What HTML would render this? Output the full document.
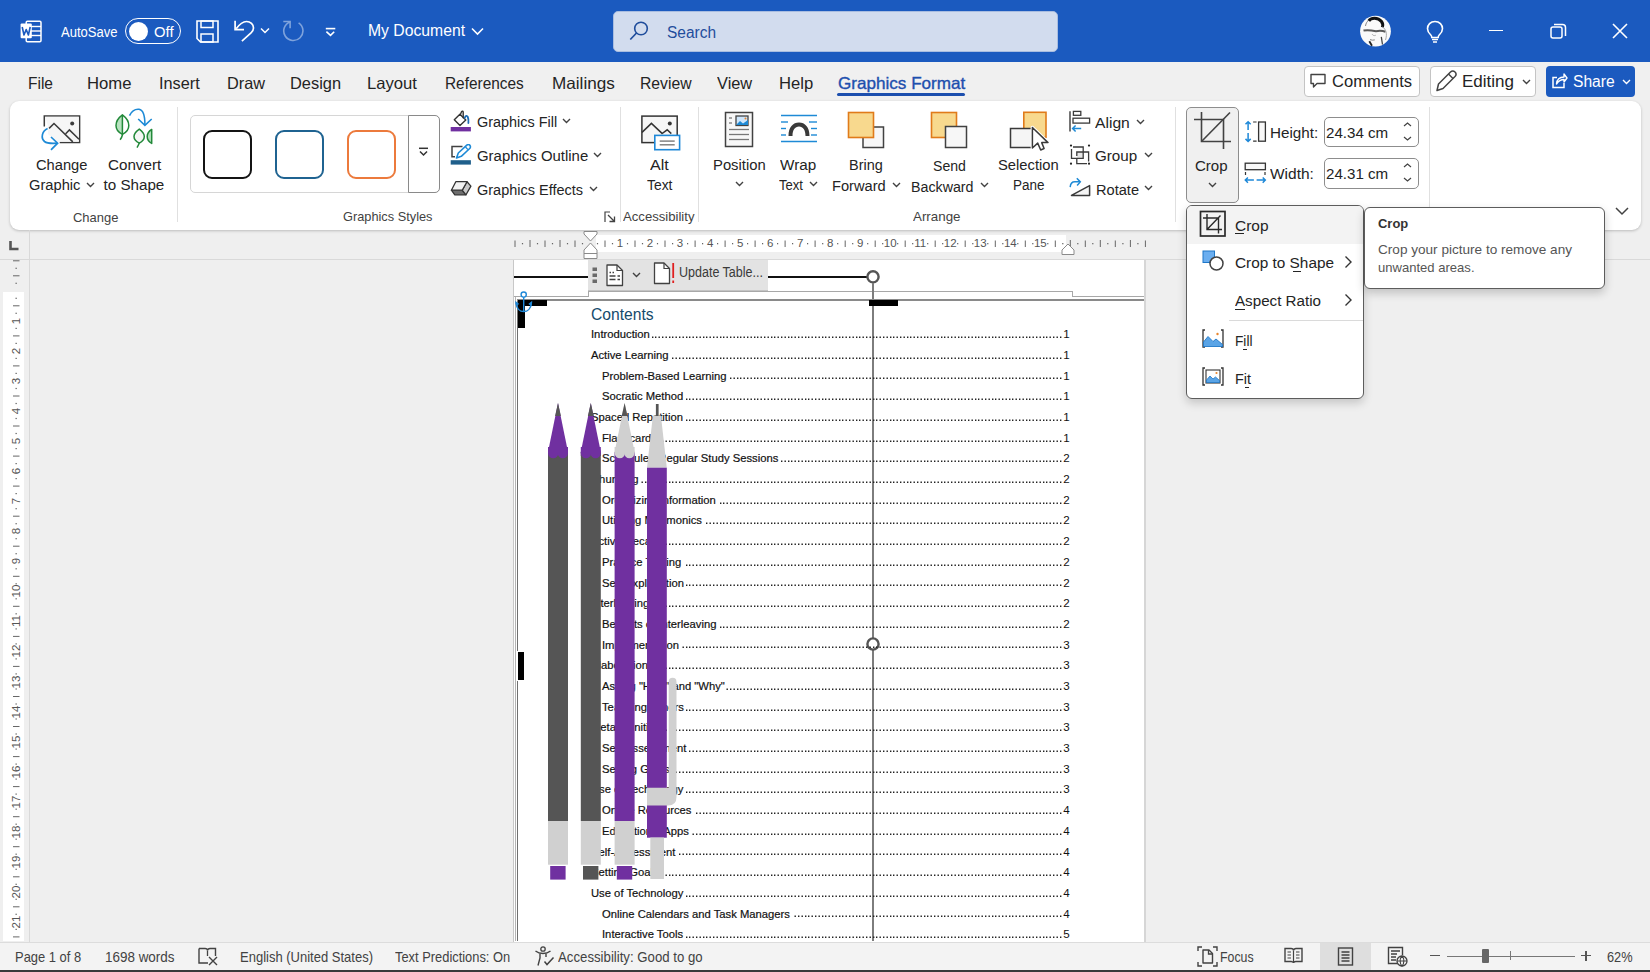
<!DOCTYPE html>
<html><head><meta charset="utf-8"><style>
html,body{margin:0;padding:0;width:1650px;height:972px;overflow:hidden;background:#efefef;font-family:"Liberation Sans", sans-serif;position:relative}
</style></head><body>
<div style="position:absolute;left:0px;top:0px;width:1650px;height:62px;background:#1b5abf"></div>
<svg style="position:absolute;left:20px;top:20px;" width="23" height="23" viewBox="0 0 23 23" fill="none">
<rect x="6.2" y="1.3" width="14.8" height="20.5" rx="1.2" stroke="#fff" stroke-width="1.5"/>
<line x1="11" y1="6.5" x2="21" y2="6.5" stroke="#fff" stroke-width="1.4"/>
<line x1="11" y1="11" x2="21" y2="11" stroke="#fff" stroke-width="1.4"/>
<line x1="11" y1="15.5" x2="21" y2="15.5" stroke="#fff" stroke-width="1.4"/>
<rect x="0.6" y="3.6" width="11.2" height="14.6" rx="1" fill="#fff"/>
<path d="M2.2 7 L4 15 L6.2 9.5 L8.4 15 L10.2 7" stroke="#1b5abf" stroke-width="1.6" fill="none" stroke-linejoin="round"/>
</svg>
<div style="position:absolute;left:61.00px;top:25.15px;font-size:14px;line-height:14px;color:#fff;font-weight:normal;white-space:nowrap;transform:scaleX(0.9307);transform-origin:0 0;">AutoSave</div>
<div style="position:absolute;left:125px;top:18px;width:56px;height:26px;border:1.5px solid #fff;border-radius:14px;box-sizing:border-box"></div>
<div style="position:absolute;left:129px;top:22px;width:19px;height:19px;border-radius:50%;background:#fff"></div>
<div style="position:absolute;left:154.00px;top:25.15px;font-size:14px;line-height:14px;color:#fff;font-weight:normal;white-space:nowrap;transform:scaleX(1.0589);transform-origin:0 0;">Off</div>
<svg style="position:absolute;left:196px;top:20px;" width="23" height="23" viewBox="0 0 23 23" fill="none">
<path d="M1 1 H22 V22 H4.5 L1 18.5 Z" stroke="#fff" stroke-width="1.6" fill="none"/>
<rect x="5" y="1" width="12" height="6.5" stroke="#fff" stroke-width="1.5"/>
<rect x="5" y="14" width="12" height="8" stroke="#fff" stroke-width="1.5"/>
</svg>
<svg style="position:absolute;left:233px;top:20px;" width="23" height="23" viewBox="0 0 23 23" fill="none">
<path d="M2.1 0.8 V9.6 H11" stroke="#fff" stroke-width="1.7" fill="none"/>
<path d="M3.2 8.8 C6.5 4.2 9.8 1.5 13.5 1.5 C17.5 1.5 20.5 4.5 20.5 8 C20.5 10 19.5 11.5 18 13 L8.9 21.2" stroke="#fff" stroke-width="1.7" fill="none"/>
</svg>
<svg style="position:absolute;left:260px;top:27px;" width="10" height="7" viewBox="0 0 10 7" fill="none"><path d="M1 1.5 L5 5.5 L9 1.5" stroke="#fff" stroke-width="1.5"/></svg>
<svg style="position:absolute;left:282px;top:20px;" width="23" height="23" viewBox="0 0 23 23" fill="none">
<path d="M16.6 2.9 A9.6 9.6 0 1 1 8.1 1.9" stroke="#7fa3dc" stroke-width="1.6" fill="none"/>
<path d="M1.3 1.5 H8.1 V8.3" stroke="#7fa3dc" stroke-width="1.6" fill="none"/>
</svg>
<svg style="position:absolute;left:324px;top:26px;" width="13" height="11" viewBox="0 0 13 11" fill="none"><line x1="1.8" y1="2.6" x2="11.3" y2="2.6" stroke="#fff" stroke-width="1.6"/><path d="M2.4 5.7 L6.5 9.4 L10.2 5.7" stroke="#fff" stroke-width="1.6"/></svg>
<div style="position:absolute;left:368.00px;top:23.46px;font-size:16px;line-height:16px;color:#fff;font-weight:normal;white-space:nowrap;transform:scaleX(0.9828);transform-origin:0 0;">My Document</div>
<svg style="position:absolute;left:471px;top:27px;" width="13" height="9" viewBox="0 0 13 9" fill="none"><path d="M1 1.5 L6.5 7 L12 1.5" stroke="#fff" stroke-width="1.6"/></svg>
<div style="position:absolute;left:613px;top:10.5px;width:445px;height:41px;background:#d2dcee;border:1px solid #a9bde0;border-radius:5px;box-sizing:border-box"></div>
<svg style="position:absolute;left:629px;top:21px;" width="20" height="20" viewBox="0 0 20 20" fill="none"><circle cx="12" cy="7.5" r="6.3" stroke="#1f4d9c" stroke-width="1.6"/><line x1="7.5" y1="12" x2="1.3" y2="18.5" stroke="#1f4d9c" stroke-width="1.7"/></svg>
<div style="position:absolute;left:666.50px;top:25.46px;font-size:16px;line-height:16px;color:#1f4d9c;font-weight:normal;white-space:nowrap;transform:scaleX(0.9666);transform-origin:0 0;">Search</div>
<svg style="position:absolute;left:1359px;top:15px" width="33" height="33" viewBox="0 0 33 33">
<circle cx="16.5" cy="16.2" r="15.4" fill="#fafafa"/>
<path d="M9.8 6 C11.5 2.5 19 2 22.5 6.5 C23.8 8.3 24 10.5 23.3 12.2" stroke="#111" stroke-width="3" fill="none"/>
<path d="M6.5 11 C7 8 8 6.5 9.5 5.5" stroke="#777" stroke-width="0.9" fill="none"/>
<path d="M4.5 15.6 C9 14.6 14 15.6 17 16.2 C20 15.6 23 15.4 26.5 16.8" stroke="#5a5a5a" stroke-width="2" fill="none"/>
<path d="M23.5 12 C27 14 28.5 19 26.5 25" stroke="#aaa" stroke-width="1" fill="none"/>
<path d="M11 24.6 Q13.3 25.6 15.8 24.9" stroke="#888" stroke-width="1" fill="none"/>
<path d="M10.3 26.3 L13 30.8" stroke="#222" stroke-width="1.8"/>
<path d="M22.3 21.8 L23.5 29.5" stroke="#444" stroke-width="1.3"/>
<path d="M13 19 C14 21 16 21 17 20" stroke="#aaa" stroke-width="0.8" fill="none"/>
</svg>
<svg style="position:absolute;left:1426px;top:20px;" width="18" height="23" viewBox="0 0 18 23" fill="none">
<path d="M9 1.5 C4.5 1.5 1.5 4.8 1.5 8.8 C1.5 11.5 3 13.3 4.8 15 C5.6 15.8 5.8 16.5 5.8 17.5 H12.2 C12.2 16.5 12.4 15.8 13.2 15 C15 13.3 16.5 11.5 16.5 8.8 C16.5 4.8 13.5 1.5 9 1.5 Z" stroke="#fff" stroke-width="1.6" fill="none"/>
<line x1="6" y1="19.5" x2="12" y2="19.5" stroke="#fff" stroke-width="1.5"/>
<line x1="7" y1="22" x2="11" y2="22" stroke="#fff" stroke-width="1.5"/>
</svg>
<div style="position:absolute;left:1489px;top:29.5px;width:14px;height:1.6px;background:#fff"></div>
<svg style="position:absolute;left:1550px;top:23px;" width="17" height="17" viewBox="0 0 17 17" fill="none">
<rect x="1" y="4" width="11" height="11" rx="2" stroke="#fff" stroke-width="1.5"/>
<path d="M4 1.5 H12.5 C14.2 1.5 15.5 2.8 15.5 4.5 V13" stroke="#fff" stroke-width="1.5" fill="none"/>
</svg>
<svg style="position:absolute;left:1612px;top:23px;" width="16" height="16" viewBox="0 0 16 16" fill="none"><path d="M1 1 L15 15 M15 1 L1 15" stroke="#fff" stroke-width="1.6"/></svg>
<div style="position:absolute;left:0px;top:62px;width:1650px;height:38px;background:#f0f0f0"></div>
<div style="position:absolute;left:28.00px;top:75.33px;font-size:16.5px;line-height:16.5px;color:#242424;font-weight:normal;white-space:nowrap;transform:scaleX(0.9403);transform-origin:0 0;">File</div>
<div style="position:absolute;left:87.30px;top:75.33px;font-size:16.5px;line-height:16.5px;color:#242424;font-weight:normal;white-space:nowrap;transform:scaleX(1.0111);transform-origin:0 0;">Home</div>
<div style="position:absolute;left:159.00px;top:75.33px;font-size:16.5px;line-height:16.5px;color:#242424;font-weight:normal;white-space:nowrap;transform:scaleX(0.9863);transform-origin:0 0;">Insert</div>
<div style="position:absolute;left:226.50px;top:75.33px;font-size:16.5px;line-height:16.5px;color:#242424;font-weight:normal;white-space:nowrap;transform:scaleX(0.9869);transform-origin:0 0;">Draw</div>
<div style="position:absolute;left:290.00px;top:75.33px;font-size:16.5px;line-height:16.5px;color:#242424;font-weight:normal;white-space:nowrap;transform:scaleX(0.9930);transform-origin:0 0;">Design</div>
<div style="position:absolute;left:367.00px;top:75.33px;font-size:16.5px;line-height:16.5px;color:#242424;font-weight:normal;white-space:nowrap;transform:scaleX(1.0093);transform-origin:0 0;">Layout</div>
<div style="position:absolute;left:444.80px;top:75.33px;font-size:16.5px;line-height:16.5px;color:#242424;font-weight:normal;white-space:nowrap;transform:scaleX(0.9327);transform-origin:0 0;">References</div>
<div style="position:absolute;left:551.70px;top:75.33px;font-size:16.5px;line-height:16.5px;color:#242424;font-weight:normal;white-space:nowrap;transform:scaleX(1.0376);transform-origin:0 0;">Mailings</div>
<div style="position:absolute;left:640.00px;top:75.33px;font-size:16.5px;line-height:16.5px;color:#242424;font-weight:normal;white-space:nowrap;transform:scaleX(0.9538);transform-origin:0 0;">Review</div>
<div style="position:absolute;left:717.40px;top:75.33px;font-size:16.5px;line-height:16.5px;color:#242424;font-weight:normal;white-space:nowrap;transform:scaleX(0.9925);transform-origin:0 0;">View</div>
<div style="position:absolute;left:778.50px;top:75.33px;font-size:16.5px;line-height:16.5px;color:#242424;font-weight:normal;white-space:nowrap;transform:scaleX(1.0078);transform-origin:0 0;">Help</div>
<div style="position:absolute;left:837.50px;top:75.33px;font-size:16.5px;line-height:16.5px;color:#1d4fae;font-weight:normal;white-space:nowrap;transform:scaleX(1.0361);transform-origin:0 0;-webkit-text-stroke:0.35px #1d4fae;">Graphics Format</div>
<div style="position:absolute;left:837px;top:93px;width:128px;height:3px;background:#1d4fae;border-radius:1.5px"></div>
<div style="position:absolute;left:1304px;top:65.5px;width:116px;height:31px;background:#fff;border:1px solid #c4c4c4;border-radius:4px;box-sizing:border-box"></div>
<svg style="position:absolute;left:1310px;top:73px;" width="16" height="15" viewBox="0 0 16 15" fill="none"><path d="M1 1.5 H15 V10.5 H7 L3.5 14 V10.5 H1 Z" stroke="#424242" stroke-width="1.4" fill="none" stroke-linejoin="round"/></svg>
<div style="position:absolute;left:1331.50px;top:74.16px;font-size:16px;line-height:16px;color:#242424;font-weight:normal;white-space:nowrap;transform:scaleX(1.0342);transform-origin:0 0;">Comments</div>
<div style="position:absolute;left:1430px;top:65.5px;width:106px;height:31px;background:#fff;border:1px solid #c4c4c4;border-radius:4px;box-sizing:border-box"></div>
<svg style="position:absolute;left:1435px;top:70px;" width="23" height="22" viewBox="0 0 23 22" fill="none"><path d="M2 20.5 L3.5 14 L15.5 2 C16.8 0.8 18.8 0.8 20 2 C21.2 3.2 21.2 5.2 20 6.5 L8 18.5 Z" stroke="#424242" stroke-width="1.5" fill="none" stroke-linejoin="round"/><line x1="13.5" y1="4" x2="18" y2="8.5" stroke="#424242" stroke-width="1.4"/></svg>
<div style="position:absolute;left:1462.40px;top:74.16px;font-size:16px;line-height:16px;color:#242424;font-weight:normal;white-space:nowrap;transform:scaleX(1.0629);transform-origin:0 0;">Editing</div>
<svg style="position:absolute;left:1522px;top:79px;" width="9" height="6" viewBox="0 0 9 6" fill="none"><path d="M1 1 L4.5 4.5 L8 1" stroke="#424242" stroke-width="1.4"/></svg>
<div style="position:absolute;left:1546px;top:66px;width:89px;height:30.5px;background:#1b5abf;border-radius:4px"></div>
<svg style="position:absolute;left:1551px;top:72px;" width="17" height="17" viewBox="0 0 17 17" fill="none"><path d="M6 5.5 H2 V15.5 H13 V11" stroke="#fff" stroke-width="1.5" fill="none"/><path d="M5.5 12 C6 7 9 5 13 5 V2 L16 6 L13 10 V7.5 C10 7.5 7.5 9 5.5 12 Z" stroke="#fff" stroke-width="1.4" fill="none" stroke-linejoin="round"/></svg>
<div style="position:absolute;left:1573.00px;top:74.16px;font-size:16px;line-height:16px;color:#fff;font-weight:normal;white-space:nowrap;transform:scaleX(0.9767);transform-origin:0 0;">Share</div>
<svg style="position:absolute;left:1622px;top:79px;" width="9" height="6" viewBox="0 0 9 6" fill="none"><path d="M1 1 L4.5 4.5 L8 1" stroke="#fff" stroke-width="1.4"/></svg>
<div style="position:absolute;left:10px;top:100.5px;width:1631px;height:129.5px;background:#fff;border-radius:9px;box-shadow:0 1px 3px rgba(0,0,0,0.22)"></div>
<div style="position:absolute;left:177px;top:107px;width:1px;height:115px;background:#e0e0e0"></div>
<div style="position:absolute;left:619.5px;top:107px;width:1px;height:115px;background:#e0e0e0"></div>
<div style="position:absolute;left:698px;top:107px;width:1px;height:115px;background:#e0e0e0"></div>
<div style="position:absolute;left:1174.5px;top:107px;width:1px;height:115px;background:#e0e0e0"></div>
<div style="position:absolute;left:1429px;top:107px;width:1px;height:115px;background:#e0e0e0"></div>
<div style="position:absolute;left:73.30px;top:210.83px;font-size:13.2px;line-height:13.2px;color:#424242;font-weight:normal;white-space:nowrap;transform:scaleX(0.9828);transform-origin:0 0;">Change</div>
<div style="position:absolute;left:343.30px;top:209.83px;font-size:13.2px;line-height:13.2px;color:#424242;font-weight:normal;white-space:nowrap;transform:scaleX(0.9692);transform-origin:0 0;">Graphics Styles</div>
<div style="position:absolute;left:623.00px;top:210.23px;font-size:13.2px;line-height:13.2px;color:#424242;font-weight:normal;white-space:nowrap;transform:scaleX(0.9956);transform-origin:0 0;">Accessibility</div>
<div style="position:absolute;left:912.70px;top:210.23px;font-size:13.2px;line-height:13.2px;color:#424242;font-weight:normal;white-space:nowrap;transform:scaleX(1.0124);transform-origin:0 0;">Arrange</div>
<div style="position:absolute;left:36.40px;top:156.53px;font-size:15.2px;line-height:15.2px;color:#242424;font-weight:normal;white-space:nowrap;transform:scaleX(0.9662);transform-origin:0 0;">Change</div>
<div style="position:absolute;left:28.50px;top:176.73px;font-size:15.2px;line-height:15.2px;color:#242424;font-weight:normal;white-space:nowrap;transform:scaleX(0.9666);transform-origin:0 0;">Graphic</div>
<div style="position:absolute;left:107.60px;top:156.53px;font-size:15.2px;line-height:15.2px;color:#242424;font-weight:normal;white-space:nowrap;transform:scaleX(1.0004);transform-origin:0 0;">Convert</div>
<div style="position:absolute;left:103.50px;top:176.73px;font-size:15.2px;line-height:15.2px;color:#242424;font-weight:normal;white-space:nowrap;transform:scaleX(1.0000);transform-origin:0 0;">to Shape</div>
<div style="position:absolute;left:189.5px;top:115px;width:250px;height:77.5px;border:1px solid #d6d6d6;border-radius:5px;box-sizing:border-box;background:#fff"></div>
<div style="position:absolute;left:408px;top:115px;width:31.5px;height:77.5px;border:1px solid #8a8a8a;border-radius:0 5px 5px 0;box-sizing:border-box;background:#fff"></div>
<div style="position:absolute;left:202.5px;top:129.5px;width:49px;height:49px;border:2px solid #141414;border-radius:9px;box-sizing:border-box"></div>
<div style="position:absolute;left:274.5px;top:129.5px;width:49px;height:49px;border:2px solid #1f6391;border-radius:9px;box-sizing:border-box"></div>
<div style="position:absolute;left:346.5px;top:129.5px;width:49px;height:49px;border:2px solid #ec7a3c;border-radius:9px;box-sizing:border-box"></div>
<svg style="position:absolute;left:418px;top:147px;" width="11" height="10" viewBox="0 0 11 10" fill="none"><line x1="1" y1="1.3" x2="10" y2="1.3" stroke="#333" stroke-width="1.5"/><path d="M2 4.5 L5.5 8 L9 4.5" stroke="#333" stroke-width="1.5"/></svg>
<div style="position:absolute;left:476.80px;top:114.13px;font-size:15.2px;line-height:15.2px;color:#242424;font-weight:normal;white-space:nowrap;transform:scaleX(0.9503);transform-origin:0 0;">Graphics Fill</div>
<div style="position:absolute;left:476.80px;top:148.13px;font-size:15.2px;line-height:15.2px;color:#242424;font-weight:normal;white-space:nowrap;transform:scaleX(0.9831);transform-origin:0 0;">Graphics Outline</div>
<div style="position:absolute;left:476.80px;top:181.63px;font-size:15.2px;line-height:15.2px;color:#242424;font-weight:normal;white-space:nowrap;transform:scaleX(0.9538);transform-origin:0 0;">Graphics Effects</div>
<svg style="position:absolute;left:562px;top:118px;" width="9" height="6" viewBox="0 0 9 6" fill="none"><path d="M1 1 L4.5 4.5 L8 1" stroke="#424242" stroke-width="1.4"/></svg>
<svg style="position:absolute;left:592.5px;top:152px;" width="9" height="6" viewBox="0 0 9 6" fill="none"><path d="M1 1 L4.5 4.5 L8 1" stroke="#424242" stroke-width="1.4"/></svg>
<svg style="position:absolute;left:588.5px;top:185.5px;" width="9" height="6" viewBox="0 0 9 6" fill="none"><path d="M1 1 L4.5 4.5 L8 1" stroke="#424242" stroke-width="1.4"/></svg>
<div style="position:absolute;left:650.00px;top:156.63px;font-size:15.2px;line-height:15.2px;color:#242424;font-weight:normal;white-space:nowrap;transform:scaleX(1.0607);transform-origin:0 0;">Alt</div>
<div style="position:absolute;left:647.00px;top:177.13px;font-size:15.2px;line-height:15.2px;color:#242424;font-weight:normal;white-space:nowrap;transform:scaleX(0.9120);transform-origin:0 0;">Text</div>
<div style="position:absolute;left:712.80px;top:156.63px;font-size:15.2px;line-height:15.2px;color:#242424;font-weight:normal;white-space:nowrap;transform:scaleX(0.9754);transform-origin:0 0;">Position</div>
<svg style="position:absolute;left:734.5px;top:180.5px;" width="9" height="6" viewBox="0 0 9 6" fill="none"><path d="M1 1 L4.5 4.5 L8 1" stroke="#424242" stroke-width="1.4"/></svg>
<div style="position:absolute;left:780.00px;top:156.63px;font-size:15.2px;line-height:15.2px;color:#242424;font-weight:normal;white-space:nowrap;transform:scaleX(1.0053);transform-origin:0 0;">Wrap</div>
<div style="position:absolute;left:779.40px;top:177.13px;font-size:15.2px;line-height:15.2px;color:#242424;font-weight:normal;white-space:nowrap;transform:scaleX(0.8617);transform-origin:0 0;">Text</div>
<svg style="position:absolute;left:808.5px;top:180.5px;" width="9" height="6" viewBox="0 0 9 6" fill="none"><path d="M1 1 L4.5 4.5 L8 1" stroke="#424242" stroke-width="1.4"/></svg>
<div style="position:absolute;left:849.20px;top:157.13px;font-size:15.2px;line-height:15.2px;color:#242424;font-weight:normal;white-space:nowrap;transform:scaleX(0.9533);transform-origin:0 0;">Bring</div>
<div style="position:absolute;left:831.70px;top:178.13px;font-size:15.2px;line-height:15.2px;color:#242424;font-weight:normal;white-space:nowrap;transform:scaleX(0.9641);transform-origin:0 0;">Forward</div>
<svg style="position:absolute;left:891.5px;top:182px;" width="9" height="6" viewBox="0 0 9 6" fill="none"><path d="M1 1 L4.5 4.5 L8 1" stroke="#424242" stroke-width="1.4"/></svg>
<div style="position:absolute;left:932.50px;top:157.63px;font-size:15.2px;line-height:15.2px;color:#242424;font-weight:normal;white-space:nowrap;transform:scaleX(0.9276);transform-origin:0 0;">Send</div>
<div style="position:absolute;left:910.50px;top:178.53px;font-size:15.2px;line-height:15.2px;color:#242424;font-weight:normal;white-space:nowrap;transform:scaleX(0.9373);transform-origin:0 0;">Backward</div>
<svg style="position:absolute;left:979.5px;top:182px;" width="9" height="6" viewBox="0 0 9 6" fill="none"><path d="M1 1 L4.5 4.5 L8 1" stroke="#424242" stroke-width="1.4"/></svg>
<div style="position:absolute;left:997.50px;top:156.53px;font-size:15.2px;line-height:15.2px;color:#242424;font-weight:normal;white-space:nowrap;transform:scaleX(0.9715);transform-origin:0 0;">Selection</div>
<div style="position:absolute;left:1012.50px;top:177.13px;font-size:15.2px;line-height:15.2px;color:#242424;font-weight:normal;white-space:nowrap;transform:scaleX(0.8881);transform-origin:0 0;">Pane</div>
<div style="position:absolute;left:1095.40px;top:114.93px;font-size:15.2px;line-height:15.2px;color:#242424;font-weight:normal;white-space:nowrap;transform:scaleX(1.0305);transform-origin:0 0;">Align</div>
<svg style="position:absolute;left:1135.5px;top:118.5px;" width="9" height="6" viewBox="0 0 9 6" fill="none"><path d="M1 1 L4.5 4.5 L8 1" stroke="#424242" stroke-width="1.4"/></svg>
<div style="position:absolute;left:1095.40px;top:147.73px;font-size:15.2px;line-height:15.2px;color:#242424;font-weight:normal;white-space:nowrap;transform:scaleX(0.9997);transform-origin:0 0;">Group</div>
<svg style="position:absolute;left:1143.5px;top:151.5px;" width="9" height="6" viewBox="0 0 9 6" fill="none"><path d="M1 1 L4.5 4.5 L8 1" stroke="#424242" stroke-width="1.4"/></svg>
<div style="position:absolute;left:1096.00px;top:181.63px;font-size:15.2px;line-height:15.2px;color:#242424;font-weight:normal;white-space:nowrap;transform:scaleX(0.9610);transform-origin:0 0;">Rotate</div>
<svg style="position:absolute;left:1144px;top:185px;" width="9" height="6" viewBox="0 0 9 6" fill="none"><path d="M1 1 L4.5 4.5 L8 1" stroke="#424242" stroke-width="1.4"/></svg>
<div style="position:absolute;left:1186px;top:106.5px;width:52.5px;height:96.5px;background:#f0f0f0;border:1px solid #8d8d8d;border-radius:5px;box-sizing:border-box"></div>
<div style="position:absolute;left:1195.40px;top:158.33px;font-size:15.2px;line-height:15.2px;color:#242424;font-weight:normal;white-space:nowrap;transform:scaleX(0.9903);transform-origin:0 0;">Crop</div>
<svg style="position:absolute;left:1207.5px;top:182px;" width="9" height="6" viewBox="0 0 9 6" fill="none"><path d="M1 1 L4.5 4.5 L8 1" stroke="#424242" stroke-width="1.4"/></svg>
<div style="position:absolute;left:1269.80px;top:124.73px;font-size:15.2px;line-height:15.2px;color:#242424;font-weight:normal;white-space:nowrap;transform:scaleX(1.0016);transform-origin:0 0;">Height:</div>
<div style="position:absolute;left:1269.80px;top:165.63px;font-size:15.2px;line-height:15.2px;color:#242424;font-weight:normal;white-space:nowrap;transform:scaleX(1.0200);transform-origin:0 0;">Width:</div>
<div style="position:absolute;left:1323.5px;top:116.5px;width:95.5px;height:30px;background:#fff;border:1px solid #8d8d8d;border-radius:5px;box-sizing:border-box"></div>
<div style="position:absolute;left:1323.5px;top:157.5px;width:95.5px;height:31px;background:#fff;border:1px solid #8d8d8d;border-radius:5px;box-sizing:border-box"></div>
<div style="position:absolute;left:1326.30px;top:125.13px;font-size:15.2px;line-height:15.2px;color:#242424;font-weight:normal;white-space:nowrap;transform:scaleX(0.9957);transform-origin:0 0;">24.34 cm</div>
<div style="position:absolute;left:1326.30px;top:166.13px;font-size:15.2px;line-height:15.2px;color:#242424;font-weight:normal;white-space:nowrap;transform:scaleX(0.9957);transform-origin:0 0;">24.31 cm</div>
<svg style="position:absolute;left:1403px;top:122px;" width="9" height="5" viewBox="0 0 9 5" fill="none"><path d="M1 4 L4.5 1 L8 4" stroke="#424242" stroke-width="1.2"/></svg>
<svg style="position:absolute;left:1403px;top:136px;" width="9" height="5" viewBox="0 0 9 5" fill="none"><path d="M1 1 L4.5 4 L8 1" stroke="#424242" stroke-width="1.2"/></svg>
<svg style="position:absolute;left:1403px;top:163px;" width="9" height="5" viewBox="0 0 9 5" fill="none"><path d="M1 4 L4.5 1 L8 4" stroke="#424242" stroke-width="1.2"/></svg>
<svg style="position:absolute;left:1403px;top:177px;" width="9" height="5" viewBox="0 0 9 5" fill="none"><path d="M1 1 L4.5 4 L8 1" stroke="#424242" stroke-width="1.2"/></svg>
<svg style="position:absolute;left:1615px;top:207px;" width="14" height="9" viewBox="0 0 14 9" fill="none"><path d="M1 1 L7 7 L13 1" stroke="#424242" stroke-width="1.5"/></svg>
<svg style="position:absolute;left:85.5px;top:181.5px;" width="9" height="6" viewBox="0 0 9 6" fill="none"><path d="M1 1 L4.5 4.5 L8 1" stroke="#424242" stroke-width="1.4"/></svg>
<svg style="position:absolute;left:36px;top:104px;" width="124" height="50" viewBox="0 0 124 50" fill="none">
<path d="M8.3 22.5 V12 H43.6 V38.5 H23.7" stroke="#3a3a3a" stroke-width="1.5" fill="none"/>
<path d="M9 12.8 H42.8 V37.8 H20 L12 30 V22 Z" fill="#f6f6f6"/>
<path d="M13.1 24.4 L18 19.5 L36.8 37.9 M29.7 29.7 L33.4 25.9 L43 35.3" stroke="#3a3a3a" stroke-width="1.5" fill="none"/>
<circle cx="36.2" cy="19.5" r="2" fill="#3a3a3a"/>
<path d="M11.6 24.4 C6 27 4.5 34 8.5 37.5 C11 39.5 15 39.6 21 39.2" stroke="#1e8ad6" stroke-width="1.7" fill="none"/>
<path d="M15 33 L21.6 39.2 L15 45.8" stroke="#1e8ad6" stroke-width="1.7" fill="none"/>
<path d="M86.4 10.9 C81.5 14.5 80 18 80 21.5 C80 25.5 82.5 28.5 86.4 30.4 Z" fill="#b7e2bf"/>
<path d="M86.4 10.9 C81.5 14.5 80 18 80 21.5 C80 25.5 82.5 28.5 86.4 30.4 C90.3 28.5 92.8 25.5 92.8 21.5 C92.8 18 91.3 14.5 86.4 10.9 Z" stroke="#23893a" stroke-width="1.5" fill="none"/>
<path d="M86.4 11 V31 C86 33 85 34.5 84.1 35.7" stroke="#23893a" stroke-width="1.5" fill="none"/>
<path d="M93.5 11.6 C96 6.5 100 5 103 5.3 C107 6 109 10 108.9 21" stroke="#1e8ad6" stroke-width="1.6" fill="none"/>
<path d="M102.2 15 L108.9 21.4 L115.7 15" stroke="#1e8ad6" stroke-width="1.6" fill="none"/>
<path d="M103.3 25.2 C99.5 28 98 30 98 32.5 C98 35.3 100 37.5 103.3 39.1 C106.5 37.5 108.3 35.3 108.3 32.5 C108.3 30 107 28 103.3 25.2 Z" stroke="#23893a" stroke-width="1.5" fill="#f6f6f6"/>
<path d="M103.3 39.1 C102.6 41 101.8 42.3 101 43.6" stroke="#23893a" stroke-width="1.5" fill="none"/>
<path d="M115.7 25.5 V39.4 C112.5 37.5 111.2 35 111.2 32.4 C111.2 29.8 112.5 27.5 115.7 25.5 Z" stroke="#23893a" stroke-width="1.5" fill="#b7e2bf" stroke-linejoin="round"/>
</svg>
<svg style="position:absolute;left:450px;top:110px;" width="22" height="22" viewBox="0 0 22 22" fill="none">
<path d="M4.3 9.7 L9.9 4.2 L15.8 9.9 L10 15.5 Z" stroke="#333" stroke-width="1.4" fill="#fff" stroke-linejoin="round"/>
<path d="M10.3 4.8 L11.6 1.6 C12.2 0.8 13.2 1.2 13.2 2.2 V7.8" stroke="#333" stroke-width="1.4" fill="none" stroke-linecap="round"/>
<path d="M14.8 7.8 C15.5 5.5 17 5.3 17.8 7 C18.6 8.8 18.6 11 18.4 13" stroke="#1a6bb5" stroke-width="1.8" fill="none" stroke-linecap="round"/>
<rect x="0.7" y="17" width="20.2" height="4.4" fill="#7030a0"/>
</svg>
<svg style="position:absolute;left:450px;top:144px;" width="22" height="22" viewBox="0 0 22 22" fill="none">
<path d="M12.5 2.5 H2 V12.8 H5" stroke="#424242" stroke-width="1.5" fill="none"/>
<path d="M6.5 14 L8.3 9 L16.8 1.2 C17.7 0.4 19.1 0.5 19.9 1.4 C20.7 2.3 20.6 3.7 19.7 4.5 L11.3 12.3 Z" fill="#fff" stroke="#1e8ad6" stroke-width="1.6" stroke-linejoin="round"/>
<line x1="15.5" y1="3" x2="18" y2="5.6" stroke="#1e8ad6" stroke-width="1.3"/>
<rect x="0.7" y="16.2" width="20.2" height="4.4" fill="#1f5f8b"/>
</svg>
<svg style="position:absolute;left:450px;top:179px;" width="22" height="18" viewBox="0 0 22 18" fill="none">
<path d="M1.4 11.2 H12.2 L16 15.8 H4.8 Z" fill="#6e6e6e" stroke="#333" stroke-width="1.3" stroke-linejoin="round"/>
<path d="M17 2.7 L20.9 7.1 L16 15.8 L12.2 11.2 Z" fill="#c9c9c9" stroke="#333" stroke-width="1.3" stroke-linejoin="round"/>
<path d="M5.8 2.7 H17 L12.2 11.2 H1.4 Z" fill="#f2f2f2" stroke="#333" stroke-width="1.3" stroke-linejoin="round"/>
</svg>
<svg style="position:absolute;left:604px;top:211px;" width="12" height="12" viewBox="0 0 12 12" fill="none"><path d="M1 11 V1 H6" stroke="#424242" stroke-width="1.2" fill="none"/><path d="M4 4 L10.5 10.5 M5.5 10.5 H10.5 V5.5" stroke="#424242" stroke-width="1.3" fill="none"/></svg>
<svg style="position:absolute;left:640px;top:114px;" width="42" height="38" viewBox="0 0 42 38" fill="none">
<rect x="1.9" y="2.1" width="35.3" height="26.5" fill="#f6f6f6" stroke="#333" stroke-width="1.5"/>
<path d="M2 18.4 L11.4 9.4 L22.3 19.6 M21.5 20 L27.2 15.8 L31.3 19.6" stroke="#333" stroke-width="1.5" fill="none"/>
<circle cx="29.8" cy="9.4" r="2" fill="#333"/>
<rect x="14.8" y="21.4" width="24.8" height="14.3" fill="#fff" stroke="#1e88d8" stroke-width="1.6"/>
<line x1="19.7" y1="27.1" x2="34.7" y2="27.1" stroke="#7a7a7a" stroke-width="1.4"/>
<line x1="19.7" y1="30.8" x2="34.7" y2="30.8" stroke="#7a7a7a" stroke-width="1.4"/>
</svg>
<svg style="position:absolute;left:724px;top:111px;" width="31" height="38" viewBox="0 0 31 38" fill="none">
<rect x="1.5" y="1.5" width="27" height="34" fill="#f7f7f7" stroke="#424242" stroke-width="1.5"/>
<rect x="12" y="5" width="12" height="9.5" fill="#cfe6fb" stroke="#424242" stroke-width="1.3"/>
<path d="M12.5 13.5 L16 10 L19 12.5 L24 9 V14 H12.5 Z" fill="#1e8ad6"/>
<circle cx="21.5" cy="7.5" r="1" fill="#e8862d"/>
<line x1="5" y1="7" x2="8" y2="7" stroke="#777" stroke-width="1.3"/>
<line x1="5" y1="12" x2="8" y2="12" stroke="#777" stroke-width="1.3"/>
<line x1="5" y1="18.5" x2="25" y2="18.5" stroke="#777" stroke-width="1.3"/>
<line x1="5" y1="23.5" x2="25" y2="23.5" stroke="#777" stroke-width="1.3"/>
<line x1="5" y1="28.5" x2="25" y2="28.5" stroke="#777" stroke-width="1.3"/>
</svg>
<svg style="position:absolute;left:780px;top:114px;" width="38" height="31" viewBox="0 0 38 31" fill="none">
<line x1="1" y1="1.5" x2="37" y2="1.5" stroke="#1e8ad6" stroke-width="1.4"/>
<line x1="1" y1="8" x2="8" y2="8" stroke="#1e8ad6" stroke-width="1.4"/>
<line x1="29" y1="8" x2="37" y2="8" stroke="#1e8ad6" stroke-width="1.4"/>
<line x1="1" y1="14.5" x2="6" y2="14.5" stroke="#1e8ad6" stroke-width="1.4"/>
<line x1="31" y1="14.5" x2="37" y2="14.5" stroke="#1e8ad6" stroke-width="1.4"/>
<line x1="1" y1="21" x2="6" y2="21" stroke="#1e8ad6" stroke-width="1.4"/>
<line x1="31" y1="21" x2="37" y2="21" stroke="#1e8ad6" stroke-width="1.4"/>
<line x1="1" y1="27.5" x2="37" y2="27.5" stroke="#1e8ad6" stroke-width="1.4"/>
<path d="M8.5 22 C8.5 13 13 8.5 19 8.5 C25 8.5 29.5 13 29.5 22 H25.5 C25.5 16 23 12.5 19 12.5 C15 12.5 12.5 16 12.5 22 Z" fill="#3a3a3a"/>
</svg>
<svg style="position:absolute;left:847px;top:111px;" width="38" height="38" viewBox="0 0 38 38" fill="none">
<path d="M16 16 V36.5 H36.5 V16 Z" fill="#f7f7f7" stroke="#424242" stroke-width="1.5"/>
<rect x="1.5" y="1.5" width="25" height="25" fill="#f8d98e" stroke="#e07b1a" stroke-width="1.6"/>
</svg>
<svg style="position:absolute;left:930px;top:111px;" width="38" height="38" viewBox="0 0 38 38" fill="none">
<rect x="1.5" y="1.5" width="25" height="25" fill="#f8d98e" stroke="#e07b1a" stroke-width="1.6"/>
<rect x="15.5" y="15.5" width="21" height="21" fill="#f7f7f7" stroke="#424242" stroke-width="1.5"/>
</svg>
<svg style="position:absolute;left:1009px;top:111px;" width="42" height="42" viewBox="0 0 42 42" fill="none">
<rect x="14.8" y="1.3" width="22.2" height="25" fill="#f8d98e" stroke="#e07b1a" stroke-width="1.6"/>
<rect x="1.5" y="17.5" width="21.5" height="19" fill="#f5f5f5" stroke="#3a3a3a" stroke-width="1.5"/>
<path d="M23.4 16.5 V37 L28.7 32.1 L31.7 39 L35.1 37.5 L32.7 31.6 H39 Z" fill="#fff" stroke="#fff" stroke-width="3.5" stroke-linejoin="round"/>
<path d="M23.4 16.5 V37 L28.7 32.1 L31.7 39 L35.1 37.5 L32.7 31.6 H39 Z" fill="#fff" stroke="#3a3a3a" stroke-width="1.5" stroke-linejoin="round"/>
</svg>
<svg style="position:absolute;left:1068px;top:110px;" width="23" height="23" viewBox="0 0 23 23" fill="none">
<line x1="2" y1="1.2" x2="2" y2="21.5" stroke="#3a3a3a" stroke-width="1.4"/>
<rect x="5.4" y="1.4" width="7.4" height="3.9" stroke="#3a3a3a" stroke-width="1.3"/>
<rect x="5" y="8.2" width="16.6" height="4.9" stroke="#3a3a3a" stroke-width="1.3"/>
<path d="M13.2 18.5 H4.6 M7.6 15.5 L4.6 18.5 L7.6 21.5" stroke="#1e8ad6" stroke-width="1.5" fill="none"/>
</svg>
<svg style="position:absolute;left:1069px;top:144px;" width="22" height="22" viewBox="0 0 22 22" fill="none">
<circle cx="2" cy="1.6" r="1.1" fill="#222"/><circle cx="20" cy="1.6" r="1.1" fill="#222"/>
<circle cx="2" cy="19.7" r="1.1" fill="#222"/><circle cx="20" cy="19.7" r="1.1" fill="#222"/>
<rect x="7.8" y="8" width="6.4" height="6.3" fill="#e6e6e6"/>
<path d="M4 3 H14.2 V14.3 H2.5 V5" stroke="#3a3a3a" stroke-width="1.3" fill="none"/>
<path d="M7.8 14.3 V19.7 H18 M19.6 17.5 V8 H7.8 V12" stroke="#3a3a3a" stroke-width="1.3" fill="none"/>
</svg>
<svg style="position:absolute;left:1069px;top:177px;" width="22" height="20" viewBox="0 0 22 20" fill="none">
<path d="M1.2 10.1 C1.5 6.5 3 4.8 5.8 4.8 H10.8" stroke="#1e8ad6" stroke-width="1.5" fill="none"/>
<path d="M7.8 1.3 L11.3 4.9 L8.1 8.6" stroke="#1e8ad6" stroke-width="1.5" fill="none"/>
<path d="M2.5 18.4 L20.6 8.6 V18.4 Z" stroke="#3a3a3a" stroke-width="1.5" fill="#f5f5f5" stroke-linejoin="round"/>
</svg>
<svg style="position:absolute;left:1193px;top:111px;" width="39" height="39" viewBox="0 0 39 39" fill="none">
<path d="M8.5 1 V30.5 H38" stroke="#424242" stroke-width="1.6" fill="none"/>
<path d="M1 8.5 H30.5 V38" stroke="#424242" stroke-width="1.6" fill="none"/>
<line x1="8.5" y1="30.5" x2="37" y2="1.5" stroke="#424242" stroke-width="1.6"/>
</svg>
<svg style="position:absolute;left:1244px;top:120px;" width="23" height="23" viewBox="0 0 23 23" fill="none">
<path d="M4.1 1.8 V10 M4.1 13.1 V21.4 M1.5 4.3 L4.1 1.7 L6.7 4.3 M1.5 18.9 L4.1 21.5 L6.7 18.9" stroke="#1e88d8" stroke-width="1.5" fill="none"/>
<path d="M9.1 2 H12.6 M9.1 21.2 H12.6" stroke="#333" stroke-width="1.2"/>
<rect x="14.6" y="2" width="6.8" height="19.2" stroke="#333" stroke-width="1.3" fill="#f8f8f8"/>
</svg>
<svg style="position:absolute;left:1244px;top:162px;" width="23" height="23" viewBox="0 0 23 23" fill="none">
<rect x="1.2" y="1.2" width="20.2" height="6.5" stroke="#333" stroke-width="1.3" fill="#f8f8f8"/>
<path d="M1.5 10 V13 M21 10 V13" stroke="#333" stroke-width="1.2"/>
<path d="M1.4 18.1 H9.9 M12.6 18.1 H21.2 M3.9 15.5 L1.3 18.1 L3.9 20.7 M18.7 15.5 L21.3 18.1 L18.7 20.7" stroke="#1e88d8" stroke-width="1.5" fill="none"/>
</svg>
<div style="position:absolute;left:29px;top:230px;width:1px;height:712px;background:#d9d9d9"></div>
<div style="position:absolute;left:0px;top:259px;width:1650px;height:1px;background:#d9d9d9"></div>
<svg style="position:absolute;left:9px;top:241px;" width="10" height="10" viewBox="0 0 10 10" fill="none"><path d="M1.5 0 V8 H9.5" stroke="#555" stroke-width="2.6" fill="none"/></svg>
<div style="position:absolute;left:596px;top:235px;width:470px;height:17px;background:#fff"></div>
<svg style="position:absolute;left:0;top:0" width="1650" height="972"><line x1="515.0" y1="240.5" x2="515.0" y2="247" stroke="#666" stroke-width="1"/><rect x="521.9" y="243" width="1.2" height="1.3" fill="#666"/><line x1="530.0" y1="240" x2="530.0" y2="247" stroke="#666" stroke-width="1"/><rect x="536.9" y="243" width="1.2" height="1.3" fill="#666"/><line x1="545.0" y1="240.5" x2="545.0" y2="247" stroke="#666" stroke-width="1"/><rect x="551.9" y="243" width="1.2" height="1.3" fill="#666"/><line x1="560.0" y1="240" x2="560.0" y2="247" stroke="#666" stroke-width="1"/><rect x="566.9" y="243" width="1.2" height="1.3" fill="#666"/><line x1="575.0" y1="240.5" x2="575.0" y2="247" stroke="#666" stroke-width="1"/><rect x="581.9" y="243" width="1.2" height="1.3" fill="#666"/><rect x="596.9" y="243" width="1.2" height="1.3" fill="#666"/><line x1="605.0" y1="240.5" x2="605.0" y2="247" stroke="#666" stroke-width="1"/><rect x="611.9" y="243" width="1.2" height="1.3" fill="#666"/><rect x="626.9" y="243" width="1.2" height="1.3" fill="#666"/><line x1="635.0" y1="240.5" x2="635.0" y2="247" stroke="#666" stroke-width="1"/><rect x="641.9" y="243" width="1.2" height="1.3" fill="#666"/><rect x="656.9" y="243" width="1.2" height="1.3" fill="#666"/><line x1="665.0" y1="240.5" x2="665.0" y2="247" stroke="#666" stroke-width="1"/><rect x="672.0" y="243" width="1.2" height="1.3" fill="#666"/><rect x="687.0" y="243" width="1.2" height="1.3" fill="#666"/><line x1="695.1" y1="240.5" x2="695.1" y2="247" stroke="#666" stroke-width="1"/><rect x="702.0" y="243" width="1.2" height="1.3" fill="#666"/><rect x="717.0" y="243" width="1.2" height="1.3" fill="#666"/><line x1="725.1" y1="240.5" x2="725.1" y2="247" stroke="#666" stroke-width="1"/><rect x="732.0" y="243" width="1.2" height="1.3" fill="#666"/><rect x="747.0" y="243" width="1.2" height="1.3" fill="#666"/><line x1="755.1" y1="240.5" x2="755.1" y2="247" stroke="#666" stroke-width="1"/><rect x="762.0" y="243" width="1.2" height="1.3" fill="#666"/><rect x="777.0" y="243" width="1.2" height="1.3" fill="#666"/><line x1="785.1" y1="240.5" x2="785.1" y2="247" stroke="#666" stroke-width="1"/><rect x="792.0" y="243" width="1.2" height="1.3" fill="#666"/><rect x="807.0" y="243" width="1.2" height="1.3" fill="#666"/><line x1="815.1" y1="240.5" x2="815.1" y2="247" stroke="#666" stroke-width="1"/><rect x="822.1" y="243" width="1.2" height="1.3" fill="#666"/><rect x="837.1" y="243" width="1.2" height="1.3" fill="#666"/><line x1="845.2" y1="240.5" x2="845.2" y2="247" stroke="#666" stroke-width="1"/><rect x="852.1" y="243" width="1.2" height="1.3" fill="#666"/><rect x="867.1" y="243" width="1.2" height="1.3" fill="#666"/><line x1="875.2" y1="240.5" x2="875.2" y2="247" stroke="#666" stroke-width="1"/><rect x="882.1" y="243" width="1.2" height="1.3" fill="#666"/><rect x="897.1" y="243" width="1.2" height="1.3" fill="#666"/><line x1="905.2" y1="240.5" x2="905.2" y2="247" stroke="#666" stroke-width="1"/><rect x="912.1" y="243" width="1.2" height="1.3" fill="#666"/><rect x="927.1" y="243" width="1.2" height="1.3" fill="#666"/><line x1="935.2" y1="240.5" x2="935.2" y2="247" stroke="#666" stroke-width="1"/><rect x="942.1" y="243" width="1.2" height="1.3" fill="#666"/><rect x="957.1" y="243" width="1.2" height="1.3" fill="#666"/><line x1="965.2" y1="240.5" x2="965.2" y2="247" stroke="#666" stroke-width="1"/><rect x="972.2" y="243" width="1.2" height="1.3" fill="#666"/><rect x="987.2" y="243" width="1.2" height="1.3" fill="#666"/><line x1="995.3" y1="240.5" x2="995.3" y2="247" stroke="#666" stroke-width="1"/><rect x="1002.2" y="243" width="1.2" height="1.3" fill="#666"/><rect x="1017.2" y="243" width="1.2" height="1.3" fill="#666"/><line x1="1025.3" y1="240.5" x2="1025.3" y2="247" stroke="#666" stroke-width="1"/><rect x="1032.2" y="243" width="1.2" height="1.3" fill="#666"/><rect x="1047.2" y="243" width="1.2" height="1.3" fill="#666"/><line x1="1055.3" y1="240.5" x2="1055.3" y2="247" stroke="#666" stroke-width="1"/><rect x="1062.2" y="243" width="1.2" height="1.3" fill="#666"/><line x1="1070.3" y1="240" x2="1070.3" y2="247" stroke="#666" stroke-width="1"/><rect x="1077.2" y="243" width="1.2" height="1.3" fill="#666"/><line x1="1085.3" y1="240.5" x2="1085.3" y2="247" stroke="#666" stroke-width="1"/><rect x="1092.2" y="243" width="1.2" height="1.3" fill="#666"/><line x1="1100.3" y1="240" x2="1100.3" y2="247" stroke="#666" stroke-width="1"/><rect x="1107.2" y="243" width="1.2" height="1.3" fill="#666"/><line x1="1115.3" y1="240.5" x2="1115.3" y2="247" stroke="#666" stroke-width="1"/><rect x="1122.3" y="243" width="1.2" height="1.3" fill="#666"/><line x1="1130.4" y1="240" x2="1130.4" y2="247" stroke="#666" stroke-width="1"/><rect x="1137.3" y="243" width="1.2" height="1.3" fill="#666"/><line x1="1145.4" y1="240.5" x2="1145.4" y2="247" stroke="#666" stroke-width="1"/></svg>
<div style="position:absolute;left:616.82px;top:238.27px;font-size:11.5px;line-height:11.5px;color:#555;font-weight:normal;white-space:nowrap;">1</div>
<div style="position:absolute;left:646.84px;top:238.27px;font-size:11.5px;line-height:11.5px;color:#555;font-weight:normal;white-space:nowrap;">2</div>
<div style="position:absolute;left:676.86px;top:238.27px;font-size:11.5px;line-height:11.5px;color:#555;font-weight:normal;white-space:nowrap;">3</div>
<div style="position:absolute;left:706.88px;top:238.27px;font-size:11.5px;line-height:11.5px;color:#555;font-weight:normal;white-space:nowrap;">4</div>
<div style="position:absolute;left:736.90px;top:238.27px;font-size:11.5px;line-height:11.5px;color:#555;font-weight:normal;white-space:nowrap;">5</div>
<div style="position:absolute;left:766.92px;top:238.27px;font-size:11.5px;line-height:11.5px;color:#555;font-weight:normal;white-space:nowrap;">6</div>
<div style="position:absolute;left:796.94px;top:238.27px;font-size:11.5px;line-height:11.5px;color:#555;font-weight:normal;white-space:nowrap;">7</div>
<div style="position:absolute;left:826.96px;top:238.27px;font-size:11.5px;line-height:11.5px;color:#555;font-weight:normal;white-space:nowrap;">8</div>
<div style="position:absolute;left:856.98px;top:238.27px;font-size:11.5px;line-height:11.5px;color:#555;font-weight:normal;white-space:nowrap;">9</div>
<div style="position:absolute;left:883.80px;top:238.27px;font-size:11.5px;line-height:11.5px;color:#555;font-weight:normal;white-space:nowrap;">10</div>
<div style="position:absolute;left:914.25px;top:238.27px;font-size:11.5px;line-height:11.5px;color:#555;font-weight:normal;white-space:nowrap;">11</div>
<div style="position:absolute;left:943.84px;top:238.27px;font-size:11.5px;line-height:11.5px;color:#555;font-weight:normal;white-space:nowrap;">12</div>
<div style="position:absolute;left:973.86px;top:238.27px;font-size:11.5px;line-height:11.5px;color:#555;font-weight:normal;white-space:nowrap;">13</div>
<div style="position:absolute;left:1003.88px;top:238.27px;font-size:11.5px;line-height:11.5px;color:#555;font-weight:normal;white-space:nowrap;">14</div>
<div style="position:absolute;left:1033.90px;top:238.27px;font-size:11.5px;line-height:11.5px;color:#555;font-weight:normal;white-space:nowrap;">15</div>
<svg style="position:absolute;left:583px;top:230px;" width="15" height="30" viewBox="0 0 15 30" fill="none">
<path d="M1 1.5 H14 V4 L7.5 11 L1 4 Z" fill="#fff" stroke="#8a8a8a" stroke-width="1"/>
<path d="M7.5 13 L14 20 V28.5 H1 V20 Z" fill="#fff" stroke="#8a8a8a" stroke-width="1"/>
<line x1="1" y1="23.5" x2="14" y2="23.5" stroke="#8a8a8a" stroke-width="1"/>
</svg>
<svg style="position:absolute;left:1061px;top:243px;" width="14" height="12" viewBox="0 0 14 12" fill="none"><path d="M7 1 L13 7 V11.5 H1 V7 Z" fill="#fff" stroke="#8a8a8a" stroke-width="1"/></svg>
<div style="position:absolute;left:3px;top:292px;width:21px;height:649px;background:#fff"></div>
<svg style="position:absolute;left:0;top:0" width="1650" height="972"><line x1="13" y1="260.8" x2="19.5" y2="260.8" stroke="#666" stroke-width="1"/><rect x="15.5" y="267.7" width="1.3" height="1.2" fill="#666"/><line x1="13" y1="275.8" x2="19.5" y2="275.8" stroke="#666" stroke-width="1"/><rect x="15.5" y="282.7" width="1.3" height="1.2" fill="#666"/><rect x="15.5" y="297.7" width="1.3" height="1.2" fill="#666"/><line x1="13" y1="305.8" x2="19.5" y2="305.8" stroke="#666" stroke-width="1"/><rect x="15.5" y="312.7" width="1.3" height="1.2" fill="#666"/><rect x="15.5" y="327.8" width="1.3" height="1.2" fill="#666"/><line x1="13" y1="335.9" x2="19.5" y2="335.9" stroke="#666" stroke-width="1"/><rect x="15.5" y="342.8" width="1.3" height="1.2" fill="#666"/><rect x="15.5" y="357.8" width="1.3" height="1.2" fill="#666"/><line x1="13" y1="365.9" x2="19.5" y2="365.9" stroke="#666" stroke-width="1"/><rect x="15.5" y="372.8" width="1.3" height="1.2" fill="#666"/><rect x="15.5" y="387.9" width="1.3" height="1.2" fill="#666"/><line x1="13" y1="396.0" x2="19.5" y2="396.0" stroke="#666" stroke-width="1"/><rect x="15.5" y="402.9" width="1.3" height="1.2" fill="#666"/><rect x="15.5" y="417.9" width="1.3" height="1.2" fill="#666"/><line x1="13" y1="426.0" x2="19.5" y2="426.0" stroke="#666" stroke-width="1"/><rect x="15.5" y="432.9" width="1.3" height="1.2" fill="#666"/><rect x="15.5" y="448.0" width="1.3" height="1.2" fill="#666"/><line x1="13" y1="456.1" x2="19.5" y2="456.1" stroke="#666" stroke-width="1"/><rect x="15.5" y="463.0" width="1.3" height="1.2" fill="#666"/><rect x="15.5" y="478.0" width="1.3" height="1.2" fill="#666"/><line x1="13" y1="486.1" x2="19.5" y2="486.1" stroke="#666" stroke-width="1"/><rect x="15.5" y="493.0" width="1.3" height="1.2" fill="#666"/><rect x="15.5" y="508.1" width="1.3" height="1.2" fill="#666"/><line x1="13" y1="516.2" x2="19.5" y2="516.2" stroke="#666" stroke-width="1"/><rect x="15.5" y="523.1" width="1.3" height="1.2" fill="#666"/><rect x="15.5" y="538.1" width="1.3" height="1.2" fill="#666"/><line x1="13" y1="546.2" x2="19.5" y2="546.2" stroke="#666" stroke-width="1"/><rect x="15.5" y="553.1" width="1.3" height="1.2" fill="#666"/><rect x="15.5" y="568.2" width="1.3" height="1.2" fill="#666"/><line x1="13" y1="576.3" x2="19.5" y2="576.3" stroke="#666" stroke-width="1"/><rect x="15.5" y="583.2" width="1.3" height="1.2" fill="#666"/><rect x="15.5" y="598.2" width="1.3" height="1.2" fill="#666"/><line x1="13" y1="606.3" x2="19.5" y2="606.3" stroke="#666" stroke-width="1"/><rect x="15.5" y="613.2" width="1.3" height="1.2" fill="#666"/><rect x="15.5" y="628.3" width="1.3" height="1.2" fill="#666"/><line x1="13" y1="636.4" x2="19.5" y2="636.4" stroke="#666" stroke-width="1"/><rect x="15.5" y="643.3" width="1.3" height="1.2" fill="#666"/><rect x="15.5" y="658.3" width="1.3" height="1.2" fill="#666"/><line x1="13" y1="666.4" x2="19.5" y2="666.4" stroke="#666" stroke-width="1"/><rect x="15.5" y="673.3" width="1.3" height="1.2" fill="#666"/><rect x="15.5" y="688.4" width="1.3" height="1.2" fill="#666"/><line x1="13" y1="696.5" x2="19.5" y2="696.5" stroke="#666" stroke-width="1"/><rect x="15.5" y="703.4" width="1.3" height="1.2" fill="#666"/><rect x="15.5" y="718.4" width="1.3" height="1.2" fill="#666"/><line x1="13" y1="726.5" x2="19.5" y2="726.5" stroke="#666" stroke-width="1"/><rect x="15.5" y="733.4" width="1.3" height="1.2" fill="#666"/><rect x="15.5" y="748.5" width="1.3" height="1.2" fill="#666"/><line x1="13" y1="756.6" x2="19.5" y2="756.6" stroke="#666" stroke-width="1"/><rect x="15.5" y="763.5" width="1.3" height="1.2" fill="#666"/><rect x="15.5" y="778.5" width="1.3" height="1.2" fill="#666"/><line x1="13" y1="786.6" x2="19.5" y2="786.6" stroke="#666" stroke-width="1"/><rect x="15.5" y="793.5" width="1.3" height="1.2" fill="#666"/><rect x="15.5" y="808.6" width="1.3" height="1.2" fill="#666"/><line x1="13" y1="816.7" x2="19.5" y2="816.7" stroke="#666" stroke-width="1"/><rect x="15.5" y="823.6" width="1.3" height="1.2" fill="#666"/><rect x="15.5" y="838.6" width="1.3" height="1.2" fill="#666"/><line x1="13" y1="846.7" x2="19.5" y2="846.7" stroke="#666" stroke-width="1"/><rect x="15.5" y="853.6" width="1.3" height="1.2" fill="#666"/><rect x="15.5" y="868.7" width="1.3" height="1.2" fill="#666"/><line x1="13" y1="876.8" x2="19.5" y2="876.8" stroke="#666" stroke-width="1"/><rect x="15.5" y="883.7" width="1.3" height="1.2" fill="#666"/><rect x="15.5" y="898.7" width="1.3" height="1.2" fill="#666"/><line x1="13" y1="906.8" x2="19.5" y2="906.8" stroke="#666" stroke-width="1"/><rect x="15.5" y="913.7" width="1.3" height="1.2" fill="#666"/><rect x="15.5" y="928.8" width="1.3" height="1.2" fill="#666"/><line x1="13" y1="936.9" x2="19.5" y2="936.9" stroke="#666" stroke-width="1"/></svg>
<div style="position:absolute;left:-4px;top:314.9px;width:40px;height:12px;line-height:12px;text-align:center;font-size:11.5px;color:#555;transform:rotate(-90deg)">1</div>
<div style="position:absolute;left:-4px;top:344.9px;width:40px;height:12px;line-height:12px;text-align:center;font-size:11.5px;color:#555;transform:rotate(-90deg)">2</div>
<div style="position:absolute;left:-4px;top:375.0px;width:40px;height:12px;line-height:12px;text-align:center;font-size:11.5px;color:#555;transform:rotate(-90deg)">3</div>
<div style="position:absolute;left:-4px;top:405.0px;width:40px;height:12px;line-height:12px;text-align:center;font-size:11.5px;color:#555;transform:rotate(-90deg)">4</div>
<div style="position:absolute;left:-4px;top:435.1px;width:40px;height:12px;line-height:12px;text-align:center;font-size:11.5px;color:#555;transform:rotate(-90deg)">5</div>
<div style="position:absolute;left:-4px;top:465.1px;width:40px;height:12px;line-height:12px;text-align:center;font-size:11.5px;color:#555;transform:rotate(-90deg)">6</div>
<div style="position:absolute;left:-4px;top:495.1px;width:40px;height:12px;line-height:12px;text-align:center;font-size:11.5px;color:#555;transform:rotate(-90deg)">7</div>
<div style="position:absolute;left:-4px;top:525.2px;width:40px;height:12px;line-height:12px;text-align:center;font-size:11.5px;color:#555;transform:rotate(-90deg)">8</div>
<div style="position:absolute;left:-4px;top:555.2px;width:40px;height:12px;line-height:12px;text-align:center;font-size:11.5px;color:#555;transform:rotate(-90deg)">9</div>
<div style="position:absolute;left:-4px;top:585.3px;width:40px;height:12px;line-height:12px;text-align:center;font-size:11.5px;color:#555;transform:rotate(-90deg)">10</div>
<div style="position:absolute;left:-4px;top:615.4px;width:40px;height:12px;line-height:12px;text-align:center;font-size:11.5px;color:#555;transform:rotate(-90deg)">11</div>
<div style="position:absolute;left:-4px;top:645.4px;width:40px;height:12px;line-height:12px;text-align:center;font-size:11.5px;color:#555;transform:rotate(-90deg)">12</div>
<div style="position:absolute;left:-4px;top:675.5px;width:40px;height:12px;line-height:12px;text-align:center;font-size:11.5px;color:#555;transform:rotate(-90deg)">13</div>
<div style="position:absolute;left:-4px;top:705.5px;width:40px;height:12px;line-height:12px;text-align:center;font-size:11.5px;color:#555;transform:rotate(-90deg)">14</div>
<div style="position:absolute;left:-4px;top:735.5px;width:40px;height:12px;line-height:12px;text-align:center;font-size:11.5px;color:#555;transform:rotate(-90deg)">15</div>
<div style="position:absolute;left:-4px;top:765.6px;width:40px;height:12px;line-height:12px;text-align:center;font-size:11.5px;color:#555;transform:rotate(-90deg)">16</div>
<div style="position:absolute;left:-4px;top:795.7px;width:40px;height:12px;line-height:12px;text-align:center;font-size:11.5px;color:#555;transform:rotate(-90deg)">17</div>
<div style="position:absolute;left:-4px;top:825.7px;width:40px;height:12px;line-height:12px;text-align:center;font-size:11.5px;color:#555;transform:rotate(-90deg)">18</div>
<div style="position:absolute;left:-4px;top:855.8px;width:40px;height:12px;line-height:12px;text-align:center;font-size:11.5px;color:#555;transform:rotate(-90deg)">19</div>
<div style="position:absolute;left:-4px;top:885.8px;width:40px;height:12px;line-height:12px;text-align:center;font-size:11.5px;color:#555;transform:rotate(-90deg)">20</div>
<div style="position:absolute;left:-4px;top:915.9px;width:40px;height:12px;line-height:12px;text-align:center;font-size:11.5px;color:#555;transform:rotate(-90deg)">21</div>
<div style="position:absolute;left:513px;top:259.5px;width:633px;height:682px;background:#fff;border-left:1px solid #c8c8c8;border-right:2px solid #d6d6d6;box-sizing:border-box"></div>
<div style="position:absolute;left:588px;top:291px;width:484px;height:1px;background:#a8a8a8"></div>
<div style="position:absolute;left:1072px;top:291px;width:1px;height:5.5px;background:#a8a8a8"></div>
<div style="position:absolute;left:1072px;top:296px;width:72px;height:1px;background:#a8a8a8"></div>
<div style="position:absolute;left:514px;top:276px;width:353px;height:2px;background:#111"></div>
<svg style="position:absolute;left:865px;top:269px;" width="16" height="16" viewBox="0 0 16 16" fill="none"><circle cx="8" cy="7.8" r="5.6" fill="#fff" stroke="#555" stroke-width="2.4"/></svg>
<div style="position:absolute;left:872.4px;top:283px;width:1.3px;height:658px;background:#7d7d7d"></div>
<svg style="position:absolute;left:865px;top:636px;" width="16" height="16" viewBox="0 0 16 16" fill="none"><circle cx="8" cy="8" r="5.6" fill="#fff" stroke="#555" stroke-width="2.4"/></svg>
<div style="position:absolute;left:515.2px;top:296px;width:1px;height:645px;background:#b4b4b4"></div>
<div style="position:absolute;left:517.2px;top:299px;width:1px;height:642px;background:#707070"></div>
<div style="position:absolute;left:517.2px;top:299px;width:627px;height:2px;background:#8a8a8a"></div>
<div style="position:absolute;left:518px;top:299.7px;width:28.7px;height:6.2px;background:#000"></div>
<div style="position:absolute;left:518px;top:299.7px;width:6.8px;height:28.6px;background:#000"></div>
<div style="position:absolute;left:869px;top:299.5px;width:29px;height:6.5px;background:#000"></div>
<div style="position:absolute;left:516.5px;top:651px;width:9px;height:30px;background:#fff"></div>
<div style="position:absolute;left:518px;top:652px;width:6.3px;height:27.6px;background:#000"></div>
<div style="position:absolute;left:588px;top:259.5px;width:179.5px;height:31.5px;background:#e3e3e3;border-bottom:1px solid #c4c4c4;box-sizing:border-box"></div>
<svg style="position:absolute;left:592px;top:267px;" width="6" height="17" viewBox="0 0 6 17" fill="none"><rect x="0.5" y="0.5" width="4.5" height="3.5" fill="#6a6a6a"/><rect x="0.5" y="6.5" width="4.5" height="3.5" fill="#6a6a6a"/><rect x="0.5" y="12.5" width="4.5" height="3.5" fill="#6a6a6a"/></svg>
<svg style="position:absolute;left:606px;top:264px;" width="18" height="23" viewBox="0 0 18 23" fill="none">
<path d="M1 1 H11 L16.5 6.5 V21.5 H1 Z" fill="#fff" stroke="#424242" stroke-width="1.3" stroke-linejoin="round"/>
<path d="M11 1 V6.5 H16.5" stroke="#424242" stroke-width="1.2" fill="none"/>
<path d="M3.5 8.5 H5 M6.5 8.5 H8 M3.5 12 H9.5 M11.5 12 H14 M3.5 15.5 H9.5 M11.5 15.5 H14" stroke="#424242" stroke-width="1.3"/>
</svg>
<svg style="position:absolute;left:632px;top:272px;" width="9" height="6" viewBox="0 0 9 6" fill="none"><path d="M1 1 L4.5 4.5 L8 1" stroke="#424242" stroke-width="1.4"/></svg>
<svg style="position:absolute;left:653px;top:262px;" width="23" height="23" viewBox="0 0 23 23" fill="none">
<path d="M1.5 1 H11 L16.5 6.5 V21.5 H1.5 Z" fill="#fff" stroke="#424242" stroke-width="1.3" stroke-linejoin="round"/>
<path d="M11 1 V6.5 H16.5" stroke="#424242" stroke-width="1.2" fill="none"/>
<rect x="19.3" y="1" width="1.8" height="15" fill="#e02020"/>
<rect x="19.3" y="18.5" width="1.8" height="2.5" fill="#e02020"/>
</svg>
<div style="position:absolute;left:678.90px;top:265.15px;font-size:14px;line-height:14px;color:#3a3a3a;font-weight:normal;white-space:nowrap;transform:scaleX(0.8941);transform-origin:0 0;">Update Table...</div>
<div style="position:absolute;left:514px;top:296px;width:74px;height:1px;background:#a8a8a8"></div>
<div style="position:absolute;left:587.5px;top:291px;width:1px;height:5.5px;background:#a8a8a8"></div>
<div style="position:absolute;left:590.50px;top:306.96px;font-size:16px;line-height:16px;color:#154a6c;font-weight:normal;white-space:nowrap;transform:scaleX(0.9775);transform-origin:0 0;">Contents</div>
<div style="position:absolute;left:590.5px;top:328.28px;font-size:11.6px;line-height:11.6px;color:#111;white-space:nowrap;transform:scaleX(0.97);transform-origin:0 0;-webkit-text-stroke:0.2px #111">Introduction</div>
<div style="position:absolute;left:1063.3px;top:328.28px;font-size:11.6px;line-height:11.6px;color:#111">1</div>
<svg style="position:absolute;left:0;top:0" width="1650" height="972"><path fill="#222" d="M1060 336.6h1.4v1.4h-1.4zM1056.5 336.6h1.4v1.4h-1.4zM1053 336.6h1.4v1.4h-1.4zM1049.5 336.6h1.4v1.4h-1.4zM1046 336.6h1.4v1.4h-1.4zM1043 336.6h1.4v1.4h-1.4zM1039.5 336.6h1.4v1.4h-1.4zM1036 336.6h1.4v1.4h-1.4zM1032.5 336.6h1.4v1.4h-1.4zM1029 336.6h1.4v1.4h-1.4zM1026 336.6h1.4v1.4h-1.4zM1022.5 336.6h1.4v1.4h-1.4zM1019 336.6h1.4v1.4h-1.4zM1015.5 336.6h1.4v1.4h-1.4zM1012 336.6h1.4v1.4h-1.4zM1009 336.6h1.4v1.4h-1.4zM1005.5 336.6h1.4v1.4h-1.4zM1002 336.6h1.4v1.4h-1.4zM998.5 336.6h1.4v1.4h-1.4zM995 336.6h1.4v1.4h-1.4zM992 336.6h1.4v1.4h-1.4zM988.5 336.6h1.4v1.4h-1.4zM985 336.6h1.4v1.4h-1.4zM981.5 336.6h1.4v1.4h-1.4zM978 336.6h1.4v1.4h-1.4zM975 336.6h1.4v1.4h-1.4zM971.5 336.6h1.4v1.4h-1.4zM968 336.6h1.4v1.4h-1.4zM964.5 336.6h1.4v1.4h-1.4zM961 336.6h1.4v1.4h-1.4zM958 336.6h1.4v1.4h-1.4zM954.5 336.6h1.4v1.4h-1.4zM951 336.6h1.4v1.4h-1.4zM947.5 336.6h1.4v1.4h-1.4zM944 336.6h1.4v1.4h-1.4zM941 336.6h1.4v1.4h-1.4zM937.5 336.6h1.4v1.4h-1.4zM934 336.6h1.4v1.4h-1.4zM930.5 336.6h1.4v1.4h-1.4zM927 336.6h1.4v1.4h-1.4zM924 336.6h1.4v1.4h-1.4zM920.5 336.6h1.4v1.4h-1.4zM917 336.6h1.4v1.4h-1.4zM913.5 336.6h1.4v1.4h-1.4zM910 336.6h1.4v1.4h-1.4zM907 336.6h1.4v1.4h-1.4zM903.5 336.6h1.4v1.4h-1.4zM900 336.6h1.4v1.4h-1.4zM896.5 336.6h1.4v1.4h-1.4zM893 336.6h1.4v1.4h-1.4zM890 336.6h1.4v1.4h-1.4zM886.5 336.6h1.4v1.4h-1.4zM883 336.6h1.4v1.4h-1.4zM879.5 336.6h1.4v1.4h-1.4zM876 336.6h1.4v1.4h-1.4zM873 336.6h1.4v1.4h-1.4zM869.5 336.6h1.4v1.4h-1.4zM866 336.6h1.4v1.4h-1.4zM862.5 336.6h1.4v1.4h-1.4zM859 336.6h1.4v1.4h-1.4zM856 336.6h1.4v1.4h-1.4zM852.5 336.6h1.4v1.4h-1.4zM849 336.6h1.4v1.4h-1.4zM845.5 336.6h1.4v1.4h-1.4zM842 336.6h1.4v1.4h-1.4zM839 336.6h1.4v1.4h-1.4zM835.5 336.6h1.4v1.4h-1.4zM832 336.6h1.4v1.4h-1.4zM828.5 336.6h1.4v1.4h-1.4zM825 336.6h1.4v1.4h-1.4zM822 336.6h1.4v1.4h-1.4zM818.5 336.6h1.4v1.4h-1.4zM815 336.6h1.4v1.4h-1.4zM811.5 336.6h1.4v1.4h-1.4zM808 336.6h1.4v1.4h-1.4zM805 336.6h1.4v1.4h-1.4zM801.5 336.6h1.4v1.4h-1.4zM798 336.6h1.4v1.4h-1.4zM794.5 336.6h1.4v1.4h-1.4zM791 336.6h1.4v1.4h-1.4zM788 336.6h1.4v1.4h-1.4zM784.5 336.6h1.4v1.4h-1.4zM781 336.6h1.4v1.4h-1.4zM777.5 336.6h1.4v1.4h-1.4zM774 336.6h1.4v1.4h-1.4zM771 336.6h1.4v1.4h-1.4zM767.5 336.6h1.4v1.4h-1.4zM764 336.6h1.4v1.4h-1.4zM760.5 336.6h1.4v1.4h-1.4zM757 336.6h1.4v1.4h-1.4zM754 336.6h1.4v1.4h-1.4zM750.5 336.6h1.4v1.4h-1.4zM747 336.6h1.4v1.4h-1.4zM743.5 336.6h1.4v1.4h-1.4zM740 336.6h1.4v1.4h-1.4zM737 336.6h1.4v1.4h-1.4zM733.5 336.6h1.4v1.4h-1.4zM730 336.6h1.4v1.4h-1.4zM726.5 336.6h1.4v1.4h-1.4zM723 336.6h1.4v1.4h-1.4zM720 336.6h1.4v1.4h-1.4zM716.5 336.6h1.4v1.4h-1.4zM713 336.6h1.4v1.4h-1.4zM709.5 336.6h1.4v1.4h-1.4zM706 336.6h1.4v1.4h-1.4zM703 336.6h1.4v1.4h-1.4zM699.5 336.6h1.4v1.4h-1.4zM696 336.6h1.4v1.4h-1.4zM692.5 336.6h1.4v1.4h-1.4zM689 336.6h1.4v1.4h-1.4zM686 336.6h1.4v1.4h-1.4zM682.5 336.6h1.4v1.4h-1.4zM679 336.6h1.4v1.4h-1.4zM675.5 336.6h1.4v1.4h-1.4zM672 336.6h1.4v1.4h-1.4zM669 336.6h1.4v1.4h-1.4zM665.5 336.6h1.4v1.4h-1.4zM662 336.6h1.4v1.4h-1.4zM658.5 336.6h1.4v1.4h-1.4zM655 336.6h1.4v1.4h-1.4zM652 336.6h1.4v1.4h-1.4z"/></svg>
<div style="position:absolute;left:590.5px;top:348.97px;font-size:11.6px;line-height:11.6px;color:#111;white-space:nowrap;transform:scaleX(0.97);transform-origin:0 0;-webkit-text-stroke:0.2px #111">Active Learning</div>
<div style="position:absolute;left:1063.3px;top:348.97px;font-size:11.6px;line-height:11.6px;color:#111">1</div>
<svg style="position:absolute;left:0;top:0" width="1650" height="972"><path fill="#222" d="M1060 357.6h1.4v1.4h-1.4zM1056.5 357.6h1.4v1.4h-1.4zM1053 357.6h1.4v1.4h-1.4zM1049.5 357.6h1.4v1.4h-1.4zM1046 357.6h1.4v1.4h-1.4zM1043 357.6h1.4v1.4h-1.4zM1039.5 357.6h1.4v1.4h-1.4zM1036 357.6h1.4v1.4h-1.4zM1032.5 357.6h1.4v1.4h-1.4zM1029 357.6h1.4v1.4h-1.4zM1026 357.6h1.4v1.4h-1.4zM1022.5 357.6h1.4v1.4h-1.4zM1019 357.6h1.4v1.4h-1.4zM1015.5 357.6h1.4v1.4h-1.4zM1012 357.6h1.4v1.4h-1.4zM1009 357.6h1.4v1.4h-1.4zM1005.5 357.6h1.4v1.4h-1.4zM1002 357.6h1.4v1.4h-1.4zM998.5 357.6h1.4v1.4h-1.4zM995 357.6h1.4v1.4h-1.4zM992 357.6h1.4v1.4h-1.4zM988.5 357.6h1.4v1.4h-1.4zM985 357.6h1.4v1.4h-1.4zM981.5 357.6h1.4v1.4h-1.4zM978 357.6h1.4v1.4h-1.4zM975 357.6h1.4v1.4h-1.4zM971.5 357.6h1.4v1.4h-1.4zM968 357.6h1.4v1.4h-1.4zM964.5 357.6h1.4v1.4h-1.4zM961 357.6h1.4v1.4h-1.4zM958 357.6h1.4v1.4h-1.4zM954.5 357.6h1.4v1.4h-1.4zM951 357.6h1.4v1.4h-1.4zM947.5 357.6h1.4v1.4h-1.4zM944 357.6h1.4v1.4h-1.4zM941 357.6h1.4v1.4h-1.4zM937.5 357.6h1.4v1.4h-1.4zM934 357.6h1.4v1.4h-1.4zM930.5 357.6h1.4v1.4h-1.4zM927 357.6h1.4v1.4h-1.4zM924 357.6h1.4v1.4h-1.4zM920.5 357.6h1.4v1.4h-1.4zM917 357.6h1.4v1.4h-1.4zM913.5 357.6h1.4v1.4h-1.4zM910 357.6h1.4v1.4h-1.4zM907 357.6h1.4v1.4h-1.4zM903.5 357.6h1.4v1.4h-1.4zM900 357.6h1.4v1.4h-1.4zM896.5 357.6h1.4v1.4h-1.4zM893 357.6h1.4v1.4h-1.4zM890 357.6h1.4v1.4h-1.4zM886.5 357.6h1.4v1.4h-1.4zM883 357.6h1.4v1.4h-1.4zM879.5 357.6h1.4v1.4h-1.4zM876 357.6h1.4v1.4h-1.4zM873 357.6h1.4v1.4h-1.4zM869.5 357.6h1.4v1.4h-1.4zM866 357.6h1.4v1.4h-1.4zM862.5 357.6h1.4v1.4h-1.4zM859 357.6h1.4v1.4h-1.4zM856 357.6h1.4v1.4h-1.4zM852.5 357.6h1.4v1.4h-1.4zM849 357.6h1.4v1.4h-1.4zM845.5 357.6h1.4v1.4h-1.4zM842 357.6h1.4v1.4h-1.4zM839 357.6h1.4v1.4h-1.4zM835.5 357.6h1.4v1.4h-1.4zM832 357.6h1.4v1.4h-1.4zM828.5 357.6h1.4v1.4h-1.4zM825 357.6h1.4v1.4h-1.4zM822 357.6h1.4v1.4h-1.4zM818.5 357.6h1.4v1.4h-1.4zM815 357.6h1.4v1.4h-1.4zM811.5 357.6h1.4v1.4h-1.4zM808 357.6h1.4v1.4h-1.4zM805 357.6h1.4v1.4h-1.4zM801.5 357.6h1.4v1.4h-1.4zM798 357.6h1.4v1.4h-1.4zM794.5 357.6h1.4v1.4h-1.4zM791 357.6h1.4v1.4h-1.4zM788 357.6h1.4v1.4h-1.4zM784.5 357.6h1.4v1.4h-1.4zM781 357.6h1.4v1.4h-1.4zM777.5 357.6h1.4v1.4h-1.4zM774 357.6h1.4v1.4h-1.4zM771 357.6h1.4v1.4h-1.4zM767.5 357.6h1.4v1.4h-1.4zM764 357.6h1.4v1.4h-1.4zM760.5 357.6h1.4v1.4h-1.4zM757 357.6h1.4v1.4h-1.4zM754 357.6h1.4v1.4h-1.4zM750.5 357.6h1.4v1.4h-1.4zM747 357.6h1.4v1.4h-1.4zM743.5 357.6h1.4v1.4h-1.4zM740 357.6h1.4v1.4h-1.4zM737 357.6h1.4v1.4h-1.4zM733.5 357.6h1.4v1.4h-1.4zM730 357.6h1.4v1.4h-1.4zM726.5 357.6h1.4v1.4h-1.4zM723 357.6h1.4v1.4h-1.4zM720 357.6h1.4v1.4h-1.4zM716.5 357.6h1.4v1.4h-1.4zM713 357.6h1.4v1.4h-1.4zM709.5 357.6h1.4v1.4h-1.4zM706 357.6h1.4v1.4h-1.4zM703 357.6h1.4v1.4h-1.4zM699.5 357.6h1.4v1.4h-1.4zM696 357.6h1.4v1.4h-1.4zM692.5 357.6h1.4v1.4h-1.4zM689 357.6h1.4v1.4h-1.4zM686 357.6h1.4v1.4h-1.4zM682.5 357.6h1.4v1.4h-1.4zM679 357.6h1.4v1.4h-1.4zM675.5 357.6h1.4v1.4h-1.4zM672 357.6h1.4v1.4h-1.4z"/></svg>
<div style="position:absolute;left:601.7px;top:369.66px;font-size:11.6px;line-height:11.6px;color:#111;white-space:nowrap;transform:scaleX(0.97);transform-origin:0 0;-webkit-text-stroke:0.2px #111">Problem-Based Learning</div>
<div style="position:absolute;left:1063.3px;top:369.66px;font-size:11.6px;line-height:11.6px;color:#111">1</div>
<svg style="position:absolute;left:0;top:0" width="1650" height="972"><path fill="#222" d="M1060 377.6h1.4v1.4h-1.4zM1056.5 377.6h1.4v1.4h-1.4zM1053 377.6h1.4v1.4h-1.4zM1049.5 377.6h1.4v1.4h-1.4zM1046 377.6h1.4v1.4h-1.4zM1043 377.6h1.4v1.4h-1.4zM1039.5 377.6h1.4v1.4h-1.4zM1036 377.6h1.4v1.4h-1.4zM1032.5 377.6h1.4v1.4h-1.4zM1029 377.6h1.4v1.4h-1.4zM1026 377.6h1.4v1.4h-1.4zM1022.5 377.6h1.4v1.4h-1.4zM1019 377.6h1.4v1.4h-1.4zM1015.5 377.6h1.4v1.4h-1.4zM1012 377.6h1.4v1.4h-1.4zM1009 377.6h1.4v1.4h-1.4zM1005.5 377.6h1.4v1.4h-1.4zM1002 377.6h1.4v1.4h-1.4zM998.5 377.6h1.4v1.4h-1.4zM995 377.6h1.4v1.4h-1.4zM992 377.6h1.4v1.4h-1.4zM988.5 377.6h1.4v1.4h-1.4zM985 377.6h1.4v1.4h-1.4zM981.5 377.6h1.4v1.4h-1.4zM978 377.6h1.4v1.4h-1.4zM975 377.6h1.4v1.4h-1.4zM971.5 377.6h1.4v1.4h-1.4zM968 377.6h1.4v1.4h-1.4zM964.5 377.6h1.4v1.4h-1.4zM961 377.6h1.4v1.4h-1.4zM958 377.6h1.4v1.4h-1.4zM954.5 377.6h1.4v1.4h-1.4zM951 377.6h1.4v1.4h-1.4zM947.5 377.6h1.4v1.4h-1.4zM944 377.6h1.4v1.4h-1.4zM941 377.6h1.4v1.4h-1.4zM937.5 377.6h1.4v1.4h-1.4zM934 377.6h1.4v1.4h-1.4zM930.5 377.6h1.4v1.4h-1.4zM927 377.6h1.4v1.4h-1.4zM924 377.6h1.4v1.4h-1.4zM920.5 377.6h1.4v1.4h-1.4zM917 377.6h1.4v1.4h-1.4zM913.5 377.6h1.4v1.4h-1.4zM910 377.6h1.4v1.4h-1.4zM907 377.6h1.4v1.4h-1.4zM903.5 377.6h1.4v1.4h-1.4zM900 377.6h1.4v1.4h-1.4zM896.5 377.6h1.4v1.4h-1.4zM893 377.6h1.4v1.4h-1.4zM890 377.6h1.4v1.4h-1.4zM886.5 377.6h1.4v1.4h-1.4zM883 377.6h1.4v1.4h-1.4zM879.5 377.6h1.4v1.4h-1.4zM876 377.6h1.4v1.4h-1.4zM873 377.6h1.4v1.4h-1.4zM869.5 377.6h1.4v1.4h-1.4zM866 377.6h1.4v1.4h-1.4zM862.5 377.6h1.4v1.4h-1.4zM859 377.6h1.4v1.4h-1.4zM856 377.6h1.4v1.4h-1.4zM852.5 377.6h1.4v1.4h-1.4zM849 377.6h1.4v1.4h-1.4zM845.5 377.6h1.4v1.4h-1.4zM842 377.6h1.4v1.4h-1.4zM839 377.6h1.4v1.4h-1.4zM835.5 377.6h1.4v1.4h-1.4zM832 377.6h1.4v1.4h-1.4zM828.5 377.6h1.4v1.4h-1.4zM825 377.6h1.4v1.4h-1.4zM822 377.6h1.4v1.4h-1.4zM818.5 377.6h1.4v1.4h-1.4zM815 377.6h1.4v1.4h-1.4zM811.5 377.6h1.4v1.4h-1.4zM808 377.6h1.4v1.4h-1.4zM805 377.6h1.4v1.4h-1.4zM801.5 377.6h1.4v1.4h-1.4zM798 377.6h1.4v1.4h-1.4zM794.5 377.6h1.4v1.4h-1.4zM791 377.6h1.4v1.4h-1.4zM788 377.6h1.4v1.4h-1.4zM784.5 377.6h1.4v1.4h-1.4zM781 377.6h1.4v1.4h-1.4zM777.5 377.6h1.4v1.4h-1.4zM774 377.6h1.4v1.4h-1.4zM771 377.6h1.4v1.4h-1.4zM767.5 377.6h1.4v1.4h-1.4zM764 377.6h1.4v1.4h-1.4zM760.5 377.6h1.4v1.4h-1.4zM757 377.6h1.4v1.4h-1.4zM754 377.6h1.4v1.4h-1.4zM750.5 377.6h1.4v1.4h-1.4zM747 377.6h1.4v1.4h-1.4zM743.5 377.6h1.4v1.4h-1.4zM740 377.6h1.4v1.4h-1.4zM737 377.6h1.4v1.4h-1.4zM733.5 377.6h1.4v1.4h-1.4zM730 377.6h1.4v1.4h-1.4z"/></svg>
<div style="position:absolute;left:601.7px;top:390.35px;font-size:11.6px;line-height:11.6px;color:#111;white-space:nowrap;transform:scaleX(0.97);transform-origin:0 0;-webkit-text-stroke:0.2px #111">Socratic Method</div>
<div style="position:absolute;left:1063.3px;top:390.35px;font-size:11.6px;line-height:11.6px;color:#111">1</div>
<svg style="position:absolute;left:0;top:0" width="1650" height="972"><path fill="#222" d="M1060 398.6h1.4v1.4h-1.4zM1056.5 398.6h1.4v1.4h-1.4zM1053 398.6h1.4v1.4h-1.4zM1049.5 398.6h1.4v1.4h-1.4zM1046 398.6h1.4v1.4h-1.4zM1043 398.6h1.4v1.4h-1.4zM1039.5 398.6h1.4v1.4h-1.4zM1036 398.6h1.4v1.4h-1.4zM1032.5 398.6h1.4v1.4h-1.4zM1029 398.6h1.4v1.4h-1.4zM1026 398.6h1.4v1.4h-1.4zM1022.5 398.6h1.4v1.4h-1.4zM1019 398.6h1.4v1.4h-1.4zM1015.5 398.6h1.4v1.4h-1.4zM1012 398.6h1.4v1.4h-1.4zM1009 398.6h1.4v1.4h-1.4zM1005.5 398.6h1.4v1.4h-1.4zM1002 398.6h1.4v1.4h-1.4zM998.5 398.6h1.4v1.4h-1.4zM995 398.6h1.4v1.4h-1.4zM992 398.6h1.4v1.4h-1.4zM988.5 398.6h1.4v1.4h-1.4zM985 398.6h1.4v1.4h-1.4zM981.5 398.6h1.4v1.4h-1.4zM978 398.6h1.4v1.4h-1.4zM975 398.6h1.4v1.4h-1.4zM971.5 398.6h1.4v1.4h-1.4zM968 398.6h1.4v1.4h-1.4zM964.5 398.6h1.4v1.4h-1.4zM961 398.6h1.4v1.4h-1.4zM958 398.6h1.4v1.4h-1.4zM954.5 398.6h1.4v1.4h-1.4zM951 398.6h1.4v1.4h-1.4zM947.5 398.6h1.4v1.4h-1.4zM944 398.6h1.4v1.4h-1.4zM941 398.6h1.4v1.4h-1.4zM937.5 398.6h1.4v1.4h-1.4zM934 398.6h1.4v1.4h-1.4zM930.5 398.6h1.4v1.4h-1.4zM927 398.6h1.4v1.4h-1.4zM924 398.6h1.4v1.4h-1.4zM920.5 398.6h1.4v1.4h-1.4zM917 398.6h1.4v1.4h-1.4zM913.5 398.6h1.4v1.4h-1.4zM910 398.6h1.4v1.4h-1.4zM907 398.6h1.4v1.4h-1.4zM903.5 398.6h1.4v1.4h-1.4zM900 398.6h1.4v1.4h-1.4zM896.5 398.6h1.4v1.4h-1.4zM893 398.6h1.4v1.4h-1.4zM890 398.6h1.4v1.4h-1.4zM886.5 398.6h1.4v1.4h-1.4zM883 398.6h1.4v1.4h-1.4zM879.5 398.6h1.4v1.4h-1.4zM876 398.6h1.4v1.4h-1.4zM873 398.6h1.4v1.4h-1.4zM869.5 398.6h1.4v1.4h-1.4zM866 398.6h1.4v1.4h-1.4zM862.5 398.6h1.4v1.4h-1.4zM859 398.6h1.4v1.4h-1.4zM856 398.6h1.4v1.4h-1.4zM852.5 398.6h1.4v1.4h-1.4zM849 398.6h1.4v1.4h-1.4zM845.5 398.6h1.4v1.4h-1.4zM842 398.6h1.4v1.4h-1.4zM839 398.6h1.4v1.4h-1.4zM835.5 398.6h1.4v1.4h-1.4zM832 398.6h1.4v1.4h-1.4zM828.5 398.6h1.4v1.4h-1.4zM825 398.6h1.4v1.4h-1.4zM822 398.6h1.4v1.4h-1.4zM818.5 398.6h1.4v1.4h-1.4zM815 398.6h1.4v1.4h-1.4zM811.5 398.6h1.4v1.4h-1.4zM808 398.6h1.4v1.4h-1.4zM805 398.6h1.4v1.4h-1.4zM801.5 398.6h1.4v1.4h-1.4zM798 398.6h1.4v1.4h-1.4zM794.5 398.6h1.4v1.4h-1.4zM791 398.6h1.4v1.4h-1.4zM788 398.6h1.4v1.4h-1.4zM784.5 398.6h1.4v1.4h-1.4zM781 398.6h1.4v1.4h-1.4zM777.5 398.6h1.4v1.4h-1.4zM774 398.6h1.4v1.4h-1.4zM771 398.6h1.4v1.4h-1.4zM767.5 398.6h1.4v1.4h-1.4zM764 398.6h1.4v1.4h-1.4zM760.5 398.6h1.4v1.4h-1.4zM757 398.6h1.4v1.4h-1.4zM754 398.6h1.4v1.4h-1.4zM750.5 398.6h1.4v1.4h-1.4zM747 398.6h1.4v1.4h-1.4zM743.5 398.6h1.4v1.4h-1.4zM740 398.6h1.4v1.4h-1.4zM737 398.6h1.4v1.4h-1.4zM733.5 398.6h1.4v1.4h-1.4zM730 398.6h1.4v1.4h-1.4zM726.5 398.6h1.4v1.4h-1.4zM723 398.6h1.4v1.4h-1.4zM720 398.6h1.4v1.4h-1.4zM716.5 398.6h1.4v1.4h-1.4zM713 398.6h1.4v1.4h-1.4zM709.5 398.6h1.4v1.4h-1.4zM706 398.6h1.4v1.4h-1.4zM703 398.6h1.4v1.4h-1.4zM699.5 398.6h1.4v1.4h-1.4zM696 398.6h1.4v1.4h-1.4zM692.5 398.6h1.4v1.4h-1.4zM689 398.6h1.4v1.4h-1.4zM686 398.6h1.4v1.4h-1.4z"/></svg>
<div style="position:absolute;left:590.5px;top:411.04px;font-size:11.6px;line-height:11.6px;color:#111;white-space:nowrap;transform:scaleX(0.97);transform-origin:0 0;-webkit-text-stroke:0.2px #111">Spaced Repetition</div>
<div style="position:absolute;left:1063.3px;top:411.04px;font-size:11.6px;line-height:11.6px;color:#111">1</div>
<svg style="position:absolute;left:0;top:0" width="1650" height="972"><path fill="#222" d="M1060 419.6h1.4v1.4h-1.4zM1056.5 419.6h1.4v1.4h-1.4zM1053 419.6h1.4v1.4h-1.4zM1049.5 419.6h1.4v1.4h-1.4zM1046 419.6h1.4v1.4h-1.4zM1043 419.6h1.4v1.4h-1.4zM1039.5 419.6h1.4v1.4h-1.4zM1036 419.6h1.4v1.4h-1.4zM1032.5 419.6h1.4v1.4h-1.4zM1029 419.6h1.4v1.4h-1.4zM1026 419.6h1.4v1.4h-1.4zM1022.5 419.6h1.4v1.4h-1.4zM1019 419.6h1.4v1.4h-1.4zM1015.5 419.6h1.4v1.4h-1.4zM1012 419.6h1.4v1.4h-1.4zM1009 419.6h1.4v1.4h-1.4zM1005.5 419.6h1.4v1.4h-1.4zM1002 419.6h1.4v1.4h-1.4zM998.5 419.6h1.4v1.4h-1.4zM995 419.6h1.4v1.4h-1.4zM992 419.6h1.4v1.4h-1.4zM988.5 419.6h1.4v1.4h-1.4zM985 419.6h1.4v1.4h-1.4zM981.5 419.6h1.4v1.4h-1.4zM978 419.6h1.4v1.4h-1.4zM975 419.6h1.4v1.4h-1.4zM971.5 419.6h1.4v1.4h-1.4zM968 419.6h1.4v1.4h-1.4zM964.5 419.6h1.4v1.4h-1.4zM961 419.6h1.4v1.4h-1.4zM958 419.6h1.4v1.4h-1.4zM954.5 419.6h1.4v1.4h-1.4zM951 419.6h1.4v1.4h-1.4zM947.5 419.6h1.4v1.4h-1.4zM944 419.6h1.4v1.4h-1.4zM941 419.6h1.4v1.4h-1.4zM937.5 419.6h1.4v1.4h-1.4zM934 419.6h1.4v1.4h-1.4zM930.5 419.6h1.4v1.4h-1.4zM927 419.6h1.4v1.4h-1.4zM924 419.6h1.4v1.4h-1.4zM920.5 419.6h1.4v1.4h-1.4zM917 419.6h1.4v1.4h-1.4zM913.5 419.6h1.4v1.4h-1.4zM910 419.6h1.4v1.4h-1.4zM907 419.6h1.4v1.4h-1.4zM903.5 419.6h1.4v1.4h-1.4zM900 419.6h1.4v1.4h-1.4zM896.5 419.6h1.4v1.4h-1.4zM893 419.6h1.4v1.4h-1.4zM890 419.6h1.4v1.4h-1.4zM886.5 419.6h1.4v1.4h-1.4zM883 419.6h1.4v1.4h-1.4zM879.5 419.6h1.4v1.4h-1.4zM876 419.6h1.4v1.4h-1.4zM873 419.6h1.4v1.4h-1.4zM869.5 419.6h1.4v1.4h-1.4zM866 419.6h1.4v1.4h-1.4zM862.5 419.6h1.4v1.4h-1.4zM859 419.6h1.4v1.4h-1.4zM856 419.6h1.4v1.4h-1.4zM852.5 419.6h1.4v1.4h-1.4zM849 419.6h1.4v1.4h-1.4zM845.5 419.6h1.4v1.4h-1.4zM842 419.6h1.4v1.4h-1.4zM839 419.6h1.4v1.4h-1.4zM835.5 419.6h1.4v1.4h-1.4zM832 419.6h1.4v1.4h-1.4zM828.5 419.6h1.4v1.4h-1.4zM825 419.6h1.4v1.4h-1.4zM822 419.6h1.4v1.4h-1.4zM818.5 419.6h1.4v1.4h-1.4zM815 419.6h1.4v1.4h-1.4zM811.5 419.6h1.4v1.4h-1.4zM808 419.6h1.4v1.4h-1.4zM805 419.6h1.4v1.4h-1.4zM801.5 419.6h1.4v1.4h-1.4zM798 419.6h1.4v1.4h-1.4zM794.5 419.6h1.4v1.4h-1.4zM791 419.6h1.4v1.4h-1.4zM788 419.6h1.4v1.4h-1.4zM784.5 419.6h1.4v1.4h-1.4zM781 419.6h1.4v1.4h-1.4zM777.5 419.6h1.4v1.4h-1.4zM774 419.6h1.4v1.4h-1.4zM771 419.6h1.4v1.4h-1.4zM767.5 419.6h1.4v1.4h-1.4zM764 419.6h1.4v1.4h-1.4zM760.5 419.6h1.4v1.4h-1.4zM757 419.6h1.4v1.4h-1.4zM754 419.6h1.4v1.4h-1.4zM750.5 419.6h1.4v1.4h-1.4zM747 419.6h1.4v1.4h-1.4zM743.5 419.6h1.4v1.4h-1.4zM740 419.6h1.4v1.4h-1.4zM737 419.6h1.4v1.4h-1.4zM733.5 419.6h1.4v1.4h-1.4zM730 419.6h1.4v1.4h-1.4zM726.5 419.6h1.4v1.4h-1.4zM723 419.6h1.4v1.4h-1.4zM720 419.6h1.4v1.4h-1.4zM716.5 419.6h1.4v1.4h-1.4zM713 419.6h1.4v1.4h-1.4zM709.5 419.6h1.4v1.4h-1.4zM706 419.6h1.4v1.4h-1.4zM703 419.6h1.4v1.4h-1.4zM699.5 419.6h1.4v1.4h-1.4zM696 419.6h1.4v1.4h-1.4zM692.5 419.6h1.4v1.4h-1.4zM689 419.6h1.4v1.4h-1.4zM686 419.6h1.4v1.4h-1.4z"/></svg>
<div style="position:absolute;left:601.7px;top:431.73px;font-size:11.6px;line-height:11.6px;color:#111;white-space:nowrap;transform:scaleX(0.97);transform-origin:0 0;-webkit-text-stroke:0.2px #111">Flashcards</div>
<div style="position:absolute;left:1063.3px;top:431.73px;font-size:11.6px;line-height:11.6px;color:#111">1</div>
<svg style="position:absolute;left:0;top:0" width="1650" height="972"><path fill="#222" d="M1060 440.6h1.4v1.4h-1.4zM1056.5 440.6h1.4v1.4h-1.4zM1053 440.6h1.4v1.4h-1.4zM1049.5 440.6h1.4v1.4h-1.4zM1046 440.6h1.4v1.4h-1.4zM1043 440.6h1.4v1.4h-1.4zM1039.5 440.6h1.4v1.4h-1.4zM1036 440.6h1.4v1.4h-1.4zM1032.5 440.6h1.4v1.4h-1.4zM1029 440.6h1.4v1.4h-1.4zM1026 440.6h1.4v1.4h-1.4zM1022.5 440.6h1.4v1.4h-1.4zM1019 440.6h1.4v1.4h-1.4zM1015.5 440.6h1.4v1.4h-1.4zM1012 440.6h1.4v1.4h-1.4zM1009 440.6h1.4v1.4h-1.4zM1005.5 440.6h1.4v1.4h-1.4zM1002 440.6h1.4v1.4h-1.4zM998.5 440.6h1.4v1.4h-1.4zM995 440.6h1.4v1.4h-1.4zM992 440.6h1.4v1.4h-1.4zM988.5 440.6h1.4v1.4h-1.4zM985 440.6h1.4v1.4h-1.4zM981.5 440.6h1.4v1.4h-1.4zM978 440.6h1.4v1.4h-1.4zM975 440.6h1.4v1.4h-1.4zM971.5 440.6h1.4v1.4h-1.4zM968 440.6h1.4v1.4h-1.4zM964.5 440.6h1.4v1.4h-1.4zM961 440.6h1.4v1.4h-1.4zM958 440.6h1.4v1.4h-1.4zM954.5 440.6h1.4v1.4h-1.4zM951 440.6h1.4v1.4h-1.4zM947.5 440.6h1.4v1.4h-1.4zM944 440.6h1.4v1.4h-1.4zM941 440.6h1.4v1.4h-1.4zM937.5 440.6h1.4v1.4h-1.4zM934 440.6h1.4v1.4h-1.4zM930.5 440.6h1.4v1.4h-1.4zM927 440.6h1.4v1.4h-1.4zM924 440.6h1.4v1.4h-1.4zM920.5 440.6h1.4v1.4h-1.4zM917 440.6h1.4v1.4h-1.4zM913.5 440.6h1.4v1.4h-1.4zM910 440.6h1.4v1.4h-1.4zM907 440.6h1.4v1.4h-1.4zM903.5 440.6h1.4v1.4h-1.4zM900 440.6h1.4v1.4h-1.4zM896.5 440.6h1.4v1.4h-1.4zM893 440.6h1.4v1.4h-1.4zM890 440.6h1.4v1.4h-1.4zM886.5 440.6h1.4v1.4h-1.4zM883 440.6h1.4v1.4h-1.4zM879.5 440.6h1.4v1.4h-1.4zM876 440.6h1.4v1.4h-1.4zM873 440.6h1.4v1.4h-1.4zM869.5 440.6h1.4v1.4h-1.4zM866 440.6h1.4v1.4h-1.4zM862.5 440.6h1.4v1.4h-1.4zM859 440.6h1.4v1.4h-1.4zM856 440.6h1.4v1.4h-1.4zM852.5 440.6h1.4v1.4h-1.4zM849 440.6h1.4v1.4h-1.4zM845.5 440.6h1.4v1.4h-1.4zM842 440.6h1.4v1.4h-1.4zM839 440.6h1.4v1.4h-1.4zM835.5 440.6h1.4v1.4h-1.4zM832 440.6h1.4v1.4h-1.4zM828.5 440.6h1.4v1.4h-1.4zM825 440.6h1.4v1.4h-1.4zM822 440.6h1.4v1.4h-1.4zM818.5 440.6h1.4v1.4h-1.4zM815 440.6h1.4v1.4h-1.4zM811.5 440.6h1.4v1.4h-1.4zM808 440.6h1.4v1.4h-1.4zM805 440.6h1.4v1.4h-1.4zM801.5 440.6h1.4v1.4h-1.4zM798 440.6h1.4v1.4h-1.4zM794.5 440.6h1.4v1.4h-1.4zM791 440.6h1.4v1.4h-1.4zM788 440.6h1.4v1.4h-1.4zM784.5 440.6h1.4v1.4h-1.4zM781 440.6h1.4v1.4h-1.4zM777.5 440.6h1.4v1.4h-1.4zM774 440.6h1.4v1.4h-1.4zM771 440.6h1.4v1.4h-1.4zM767.5 440.6h1.4v1.4h-1.4zM764 440.6h1.4v1.4h-1.4zM760.5 440.6h1.4v1.4h-1.4zM757 440.6h1.4v1.4h-1.4zM754 440.6h1.4v1.4h-1.4zM750.5 440.6h1.4v1.4h-1.4zM747 440.6h1.4v1.4h-1.4zM743.5 440.6h1.4v1.4h-1.4zM740 440.6h1.4v1.4h-1.4zM737 440.6h1.4v1.4h-1.4zM733.5 440.6h1.4v1.4h-1.4zM730 440.6h1.4v1.4h-1.4zM726.5 440.6h1.4v1.4h-1.4zM723 440.6h1.4v1.4h-1.4zM720 440.6h1.4v1.4h-1.4zM716.5 440.6h1.4v1.4h-1.4zM713 440.6h1.4v1.4h-1.4zM709.5 440.6h1.4v1.4h-1.4zM706 440.6h1.4v1.4h-1.4zM703 440.6h1.4v1.4h-1.4zM699.5 440.6h1.4v1.4h-1.4zM696 440.6h1.4v1.4h-1.4zM692.5 440.6h1.4v1.4h-1.4zM689 440.6h1.4v1.4h-1.4zM686 440.6h1.4v1.4h-1.4zM682.5 440.6h1.4v1.4h-1.4zM679 440.6h1.4v1.4h-1.4zM675.5 440.6h1.4v1.4h-1.4zM672 440.6h1.4v1.4h-1.4zM669 440.6h1.4v1.4h-1.4zM665.5 440.6h1.4v1.4h-1.4zM662 440.6h1.4v1.4h-1.4z"/></svg>
<div style="position:absolute;left:601.7px;top:452.42px;font-size:11.6px;line-height:11.6px;color:#111;white-space:nowrap;transform:scaleX(0.97);transform-origin:0 0;-webkit-text-stroke:0.2px #111">Scheduled Regular Study Sessions</div>
<div style="position:absolute;left:1063.3px;top:452.42px;font-size:11.6px;line-height:11.6px;color:#111">2</div>
<svg style="position:absolute;left:0;top:0" width="1650" height="972"><path fill="#222" d="M1060 460.6h1.4v1.4h-1.4zM1056.5 460.6h1.4v1.4h-1.4zM1053 460.6h1.4v1.4h-1.4zM1049.5 460.6h1.4v1.4h-1.4zM1046 460.6h1.4v1.4h-1.4zM1043 460.6h1.4v1.4h-1.4zM1039.5 460.6h1.4v1.4h-1.4zM1036 460.6h1.4v1.4h-1.4zM1032.5 460.6h1.4v1.4h-1.4zM1029 460.6h1.4v1.4h-1.4zM1026 460.6h1.4v1.4h-1.4zM1022.5 460.6h1.4v1.4h-1.4zM1019 460.6h1.4v1.4h-1.4zM1015.5 460.6h1.4v1.4h-1.4zM1012 460.6h1.4v1.4h-1.4zM1009 460.6h1.4v1.4h-1.4zM1005.5 460.6h1.4v1.4h-1.4zM1002 460.6h1.4v1.4h-1.4zM998.5 460.6h1.4v1.4h-1.4zM995 460.6h1.4v1.4h-1.4zM992 460.6h1.4v1.4h-1.4zM988.5 460.6h1.4v1.4h-1.4zM985 460.6h1.4v1.4h-1.4zM981.5 460.6h1.4v1.4h-1.4zM978 460.6h1.4v1.4h-1.4zM975 460.6h1.4v1.4h-1.4zM971.5 460.6h1.4v1.4h-1.4zM968 460.6h1.4v1.4h-1.4zM964.5 460.6h1.4v1.4h-1.4zM961 460.6h1.4v1.4h-1.4zM958 460.6h1.4v1.4h-1.4zM954.5 460.6h1.4v1.4h-1.4zM951 460.6h1.4v1.4h-1.4zM947.5 460.6h1.4v1.4h-1.4zM944 460.6h1.4v1.4h-1.4zM941 460.6h1.4v1.4h-1.4zM937.5 460.6h1.4v1.4h-1.4zM934 460.6h1.4v1.4h-1.4zM930.5 460.6h1.4v1.4h-1.4zM927 460.6h1.4v1.4h-1.4zM924 460.6h1.4v1.4h-1.4zM920.5 460.6h1.4v1.4h-1.4zM917 460.6h1.4v1.4h-1.4zM913.5 460.6h1.4v1.4h-1.4zM910 460.6h1.4v1.4h-1.4zM907 460.6h1.4v1.4h-1.4zM903.5 460.6h1.4v1.4h-1.4zM900 460.6h1.4v1.4h-1.4zM896.5 460.6h1.4v1.4h-1.4zM893 460.6h1.4v1.4h-1.4zM890 460.6h1.4v1.4h-1.4zM886.5 460.6h1.4v1.4h-1.4zM883 460.6h1.4v1.4h-1.4zM879.5 460.6h1.4v1.4h-1.4zM876 460.6h1.4v1.4h-1.4zM873 460.6h1.4v1.4h-1.4zM869.5 460.6h1.4v1.4h-1.4zM866 460.6h1.4v1.4h-1.4zM862.5 460.6h1.4v1.4h-1.4zM859 460.6h1.4v1.4h-1.4zM856 460.6h1.4v1.4h-1.4zM852.5 460.6h1.4v1.4h-1.4zM849 460.6h1.4v1.4h-1.4zM845.5 460.6h1.4v1.4h-1.4zM842 460.6h1.4v1.4h-1.4zM839 460.6h1.4v1.4h-1.4zM835.5 460.6h1.4v1.4h-1.4zM832 460.6h1.4v1.4h-1.4zM828.5 460.6h1.4v1.4h-1.4zM825 460.6h1.4v1.4h-1.4zM822 460.6h1.4v1.4h-1.4zM818.5 460.6h1.4v1.4h-1.4zM815 460.6h1.4v1.4h-1.4zM811.5 460.6h1.4v1.4h-1.4zM808 460.6h1.4v1.4h-1.4zM805 460.6h1.4v1.4h-1.4zM801.5 460.6h1.4v1.4h-1.4zM798 460.6h1.4v1.4h-1.4zM794.5 460.6h1.4v1.4h-1.4zM791 460.6h1.4v1.4h-1.4zM788 460.6h1.4v1.4h-1.4zM784.5 460.6h1.4v1.4h-1.4zM781 460.6h1.4v1.4h-1.4z"/></svg>
<div style="position:absolute;left:590.5px;top:473.11px;font-size:11.6px;line-height:11.6px;color:#111;white-space:nowrap;transform:scaleX(0.97);transform-origin:0 0;-webkit-text-stroke:0.2px #111">Chunking</div>
<div style="position:absolute;left:1063.3px;top:473.11px;font-size:11.6px;line-height:11.6px;color:#111">2</div>
<svg style="position:absolute;left:0;top:0" width="1650" height="972"><path fill="#222" d="M1060 481.6h1.4v1.4h-1.4zM1056.5 481.6h1.4v1.4h-1.4zM1053 481.6h1.4v1.4h-1.4zM1049.5 481.6h1.4v1.4h-1.4zM1046 481.6h1.4v1.4h-1.4zM1043 481.6h1.4v1.4h-1.4zM1039.5 481.6h1.4v1.4h-1.4zM1036 481.6h1.4v1.4h-1.4zM1032.5 481.6h1.4v1.4h-1.4zM1029 481.6h1.4v1.4h-1.4zM1026 481.6h1.4v1.4h-1.4zM1022.5 481.6h1.4v1.4h-1.4zM1019 481.6h1.4v1.4h-1.4zM1015.5 481.6h1.4v1.4h-1.4zM1012 481.6h1.4v1.4h-1.4zM1009 481.6h1.4v1.4h-1.4zM1005.5 481.6h1.4v1.4h-1.4zM1002 481.6h1.4v1.4h-1.4zM998.5 481.6h1.4v1.4h-1.4zM995 481.6h1.4v1.4h-1.4zM992 481.6h1.4v1.4h-1.4zM988.5 481.6h1.4v1.4h-1.4zM985 481.6h1.4v1.4h-1.4zM981.5 481.6h1.4v1.4h-1.4zM978 481.6h1.4v1.4h-1.4zM975 481.6h1.4v1.4h-1.4zM971.5 481.6h1.4v1.4h-1.4zM968 481.6h1.4v1.4h-1.4zM964.5 481.6h1.4v1.4h-1.4zM961 481.6h1.4v1.4h-1.4zM958 481.6h1.4v1.4h-1.4zM954.5 481.6h1.4v1.4h-1.4zM951 481.6h1.4v1.4h-1.4zM947.5 481.6h1.4v1.4h-1.4zM944 481.6h1.4v1.4h-1.4zM941 481.6h1.4v1.4h-1.4zM937.5 481.6h1.4v1.4h-1.4zM934 481.6h1.4v1.4h-1.4zM930.5 481.6h1.4v1.4h-1.4zM927 481.6h1.4v1.4h-1.4zM924 481.6h1.4v1.4h-1.4zM920.5 481.6h1.4v1.4h-1.4zM917 481.6h1.4v1.4h-1.4zM913.5 481.6h1.4v1.4h-1.4zM910 481.6h1.4v1.4h-1.4zM907 481.6h1.4v1.4h-1.4zM903.5 481.6h1.4v1.4h-1.4zM900 481.6h1.4v1.4h-1.4zM896.5 481.6h1.4v1.4h-1.4zM893 481.6h1.4v1.4h-1.4zM890 481.6h1.4v1.4h-1.4zM886.5 481.6h1.4v1.4h-1.4zM883 481.6h1.4v1.4h-1.4zM879.5 481.6h1.4v1.4h-1.4zM876 481.6h1.4v1.4h-1.4zM873 481.6h1.4v1.4h-1.4zM869.5 481.6h1.4v1.4h-1.4zM866 481.6h1.4v1.4h-1.4zM862.5 481.6h1.4v1.4h-1.4zM859 481.6h1.4v1.4h-1.4zM856 481.6h1.4v1.4h-1.4zM852.5 481.6h1.4v1.4h-1.4zM849 481.6h1.4v1.4h-1.4zM845.5 481.6h1.4v1.4h-1.4zM842 481.6h1.4v1.4h-1.4zM839 481.6h1.4v1.4h-1.4zM835.5 481.6h1.4v1.4h-1.4zM832 481.6h1.4v1.4h-1.4zM828.5 481.6h1.4v1.4h-1.4zM825 481.6h1.4v1.4h-1.4zM822 481.6h1.4v1.4h-1.4zM818.5 481.6h1.4v1.4h-1.4zM815 481.6h1.4v1.4h-1.4zM811.5 481.6h1.4v1.4h-1.4zM808 481.6h1.4v1.4h-1.4zM805 481.6h1.4v1.4h-1.4zM801.5 481.6h1.4v1.4h-1.4zM798 481.6h1.4v1.4h-1.4zM794.5 481.6h1.4v1.4h-1.4zM791 481.6h1.4v1.4h-1.4zM788 481.6h1.4v1.4h-1.4zM784.5 481.6h1.4v1.4h-1.4zM781 481.6h1.4v1.4h-1.4zM777.5 481.6h1.4v1.4h-1.4zM774 481.6h1.4v1.4h-1.4zM771 481.6h1.4v1.4h-1.4zM767.5 481.6h1.4v1.4h-1.4zM764 481.6h1.4v1.4h-1.4zM760.5 481.6h1.4v1.4h-1.4zM757 481.6h1.4v1.4h-1.4zM754 481.6h1.4v1.4h-1.4zM750.5 481.6h1.4v1.4h-1.4zM747 481.6h1.4v1.4h-1.4zM743.5 481.6h1.4v1.4h-1.4zM740 481.6h1.4v1.4h-1.4zM737 481.6h1.4v1.4h-1.4zM733.5 481.6h1.4v1.4h-1.4zM730 481.6h1.4v1.4h-1.4zM726.5 481.6h1.4v1.4h-1.4zM723 481.6h1.4v1.4h-1.4zM720 481.6h1.4v1.4h-1.4zM716.5 481.6h1.4v1.4h-1.4zM713 481.6h1.4v1.4h-1.4zM709.5 481.6h1.4v1.4h-1.4zM706 481.6h1.4v1.4h-1.4zM703 481.6h1.4v1.4h-1.4zM699.5 481.6h1.4v1.4h-1.4zM696 481.6h1.4v1.4h-1.4zM692.5 481.6h1.4v1.4h-1.4zM689 481.6h1.4v1.4h-1.4zM686 481.6h1.4v1.4h-1.4zM682.5 481.6h1.4v1.4h-1.4zM679 481.6h1.4v1.4h-1.4zM675.5 481.6h1.4v1.4h-1.4zM672 481.6h1.4v1.4h-1.4zM669 481.6h1.4v1.4h-1.4zM665.5 481.6h1.4v1.4h-1.4zM662 481.6h1.4v1.4h-1.4zM658.5 481.6h1.4v1.4h-1.4zM655 481.6h1.4v1.4h-1.4zM652 481.6h1.4v1.4h-1.4zM648.5 481.6h1.4v1.4h-1.4zM645 481.6h1.4v1.4h-1.4zM641.5 481.6h1.4v1.4h-1.4z"/></svg>
<div style="position:absolute;left:601.7px;top:493.80px;font-size:11.6px;line-height:11.6px;color:#111;white-space:nowrap;transform:scaleX(0.97);transform-origin:0 0;-webkit-text-stroke:0.2px #111">Organizing Information</div>
<div style="position:absolute;left:1063.3px;top:493.80px;font-size:11.6px;line-height:11.6px;color:#111">2</div>
<svg style="position:absolute;left:0;top:0" width="1650" height="972"><path fill="#222" d="M1060 502.6h1.4v1.4h-1.4zM1056.5 502.6h1.4v1.4h-1.4zM1053 502.6h1.4v1.4h-1.4zM1049.5 502.6h1.4v1.4h-1.4zM1046 502.6h1.4v1.4h-1.4zM1043 502.6h1.4v1.4h-1.4zM1039.5 502.6h1.4v1.4h-1.4zM1036 502.6h1.4v1.4h-1.4zM1032.5 502.6h1.4v1.4h-1.4zM1029 502.6h1.4v1.4h-1.4zM1026 502.6h1.4v1.4h-1.4zM1022.5 502.6h1.4v1.4h-1.4zM1019 502.6h1.4v1.4h-1.4zM1015.5 502.6h1.4v1.4h-1.4zM1012 502.6h1.4v1.4h-1.4zM1009 502.6h1.4v1.4h-1.4zM1005.5 502.6h1.4v1.4h-1.4zM1002 502.6h1.4v1.4h-1.4zM998.5 502.6h1.4v1.4h-1.4zM995 502.6h1.4v1.4h-1.4zM992 502.6h1.4v1.4h-1.4zM988.5 502.6h1.4v1.4h-1.4zM985 502.6h1.4v1.4h-1.4zM981.5 502.6h1.4v1.4h-1.4zM978 502.6h1.4v1.4h-1.4zM975 502.6h1.4v1.4h-1.4zM971.5 502.6h1.4v1.4h-1.4zM968 502.6h1.4v1.4h-1.4zM964.5 502.6h1.4v1.4h-1.4zM961 502.6h1.4v1.4h-1.4zM958 502.6h1.4v1.4h-1.4zM954.5 502.6h1.4v1.4h-1.4zM951 502.6h1.4v1.4h-1.4zM947.5 502.6h1.4v1.4h-1.4zM944 502.6h1.4v1.4h-1.4zM941 502.6h1.4v1.4h-1.4zM937.5 502.6h1.4v1.4h-1.4zM934 502.6h1.4v1.4h-1.4zM930.5 502.6h1.4v1.4h-1.4zM927 502.6h1.4v1.4h-1.4zM924 502.6h1.4v1.4h-1.4zM920.5 502.6h1.4v1.4h-1.4zM917 502.6h1.4v1.4h-1.4zM913.5 502.6h1.4v1.4h-1.4zM910 502.6h1.4v1.4h-1.4zM907 502.6h1.4v1.4h-1.4zM903.5 502.6h1.4v1.4h-1.4zM900 502.6h1.4v1.4h-1.4zM896.5 502.6h1.4v1.4h-1.4zM893 502.6h1.4v1.4h-1.4zM890 502.6h1.4v1.4h-1.4zM886.5 502.6h1.4v1.4h-1.4zM883 502.6h1.4v1.4h-1.4zM879.5 502.6h1.4v1.4h-1.4zM876 502.6h1.4v1.4h-1.4zM873 502.6h1.4v1.4h-1.4zM869.5 502.6h1.4v1.4h-1.4zM866 502.6h1.4v1.4h-1.4zM862.5 502.6h1.4v1.4h-1.4zM859 502.6h1.4v1.4h-1.4zM856 502.6h1.4v1.4h-1.4zM852.5 502.6h1.4v1.4h-1.4zM849 502.6h1.4v1.4h-1.4zM845.5 502.6h1.4v1.4h-1.4zM842 502.6h1.4v1.4h-1.4zM839 502.6h1.4v1.4h-1.4zM835.5 502.6h1.4v1.4h-1.4zM832 502.6h1.4v1.4h-1.4zM828.5 502.6h1.4v1.4h-1.4zM825 502.6h1.4v1.4h-1.4zM822 502.6h1.4v1.4h-1.4zM818.5 502.6h1.4v1.4h-1.4zM815 502.6h1.4v1.4h-1.4zM811.5 502.6h1.4v1.4h-1.4zM808 502.6h1.4v1.4h-1.4zM805 502.6h1.4v1.4h-1.4zM801.5 502.6h1.4v1.4h-1.4zM798 502.6h1.4v1.4h-1.4zM794.5 502.6h1.4v1.4h-1.4zM791 502.6h1.4v1.4h-1.4zM788 502.6h1.4v1.4h-1.4zM784.5 502.6h1.4v1.4h-1.4zM781 502.6h1.4v1.4h-1.4zM777.5 502.6h1.4v1.4h-1.4zM774 502.6h1.4v1.4h-1.4zM771 502.6h1.4v1.4h-1.4zM767.5 502.6h1.4v1.4h-1.4zM764 502.6h1.4v1.4h-1.4zM760.5 502.6h1.4v1.4h-1.4zM757 502.6h1.4v1.4h-1.4zM754 502.6h1.4v1.4h-1.4zM750.5 502.6h1.4v1.4h-1.4zM747 502.6h1.4v1.4h-1.4zM743.5 502.6h1.4v1.4h-1.4zM740 502.6h1.4v1.4h-1.4zM737 502.6h1.4v1.4h-1.4zM733.5 502.6h1.4v1.4h-1.4zM730 502.6h1.4v1.4h-1.4zM726.5 502.6h1.4v1.4h-1.4zM723 502.6h1.4v1.4h-1.4zM720 502.6h1.4v1.4h-1.4z"/></svg>
<div style="position:absolute;left:601.7px;top:514.49px;font-size:11.6px;line-height:11.6px;color:#111;white-space:nowrap;transform:scaleX(0.97);transform-origin:0 0;-webkit-text-stroke:0.2px #111">Utilizing Mnemonics</div>
<div style="position:absolute;left:1063.3px;top:514.49px;font-size:11.6px;line-height:11.6px;color:#111">2</div>
<svg style="position:absolute;left:0;top:0" width="1650" height="972"><path fill="#222" d="M1060 522.6h1.4v1.4h-1.4zM1056.5 522.6h1.4v1.4h-1.4zM1053 522.6h1.4v1.4h-1.4zM1049.5 522.6h1.4v1.4h-1.4zM1046 522.6h1.4v1.4h-1.4zM1043 522.6h1.4v1.4h-1.4zM1039.5 522.6h1.4v1.4h-1.4zM1036 522.6h1.4v1.4h-1.4zM1032.5 522.6h1.4v1.4h-1.4zM1029 522.6h1.4v1.4h-1.4zM1026 522.6h1.4v1.4h-1.4zM1022.5 522.6h1.4v1.4h-1.4zM1019 522.6h1.4v1.4h-1.4zM1015.5 522.6h1.4v1.4h-1.4zM1012 522.6h1.4v1.4h-1.4zM1009 522.6h1.4v1.4h-1.4zM1005.5 522.6h1.4v1.4h-1.4zM1002 522.6h1.4v1.4h-1.4zM998.5 522.6h1.4v1.4h-1.4zM995 522.6h1.4v1.4h-1.4zM992 522.6h1.4v1.4h-1.4zM988.5 522.6h1.4v1.4h-1.4zM985 522.6h1.4v1.4h-1.4zM981.5 522.6h1.4v1.4h-1.4zM978 522.6h1.4v1.4h-1.4zM975 522.6h1.4v1.4h-1.4zM971.5 522.6h1.4v1.4h-1.4zM968 522.6h1.4v1.4h-1.4zM964.5 522.6h1.4v1.4h-1.4zM961 522.6h1.4v1.4h-1.4zM958 522.6h1.4v1.4h-1.4zM954.5 522.6h1.4v1.4h-1.4zM951 522.6h1.4v1.4h-1.4zM947.5 522.6h1.4v1.4h-1.4zM944 522.6h1.4v1.4h-1.4zM941 522.6h1.4v1.4h-1.4zM937.5 522.6h1.4v1.4h-1.4zM934 522.6h1.4v1.4h-1.4zM930.5 522.6h1.4v1.4h-1.4zM927 522.6h1.4v1.4h-1.4zM924 522.6h1.4v1.4h-1.4zM920.5 522.6h1.4v1.4h-1.4zM917 522.6h1.4v1.4h-1.4zM913.5 522.6h1.4v1.4h-1.4zM910 522.6h1.4v1.4h-1.4zM907 522.6h1.4v1.4h-1.4zM903.5 522.6h1.4v1.4h-1.4zM900 522.6h1.4v1.4h-1.4zM896.5 522.6h1.4v1.4h-1.4zM893 522.6h1.4v1.4h-1.4zM890 522.6h1.4v1.4h-1.4zM886.5 522.6h1.4v1.4h-1.4zM883 522.6h1.4v1.4h-1.4zM879.5 522.6h1.4v1.4h-1.4zM876 522.6h1.4v1.4h-1.4zM873 522.6h1.4v1.4h-1.4zM869.5 522.6h1.4v1.4h-1.4zM866 522.6h1.4v1.4h-1.4zM862.5 522.6h1.4v1.4h-1.4zM859 522.6h1.4v1.4h-1.4zM856 522.6h1.4v1.4h-1.4zM852.5 522.6h1.4v1.4h-1.4zM849 522.6h1.4v1.4h-1.4zM845.5 522.6h1.4v1.4h-1.4zM842 522.6h1.4v1.4h-1.4zM839 522.6h1.4v1.4h-1.4zM835.5 522.6h1.4v1.4h-1.4zM832 522.6h1.4v1.4h-1.4zM828.5 522.6h1.4v1.4h-1.4zM825 522.6h1.4v1.4h-1.4zM822 522.6h1.4v1.4h-1.4zM818.5 522.6h1.4v1.4h-1.4zM815 522.6h1.4v1.4h-1.4zM811.5 522.6h1.4v1.4h-1.4zM808 522.6h1.4v1.4h-1.4zM805 522.6h1.4v1.4h-1.4zM801.5 522.6h1.4v1.4h-1.4zM798 522.6h1.4v1.4h-1.4zM794.5 522.6h1.4v1.4h-1.4zM791 522.6h1.4v1.4h-1.4zM788 522.6h1.4v1.4h-1.4zM784.5 522.6h1.4v1.4h-1.4zM781 522.6h1.4v1.4h-1.4zM777.5 522.6h1.4v1.4h-1.4zM774 522.6h1.4v1.4h-1.4zM771 522.6h1.4v1.4h-1.4zM767.5 522.6h1.4v1.4h-1.4zM764 522.6h1.4v1.4h-1.4zM760.5 522.6h1.4v1.4h-1.4zM757 522.6h1.4v1.4h-1.4zM754 522.6h1.4v1.4h-1.4zM750.5 522.6h1.4v1.4h-1.4zM747 522.6h1.4v1.4h-1.4zM743.5 522.6h1.4v1.4h-1.4zM740 522.6h1.4v1.4h-1.4zM737 522.6h1.4v1.4h-1.4zM733.5 522.6h1.4v1.4h-1.4zM730 522.6h1.4v1.4h-1.4zM726.5 522.6h1.4v1.4h-1.4zM723 522.6h1.4v1.4h-1.4zM720 522.6h1.4v1.4h-1.4zM716.5 522.6h1.4v1.4h-1.4zM713 522.6h1.4v1.4h-1.4zM709.5 522.6h1.4v1.4h-1.4zM706 522.6h1.4v1.4h-1.4z"/></svg>
<div style="position:absolute;left:590.5px;top:535.18px;font-size:11.6px;line-height:11.6px;color:#111;white-space:nowrap;transform:scaleX(0.97);transform-origin:0 0;-webkit-text-stroke:0.2px #111">Active Recall</div>
<div style="position:absolute;left:1063.3px;top:535.18px;font-size:11.6px;line-height:11.6px;color:#111">2</div>
<svg style="position:absolute;left:0;top:0" width="1650" height="972"><path fill="#222" d="M1060 543.6h1.4v1.4h-1.4zM1056.5 543.6h1.4v1.4h-1.4zM1053 543.6h1.4v1.4h-1.4zM1049.5 543.6h1.4v1.4h-1.4zM1046 543.6h1.4v1.4h-1.4zM1043 543.6h1.4v1.4h-1.4zM1039.5 543.6h1.4v1.4h-1.4zM1036 543.6h1.4v1.4h-1.4zM1032.5 543.6h1.4v1.4h-1.4zM1029 543.6h1.4v1.4h-1.4zM1026 543.6h1.4v1.4h-1.4zM1022.5 543.6h1.4v1.4h-1.4zM1019 543.6h1.4v1.4h-1.4zM1015.5 543.6h1.4v1.4h-1.4zM1012 543.6h1.4v1.4h-1.4zM1009 543.6h1.4v1.4h-1.4zM1005.5 543.6h1.4v1.4h-1.4zM1002 543.6h1.4v1.4h-1.4zM998.5 543.6h1.4v1.4h-1.4zM995 543.6h1.4v1.4h-1.4zM992 543.6h1.4v1.4h-1.4zM988.5 543.6h1.4v1.4h-1.4zM985 543.6h1.4v1.4h-1.4zM981.5 543.6h1.4v1.4h-1.4zM978 543.6h1.4v1.4h-1.4zM975 543.6h1.4v1.4h-1.4zM971.5 543.6h1.4v1.4h-1.4zM968 543.6h1.4v1.4h-1.4zM964.5 543.6h1.4v1.4h-1.4zM961 543.6h1.4v1.4h-1.4zM958 543.6h1.4v1.4h-1.4zM954.5 543.6h1.4v1.4h-1.4zM951 543.6h1.4v1.4h-1.4zM947.5 543.6h1.4v1.4h-1.4zM944 543.6h1.4v1.4h-1.4zM941 543.6h1.4v1.4h-1.4zM937.5 543.6h1.4v1.4h-1.4zM934 543.6h1.4v1.4h-1.4zM930.5 543.6h1.4v1.4h-1.4zM927 543.6h1.4v1.4h-1.4zM924 543.6h1.4v1.4h-1.4zM920.5 543.6h1.4v1.4h-1.4zM917 543.6h1.4v1.4h-1.4zM913.5 543.6h1.4v1.4h-1.4zM910 543.6h1.4v1.4h-1.4zM907 543.6h1.4v1.4h-1.4zM903.5 543.6h1.4v1.4h-1.4zM900 543.6h1.4v1.4h-1.4zM896.5 543.6h1.4v1.4h-1.4zM893 543.6h1.4v1.4h-1.4zM890 543.6h1.4v1.4h-1.4zM886.5 543.6h1.4v1.4h-1.4zM883 543.6h1.4v1.4h-1.4zM879.5 543.6h1.4v1.4h-1.4zM876 543.6h1.4v1.4h-1.4zM873 543.6h1.4v1.4h-1.4zM869.5 543.6h1.4v1.4h-1.4zM866 543.6h1.4v1.4h-1.4zM862.5 543.6h1.4v1.4h-1.4zM859 543.6h1.4v1.4h-1.4zM856 543.6h1.4v1.4h-1.4zM852.5 543.6h1.4v1.4h-1.4zM849 543.6h1.4v1.4h-1.4zM845.5 543.6h1.4v1.4h-1.4zM842 543.6h1.4v1.4h-1.4zM839 543.6h1.4v1.4h-1.4zM835.5 543.6h1.4v1.4h-1.4zM832 543.6h1.4v1.4h-1.4zM828.5 543.6h1.4v1.4h-1.4zM825 543.6h1.4v1.4h-1.4zM822 543.6h1.4v1.4h-1.4zM818.5 543.6h1.4v1.4h-1.4zM815 543.6h1.4v1.4h-1.4zM811.5 543.6h1.4v1.4h-1.4zM808 543.6h1.4v1.4h-1.4zM805 543.6h1.4v1.4h-1.4zM801.5 543.6h1.4v1.4h-1.4zM798 543.6h1.4v1.4h-1.4zM794.5 543.6h1.4v1.4h-1.4zM791 543.6h1.4v1.4h-1.4zM788 543.6h1.4v1.4h-1.4zM784.5 543.6h1.4v1.4h-1.4zM781 543.6h1.4v1.4h-1.4zM777.5 543.6h1.4v1.4h-1.4zM774 543.6h1.4v1.4h-1.4zM771 543.6h1.4v1.4h-1.4zM767.5 543.6h1.4v1.4h-1.4zM764 543.6h1.4v1.4h-1.4zM760.5 543.6h1.4v1.4h-1.4zM757 543.6h1.4v1.4h-1.4zM754 543.6h1.4v1.4h-1.4zM750.5 543.6h1.4v1.4h-1.4zM747 543.6h1.4v1.4h-1.4zM743.5 543.6h1.4v1.4h-1.4zM740 543.6h1.4v1.4h-1.4zM737 543.6h1.4v1.4h-1.4zM733.5 543.6h1.4v1.4h-1.4zM730 543.6h1.4v1.4h-1.4zM726.5 543.6h1.4v1.4h-1.4zM723 543.6h1.4v1.4h-1.4zM720 543.6h1.4v1.4h-1.4zM716.5 543.6h1.4v1.4h-1.4zM713 543.6h1.4v1.4h-1.4zM709.5 543.6h1.4v1.4h-1.4zM706 543.6h1.4v1.4h-1.4zM703 543.6h1.4v1.4h-1.4zM699.5 543.6h1.4v1.4h-1.4zM696 543.6h1.4v1.4h-1.4zM692.5 543.6h1.4v1.4h-1.4zM689 543.6h1.4v1.4h-1.4zM686 543.6h1.4v1.4h-1.4zM682.5 543.6h1.4v1.4h-1.4zM679 543.6h1.4v1.4h-1.4zM675.5 543.6h1.4v1.4h-1.4zM672 543.6h1.4v1.4h-1.4zM669 543.6h1.4v1.4h-1.4zM665.5 543.6h1.4v1.4h-1.4zM662 543.6h1.4v1.4h-1.4zM658.5 543.6h1.4v1.4h-1.4z"/></svg>
<div style="position:absolute;left:601.7px;top:555.87px;font-size:11.6px;line-height:11.6px;color:#111;white-space:nowrap;transform:scaleX(0.97);transform-origin:0 0;-webkit-text-stroke:0.2px #111">Practice Testing</div>
<div style="position:absolute;left:1063.3px;top:555.87px;font-size:11.6px;line-height:11.6px;color:#111">2</div>
<svg style="position:absolute;left:0;top:0" width="1650" height="972"><path fill="#222" d="M1060 564.6h1.4v1.4h-1.4zM1056.5 564.6h1.4v1.4h-1.4zM1053 564.6h1.4v1.4h-1.4zM1049.5 564.6h1.4v1.4h-1.4zM1046 564.6h1.4v1.4h-1.4zM1043 564.6h1.4v1.4h-1.4zM1039.5 564.6h1.4v1.4h-1.4zM1036 564.6h1.4v1.4h-1.4zM1032.5 564.6h1.4v1.4h-1.4zM1029 564.6h1.4v1.4h-1.4zM1026 564.6h1.4v1.4h-1.4zM1022.5 564.6h1.4v1.4h-1.4zM1019 564.6h1.4v1.4h-1.4zM1015.5 564.6h1.4v1.4h-1.4zM1012 564.6h1.4v1.4h-1.4zM1009 564.6h1.4v1.4h-1.4zM1005.5 564.6h1.4v1.4h-1.4zM1002 564.6h1.4v1.4h-1.4zM998.5 564.6h1.4v1.4h-1.4zM995 564.6h1.4v1.4h-1.4zM992 564.6h1.4v1.4h-1.4zM988.5 564.6h1.4v1.4h-1.4zM985 564.6h1.4v1.4h-1.4zM981.5 564.6h1.4v1.4h-1.4zM978 564.6h1.4v1.4h-1.4zM975 564.6h1.4v1.4h-1.4zM971.5 564.6h1.4v1.4h-1.4zM968 564.6h1.4v1.4h-1.4zM964.5 564.6h1.4v1.4h-1.4zM961 564.6h1.4v1.4h-1.4zM958 564.6h1.4v1.4h-1.4zM954.5 564.6h1.4v1.4h-1.4zM951 564.6h1.4v1.4h-1.4zM947.5 564.6h1.4v1.4h-1.4zM944 564.6h1.4v1.4h-1.4zM941 564.6h1.4v1.4h-1.4zM937.5 564.6h1.4v1.4h-1.4zM934 564.6h1.4v1.4h-1.4zM930.5 564.6h1.4v1.4h-1.4zM927 564.6h1.4v1.4h-1.4zM924 564.6h1.4v1.4h-1.4zM920.5 564.6h1.4v1.4h-1.4zM917 564.6h1.4v1.4h-1.4zM913.5 564.6h1.4v1.4h-1.4zM910 564.6h1.4v1.4h-1.4zM907 564.6h1.4v1.4h-1.4zM903.5 564.6h1.4v1.4h-1.4zM900 564.6h1.4v1.4h-1.4zM896.5 564.6h1.4v1.4h-1.4zM893 564.6h1.4v1.4h-1.4zM890 564.6h1.4v1.4h-1.4zM886.5 564.6h1.4v1.4h-1.4zM883 564.6h1.4v1.4h-1.4zM879.5 564.6h1.4v1.4h-1.4zM876 564.6h1.4v1.4h-1.4zM873 564.6h1.4v1.4h-1.4zM869.5 564.6h1.4v1.4h-1.4zM866 564.6h1.4v1.4h-1.4zM862.5 564.6h1.4v1.4h-1.4zM859 564.6h1.4v1.4h-1.4zM856 564.6h1.4v1.4h-1.4zM852.5 564.6h1.4v1.4h-1.4zM849 564.6h1.4v1.4h-1.4zM845.5 564.6h1.4v1.4h-1.4zM842 564.6h1.4v1.4h-1.4zM839 564.6h1.4v1.4h-1.4zM835.5 564.6h1.4v1.4h-1.4zM832 564.6h1.4v1.4h-1.4zM828.5 564.6h1.4v1.4h-1.4zM825 564.6h1.4v1.4h-1.4zM822 564.6h1.4v1.4h-1.4zM818.5 564.6h1.4v1.4h-1.4zM815 564.6h1.4v1.4h-1.4zM811.5 564.6h1.4v1.4h-1.4zM808 564.6h1.4v1.4h-1.4zM805 564.6h1.4v1.4h-1.4zM801.5 564.6h1.4v1.4h-1.4zM798 564.6h1.4v1.4h-1.4zM794.5 564.6h1.4v1.4h-1.4zM791 564.6h1.4v1.4h-1.4zM788 564.6h1.4v1.4h-1.4zM784.5 564.6h1.4v1.4h-1.4zM781 564.6h1.4v1.4h-1.4zM777.5 564.6h1.4v1.4h-1.4zM774 564.6h1.4v1.4h-1.4zM771 564.6h1.4v1.4h-1.4zM767.5 564.6h1.4v1.4h-1.4zM764 564.6h1.4v1.4h-1.4zM760.5 564.6h1.4v1.4h-1.4zM757 564.6h1.4v1.4h-1.4zM754 564.6h1.4v1.4h-1.4zM750.5 564.6h1.4v1.4h-1.4zM747 564.6h1.4v1.4h-1.4zM743.5 564.6h1.4v1.4h-1.4zM740 564.6h1.4v1.4h-1.4zM737 564.6h1.4v1.4h-1.4zM733.5 564.6h1.4v1.4h-1.4zM730 564.6h1.4v1.4h-1.4zM726.5 564.6h1.4v1.4h-1.4zM723 564.6h1.4v1.4h-1.4zM720 564.6h1.4v1.4h-1.4zM716.5 564.6h1.4v1.4h-1.4zM713 564.6h1.4v1.4h-1.4zM709.5 564.6h1.4v1.4h-1.4zM706 564.6h1.4v1.4h-1.4zM703 564.6h1.4v1.4h-1.4zM699.5 564.6h1.4v1.4h-1.4zM696 564.6h1.4v1.4h-1.4zM692.5 564.6h1.4v1.4h-1.4zM689 564.6h1.4v1.4h-1.4zM686 564.6h1.4v1.4h-1.4z"/></svg>
<div style="position:absolute;left:601.7px;top:576.56px;font-size:11.6px;line-height:11.6px;color:#111;white-space:nowrap;transform:scaleX(0.97);transform-origin:0 0;-webkit-text-stroke:0.2px #111">Self-Explanation</div>
<div style="position:absolute;left:1063.3px;top:576.56px;font-size:11.6px;line-height:11.6px;color:#111">2</div>
<svg style="position:absolute;left:0;top:0" width="1650" height="972"><path fill="#222" d="M1060 584.6h1.4v1.4h-1.4zM1056.5 584.6h1.4v1.4h-1.4zM1053 584.6h1.4v1.4h-1.4zM1049.5 584.6h1.4v1.4h-1.4zM1046 584.6h1.4v1.4h-1.4zM1043 584.6h1.4v1.4h-1.4zM1039.5 584.6h1.4v1.4h-1.4zM1036 584.6h1.4v1.4h-1.4zM1032.5 584.6h1.4v1.4h-1.4zM1029 584.6h1.4v1.4h-1.4zM1026 584.6h1.4v1.4h-1.4zM1022.5 584.6h1.4v1.4h-1.4zM1019 584.6h1.4v1.4h-1.4zM1015.5 584.6h1.4v1.4h-1.4zM1012 584.6h1.4v1.4h-1.4zM1009 584.6h1.4v1.4h-1.4zM1005.5 584.6h1.4v1.4h-1.4zM1002 584.6h1.4v1.4h-1.4zM998.5 584.6h1.4v1.4h-1.4zM995 584.6h1.4v1.4h-1.4zM992 584.6h1.4v1.4h-1.4zM988.5 584.6h1.4v1.4h-1.4zM985 584.6h1.4v1.4h-1.4zM981.5 584.6h1.4v1.4h-1.4zM978 584.6h1.4v1.4h-1.4zM975 584.6h1.4v1.4h-1.4zM971.5 584.6h1.4v1.4h-1.4zM968 584.6h1.4v1.4h-1.4zM964.5 584.6h1.4v1.4h-1.4zM961 584.6h1.4v1.4h-1.4zM958 584.6h1.4v1.4h-1.4zM954.5 584.6h1.4v1.4h-1.4zM951 584.6h1.4v1.4h-1.4zM947.5 584.6h1.4v1.4h-1.4zM944 584.6h1.4v1.4h-1.4zM941 584.6h1.4v1.4h-1.4zM937.5 584.6h1.4v1.4h-1.4zM934 584.6h1.4v1.4h-1.4zM930.5 584.6h1.4v1.4h-1.4zM927 584.6h1.4v1.4h-1.4zM924 584.6h1.4v1.4h-1.4zM920.5 584.6h1.4v1.4h-1.4zM917 584.6h1.4v1.4h-1.4zM913.5 584.6h1.4v1.4h-1.4zM910 584.6h1.4v1.4h-1.4zM907 584.6h1.4v1.4h-1.4zM903.5 584.6h1.4v1.4h-1.4zM900 584.6h1.4v1.4h-1.4zM896.5 584.6h1.4v1.4h-1.4zM893 584.6h1.4v1.4h-1.4zM890 584.6h1.4v1.4h-1.4zM886.5 584.6h1.4v1.4h-1.4zM883 584.6h1.4v1.4h-1.4zM879.5 584.6h1.4v1.4h-1.4zM876 584.6h1.4v1.4h-1.4zM873 584.6h1.4v1.4h-1.4zM869.5 584.6h1.4v1.4h-1.4zM866 584.6h1.4v1.4h-1.4zM862.5 584.6h1.4v1.4h-1.4zM859 584.6h1.4v1.4h-1.4zM856 584.6h1.4v1.4h-1.4zM852.5 584.6h1.4v1.4h-1.4zM849 584.6h1.4v1.4h-1.4zM845.5 584.6h1.4v1.4h-1.4zM842 584.6h1.4v1.4h-1.4zM839 584.6h1.4v1.4h-1.4zM835.5 584.6h1.4v1.4h-1.4zM832 584.6h1.4v1.4h-1.4zM828.5 584.6h1.4v1.4h-1.4zM825 584.6h1.4v1.4h-1.4zM822 584.6h1.4v1.4h-1.4zM818.5 584.6h1.4v1.4h-1.4zM815 584.6h1.4v1.4h-1.4zM811.5 584.6h1.4v1.4h-1.4zM808 584.6h1.4v1.4h-1.4zM805 584.6h1.4v1.4h-1.4zM801.5 584.6h1.4v1.4h-1.4zM798 584.6h1.4v1.4h-1.4zM794.5 584.6h1.4v1.4h-1.4zM791 584.6h1.4v1.4h-1.4zM788 584.6h1.4v1.4h-1.4zM784.5 584.6h1.4v1.4h-1.4zM781 584.6h1.4v1.4h-1.4zM777.5 584.6h1.4v1.4h-1.4zM774 584.6h1.4v1.4h-1.4zM771 584.6h1.4v1.4h-1.4zM767.5 584.6h1.4v1.4h-1.4zM764 584.6h1.4v1.4h-1.4zM760.5 584.6h1.4v1.4h-1.4zM757 584.6h1.4v1.4h-1.4zM754 584.6h1.4v1.4h-1.4zM750.5 584.6h1.4v1.4h-1.4zM747 584.6h1.4v1.4h-1.4zM743.5 584.6h1.4v1.4h-1.4zM740 584.6h1.4v1.4h-1.4zM737 584.6h1.4v1.4h-1.4zM733.5 584.6h1.4v1.4h-1.4zM730 584.6h1.4v1.4h-1.4zM726.5 584.6h1.4v1.4h-1.4zM723 584.6h1.4v1.4h-1.4zM720 584.6h1.4v1.4h-1.4zM716.5 584.6h1.4v1.4h-1.4zM713 584.6h1.4v1.4h-1.4zM709.5 584.6h1.4v1.4h-1.4zM706 584.6h1.4v1.4h-1.4zM703 584.6h1.4v1.4h-1.4zM699.5 584.6h1.4v1.4h-1.4zM696 584.6h1.4v1.4h-1.4zM692.5 584.6h1.4v1.4h-1.4zM689 584.6h1.4v1.4h-1.4zM686 584.6h1.4v1.4h-1.4z"/></svg>
<div style="position:absolute;left:590.5px;top:597.25px;font-size:11.6px;line-height:11.6px;color:#111;white-space:nowrap;transform:scaleX(0.97);transform-origin:0 0;-webkit-text-stroke:0.2px #111">Interleaving</div>
<div style="position:absolute;left:1063.3px;top:597.25px;font-size:11.6px;line-height:11.6px;color:#111">2</div>
<svg style="position:absolute;left:0;top:0" width="1650" height="972"><path fill="#222" d="M1060 605.6h1.4v1.4h-1.4zM1056.5 605.6h1.4v1.4h-1.4zM1053 605.6h1.4v1.4h-1.4zM1049.5 605.6h1.4v1.4h-1.4zM1046 605.6h1.4v1.4h-1.4zM1043 605.6h1.4v1.4h-1.4zM1039.5 605.6h1.4v1.4h-1.4zM1036 605.6h1.4v1.4h-1.4zM1032.5 605.6h1.4v1.4h-1.4zM1029 605.6h1.4v1.4h-1.4zM1026 605.6h1.4v1.4h-1.4zM1022.5 605.6h1.4v1.4h-1.4zM1019 605.6h1.4v1.4h-1.4zM1015.5 605.6h1.4v1.4h-1.4zM1012 605.6h1.4v1.4h-1.4zM1009 605.6h1.4v1.4h-1.4zM1005.5 605.6h1.4v1.4h-1.4zM1002 605.6h1.4v1.4h-1.4zM998.5 605.6h1.4v1.4h-1.4zM995 605.6h1.4v1.4h-1.4zM992 605.6h1.4v1.4h-1.4zM988.5 605.6h1.4v1.4h-1.4zM985 605.6h1.4v1.4h-1.4zM981.5 605.6h1.4v1.4h-1.4zM978 605.6h1.4v1.4h-1.4zM975 605.6h1.4v1.4h-1.4zM971.5 605.6h1.4v1.4h-1.4zM968 605.6h1.4v1.4h-1.4zM964.5 605.6h1.4v1.4h-1.4zM961 605.6h1.4v1.4h-1.4zM958 605.6h1.4v1.4h-1.4zM954.5 605.6h1.4v1.4h-1.4zM951 605.6h1.4v1.4h-1.4zM947.5 605.6h1.4v1.4h-1.4zM944 605.6h1.4v1.4h-1.4zM941 605.6h1.4v1.4h-1.4zM937.5 605.6h1.4v1.4h-1.4zM934 605.6h1.4v1.4h-1.4zM930.5 605.6h1.4v1.4h-1.4zM927 605.6h1.4v1.4h-1.4zM924 605.6h1.4v1.4h-1.4zM920.5 605.6h1.4v1.4h-1.4zM917 605.6h1.4v1.4h-1.4zM913.5 605.6h1.4v1.4h-1.4zM910 605.6h1.4v1.4h-1.4zM907 605.6h1.4v1.4h-1.4zM903.5 605.6h1.4v1.4h-1.4zM900 605.6h1.4v1.4h-1.4zM896.5 605.6h1.4v1.4h-1.4zM893 605.6h1.4v1.4h-1.4zM890 605.6h1.4v1.4h-1.4zM886.5 605.6h1.4v1.4h-1.4zM883 605.6h1.4v1.4h-1.4zM879.5 605.6h1.4v1.4h-1.4zM876 605.6h1.4v1.4h-1.4zM873 605.6h1.4v1.4h-1.4zM869.5 605.6h1.4v1.4h-1.4zM866 605.6h1.4v1.4h-1.4zM862.5 605.6h1.4v1.4h-1.4zM859 605.6h1.4v1.4h-1.4zM856 605.6h1.4v1.4h-1.4zM852.5 605.6h1.4v1.4h-1.4zM849 605.6h1.4v1.4h-1.4zM845.5 605.6h1.4v1.4h-1.4zM842 605.6h1.4v1.4h-1.4zM839 605.6h1.4v1.4h-1.4zM835.5 605.6h1.4v1.4h-1.4zM832 605.6h1.4v1.4h-1.4zM828.5 605.6h1.4v1.4h-1.4zM825 605.6h1.4v1.4h-1.4zM822 605.6h1.4v1.4h-1.4zM818.5 605.6h1.4v1.4h-1.4zM815 605.6h1.4v1.4h-1.4zM811.5 605.6h1.4v1.4h-1.4zM808 605.6h1.4v1.4h-1.4zM805 605.6h1.4v1.4h-1.4zM801.5 605.6h1.4v1.4h-1.4zM798 605.6h1.4v1.4h-1.4zM794.5 605.6h1.4v1.4h-1.4zM791 605.6h1.4v1.4h-1.4zM788 605.6h1.4v1.4h-1.4zM784.5 605.6h1.4v1.4h-1.4zM781 605.6h1.4v1.4h-1.4zM777.5 605.6h1.4v1.4h-1.4zM774 605.6h1.4v1.4h-1.4zM771 605.6h1.4v1.4h-1.4zM767.5 605.6h1.4v1.4h-1.4zM764 605.6h1.4v1.4h-1.4zM760.5 605.6h1.4v1.4h-1.4zM757 605.6h1.4v1.4h-1.4zM754 605.6h1.4v1.4h-1.4zM750.5 605.6h1.4v1.4h-1.4zM747 605.6h1.4v1.4h-1.4zM743.5 605.6h1.4v1.4h-1.4zM740 605.6h1.4v1.4h-1.4zM737 605.6h1.4v1.4h-1.4zM733.5 605.6h1.4v1.4h-1.4zM730 605.6h1.4v1.4h-1.4zM726.5 605.6h1.4v1.4h-1.4zM723 605.6h1.4v1.4h-1.4zM720 605.6h1.4v1.4h-1.4zM716.5 605.6h1.4v1.4h-1.4zM713 605.6h1.4v1.4h-1.4zM709.5 605.6h1.4v1.4h-1.4zM706 605.6h1.4v1.4h-1.4zM703 605.6h1.4v1.4h-1.4zM699.5 605.6h1.4v1.4h-1.4zM696 605.6h1.4v1.4h-1.4zM692.5 605.6h1.4v1.4h-1.4zM689 605.6h1.4v1.4h-1.4zM686 605.6h1.4v1.4h-1.4zM682.5 605.6h1.4v1.4h-1.4zM679 605.6h1.4v1.4h-1.4zM675.5 605.6h1.4v1.4h-1.4zM672 605.6h1.4v1.4h-1.4zM669 605.6h1.4v1.4h-1.4zM665.5 605.6h1.4v1.4h-1.4zM662 605.6h1.4v1.4h-1.4zM658.5 605.6h1.4v1.4h-1.4zM655 605.6h1.4v1.4h-1.4zM652 605.6h1.4v1.4h-1.4z"/></svg>
<div style="position:absolute;left:601.7px;top:617.94px;font-size:11.6px;line-height:11.6px;color:#111;white-space:nowrap;transform:scaleX(0.97);transform-origin:0 0;-webkit-text-stroke:0.2px #111">Benefits of Interleaving</div>
<div style="position:absolute;left:1063.3px;top:617.94px;font-size:11.6px;line-height:11.6px;color:#111">2</div>
<svg style="position:absolute;left:0;top:0" width="1650" height="972"><path fill="#222" d="M1060 626.6h1.4v1.4h-1.4zM1056.5 626.6h1.4v1.4h-1.4zM1053 626.6h1.4v1.4h-1.4zM1049.5 626.6h1.4v1.4h-1.4zM1046 626.6h1.4v1.4h-1.4zM1043 626.6h1.4v1.4h-1.4zM1039.5 626.6h1.4v1.4h-1.4zM1036 626.6h1.4v1.4h-1.4zM1032.5 626.6h1.4v1.4h-1.4zM1029 626.6h1.4v1.4h-1.4zM1026 626.6h1.4v1.4h-1.4zM1022.5 626.6h1.4v1.4h-1.4zM1019 626.6h1.4v1.4h-1.4zM1015.5 626.6h1.4v1.4h-1.4zM1012 626.6h1.4v1.4h-1.4zM1009 626.6h1.4v1.4h-1.4zM1005.5 626.6h1.4v1.4h-1.4zM1002 626.6h1.4v1.4h-1.4zM998.5 626.6h1.4v1.4h-1.4zM995 626.6h1.4v1.4h-1.4zM992 626.6h1.4v1.4h-1.4zM988.5 626.6h1.4v1.4h-1.4zM985 626.6h1.4v1.4h-1.4zM981.5 626.6h1.4v1.4h-1.4zM978 626.6h1.4v1.4h-1.4zM975 626.6h1.4v1.4h-1.4zM971.5 626.6h1.4v1.4h-1.4zM968 626.6h1.4v1.4h-1.4zM964.5 626.6h1.4v1.4h-1.4zM961 626.6h1.4v1.4h-1.4zM958 626.6h1.4v1.4h-1.4zM954.5 626.6h1.4v1.4h-1.4zM951 626.6h1.4v1.4h-1.4zM947.5 626.6h1.4v1.4h-1.4zM944 626.6h1.4v1.4h-1.4zM941 626.6h1.4v1.4h-1.4zM937.5 626.6h1.4v1.4h-1.4zM934 626.6h1.4v1.4h-1.4zM930.5 626.6h1.4v1.4h-1.4zM927 626.6h1.4v1.4h-1.4zM924 626.6h1.4v1.4h-1.4zM920.5 626.6h1.4v1.4h-1.4zM917 626.6h1.4v1.4h-1.4zM913.5 626.6h1.4v1.4h-1.4zM910 626.6h1.4v1.4h-1.4zM907 626.6h1.4v1.4h-1.4zM903.5 626.6h1.4v1.4h-1.4zM900 626.6h1.4v1.4h-1.4zM896.5 626.6h1.4v1.4h-1.4zM893 626.6h1.4v1.4h-1.4zM890 626.6h1.4v1.4h-1.4zM886.5 626.6h1.4v1.4h-1.4zM883 626.6h1.4v1.4h-1.4zM879.5 626.6h1.4v1.4h-1.4zM876 626.6h1.4v1.4h-1.4zM873 626.6h1.4v1.4h-1.4zM869.5 626.6h1.4v1.4h-1.4zM866 626.6h1.4v1.4h-1.4zM862.5 626.6h1.4v1.4h-1.4zM859 626.6h1.4v1.4h-1.4zM856 626.6h1.4v1.4h-1.4zM852.5 626.6h1.4v1.4h-1.4zM849 626.6h1.4v1.4h-1.4zM845.5 626.6h1.4v1.4h-1.4zM842 626.6h1.4v1.4h-1.4zM839 626.6h1.4v1.4h-1.4zM835.5 626.6h1.4v1.4h-1.4zM832 626.6h1.4v1.4h-1.4zM828.5 626.6h1.4v1.4h-1.4zM825 626.6h1.4v1.4h-1.4zM822 626.6h1.4v1.4h-1.4zM818.5 626.6h1.4v1.4h-1.4zM815 626.6h1.4v1.4h-1.4zM811.5 626.6h1.4v1.4h-1.4zM808 626.6h1.4v1.4h-1.4zM805 626.6h1.4v1.4h-1.4zM801.5 626.6h1.4v1.4h-1.4zM798 626.6h1.4v1.4h-1.4zM794.5 626.6h1.4v1.4h-1.4zM791 626.6h1.4v1.4h-1.4zM788 626.6h1.4v1.4h-1.4zM784.5 626.6h1.4v1.4h-1.4zM781 626.6h1.4v1.4h-1.4zM777.5 626.6h1.4v1.4h-1.4zM774 626.6h1.4v1.4h-1.4zM771 626.6h1.4v1.4h-1.4zM767.5 626.6h1.4v1.4h-1.4zM764 626.6h1.4v1.4h-1.4zM760.5 626.6h1.4v1.4h-1.4zM757 626.6h1.4v1.4h-1.4zM754 626.6h1.4v1.4h-1.4zM750.5 626.6h1.4v1.4h-1.4zM747 626.6h1.4v1.4h-1.4zM743.5 626.6h1.4v1.4h-1.4zM740 626.6h1.4v1.4h-1.4zM737 626.6h1.4v1.4h-1.4zM733.5 626.6h1.4v1.4h-1.4zM730 626.6h1.4v1.4h-1.4zM726.5 626.6h1.4v1.4h-1.4zM723 626.6h1.4v1.4h-1.4zM720 626.6h1.4v1.4h-1.4z"/></svg>
<div style="position:absolute;left:601.7px;top:638.63px;font-size:11.6px;line-height:11.6px;color:#111;white-space:nowrap;transform:scaleX(0.97);transform-origin:0 0;-webkit-text-stroke:0.2px #111">Implementation</div>
<div style="position:absolute;left:1063.3px;top:638.63px;font-size:11.6px;line-height:11.6px;color:#111">3</div>
<svg style="position:absolute;left:0;top:0" width="1650" height="972"><path fill="#222" d="M1060 646.6h1.4v1.4h-1.4zM1056.5 646.6h1.4v1.4h-1.4zM1053 646.6h1.4v1.4h-1.4zM1049.5 646.6h1.4v1.4h-1.4zM1046 646.6h1.4v1.4h-1.4zM1043 646.6h1.4v1.4h-1.4zM1039.5 646.6h1.4v1.4h-1.4zM1036 646.6h1.4v1.4h-1.4zM1032.5 646.6h1.4v1.4h-1.4zM1029 646.6h1.4v1.4h-1.4zM1026 646.6h1.4v1.4h-1.4zM1022.5 646.6h1.4v1.4h-1.4zM1019 646.6h1.4v1.4h-1.4zM1015.5 646.6h1.4v1.4h-1.4zM1012 646.6h1.4v1.4h-1.4zM1009 646.6h1.4v1.4h-1.4zM1005.5 646.6h1.4v1.4h-1.4zM1002 646.6h1.4v1.4h-1.4zM998.5 646.6h1.4v1.4h-1.4zM995 646.6h1.4v1.4h-1.4zM992 646.6h1.4v1.4h-1.4zM988.5 646.6h1.4v1.4h-1.4zM985 646.6h1.4v1.4h-1.4zM981.5 646.6h1.4v1.4h-1.4zM978 646.6h1.4v1.4h-1.4zM975 646.6h1.4v1.4h-1.4zM971.5 646.6h1.4v1.4h-1.4zM968 646.6h1.4v1.4h-1.4zM964.5 646.6h1.4v1.4h-1.4zM961 646.6h1.4v1.4h-1.4zM958 646.6h1.4v1.4h-1.4zM954.5 646.6h1.4v1.4h-1.4zM951 646.6h1.4v1.4h-1.4zM947.5 646.6h1.4v1.4h-1.4zM944 646.6h1.4v1.4h-1.4zM941 646.6h1.4v1.4h-1.4zM937.5 646.6h1.4v1.4h-1.4zM934 646.6h1.4v1.4h-1.4zM930.5 646.6h1.4v1.4h-1.4zM927 646.6h1.4v1.4h-1.4zM924 646.6h1.4v1.4h-1.4zM920.5 646.6h1.4v1.4h-1.4zM917 646.6h1.4v1.4h-1.4zM913.5 646.6h1.4v1.4h-1.4zM910 646.6h1.4v1.4h-1.4zM907 646.6h1.4v1.4h-1.4zM903.5 646.6h1.4v1.4h-1.4zM900 646.6h1.4v1.4h-1.4zM896.5 646.6h1.4v1.4h-1.4zM893 646.6h1.4v1.4h-1.4zM890 646.6h1.4v1.4h-1.4zM886.5 646.6h1.4v1.4h-1.4zM883 646.6h1.4v1.4h-1.4zM879.5 646.6h1.4v1.4h-1.4zM876 646.6h1.4v1.4h-1.4zM873 646.6h1.4v1.4h-1.4zM869.5 646.6h1.4v1.4h-1.4zM866 646.6h1.4v1.4h-1.4zM862.5 646.6h1.4v1.4h-1.4zM859 646.6h1.4v1.4h-1.4zM856 646.6h1.4v1.4h-1.4zM852.5 646.6h1.4v1.4h-1.4zM849 646.6h1.4v1.4h-1.4zM845.5 646.6h1.4v1.4h-1.4zM842 646.6h1.4v1.4h-1.4zM839 646.6h1.4v1.4h-1.4zM835.5 646.6h1.4v1.4h-1.4zM832 646.6h1.4v1.4h-1.4zM828.5 646.6h1.4v1.4h-1.4zM825 646.6h1.4v1.4h-1.4zM822 646.6h1.4v1.4h-1.4zM818.5 646.6h1.4v1.4h-1.4zM815 646.6h1.4v1.4h-1.4zM811.5 646.6h1.4v1.4h-1.4zM808 646.6h1.4v1.4h-1.4zM805 646.6h1.4v1.4h-1.4zM801.5 646.6h1.4v1.4h-1.4zM798 646.6h1.4v1.4h-1.4zM794.5 646.6h1.4v1.4h-1.4zM791 646.6h1.4v1.4h-1.4zM788 646.6h1.4v1.4h-1.4zM784.5 646.6h1.4v1.4h-1.4zM781 646.6h1.4v1.4h-1.4zM777.5 646.6h1.4v1.4h-1.4zM774 646.6h1.4v1.4h-1.4zM771 646.6h1.4v1.4h-1.4zM767.5 646.6h1.4v1.4h-1.4zM764 646.6h1.4v1.4h-1.4zM760.5 646.6h1.4v1.4h-1.4zM757 646.6h1.4v1.4h-1.4zM754 646.6h1.4v1.4h-1.4zM750.5 646.6h1.4v1.4h-1.4zM747 646.6h1.4v1.4h-1.4zM743.5 646.6h1.4v1.4h-1.4zM740 646.6h1.4v1.4h-1.4zM737 646.6h1.4v1.4h-1.4zM733.5 646.6h1.4v1.4h-1.4zM730 646.6h1.4v1.4h-1.4zM726.5 646.6h1.4v1.4h-1.4zM723 646.6h1.4v1.4h-1.4zM720 646.6h1.4v1.4h-1.4zM716.5 646.6h1.4v1.4h-1.4zM713 646.6h1.4v1.4h-1.4zM709.5 646.6h1.4v1.4h-1.4zM706 646.6h1.4v1.4h-1.4zM703 646.6h1.4v1.4h-1.4zM699.5 646.6h1.4v1.4h-1.4zM696 646.6h1.4v1.4h-1.4zM692.5 646.6h1.4v1.4h-1.4zM689 646.6h1.4v1.4h-1.4zM686 646.6h1.4v1.4h-1.4zM682.5 646.6h1.4v1.4h-1.4z"/></svg>
<div style="position:absolute;left:590.5px;top:659.32px;font-size:11.6px;line-height:11.6px;color:#111;white-space:nowrap;transform:scaleX(0.97);transform-origin:0 0;-webkit-text-stroke:0.2px #111">Elaboration</div>
<div style="position:absolute;left:1063.3px;top:659.32px;font-size:11.6px;line-height:11.6px;color:#111">3</div>
<svg style="position:absolute;left:0;top:0" width="1650" height="972"><path fill="#222" d="M1060 667.6h1.4v1.4h-1.4zM1056.5 667.6h1.4v1.4h-1.4zM1053 667.6h1.4v1.4h-1.4zM1049.5 667.6h1.4v1.4h-1.4zM1046 667.6h1.4v1.4h-1.4zM1043 667.6h1.4v1.4h-1.4zM1039.5 667.6h1.4v1.4h-1.4zM1036 667.6h1.4v1.4h-1.4zM1032.5 667.6h1.4v1.4h-1.4zM1029 667.6h1.4v1.4h-1.4zM1026 667.6h1.4v1.4h-1.4zM1022.5 667.6h1.4v1.4h-1.4zM1019 667.6h1.4v1.4h-1.4zM1015.5 667.6h1.4v1.4h-1.4zM1012 667.6h1.4v1.4h-1.4zM1009 667.6h1.4v1.4h-1.4zM1005.5 667.6h1.4v1.4h-1.4zM1002 667.6h1.4v1.4h-1.4zM998.5 667.6h1.4v1.4h-1.4zM995 667.6h1.4v1.4h-1.4zM992 667.6h1.4v1.4h-1.4zM988.5 667.6h1.4v1.4h-1.4zM985 667.6h1.4v1.4h-1.4zM981.5 667.6h1.4v1.4h-1.4zM978 667.6h1.4v1.4h-1.4zM975 667.6h1.4v1.4h-1.4zM971.5 667.6h1.4v1.4h-1.4zM968 667.6h1.4v1.4h-1.4zM964.5 667.6h1.4v1.4h-1.4zM961 667.6h1.4v1.4h-1.4zM958 667.6h1.4v1.4h-1.4zM954.5 667.6h1.4v1.4h-1.4zM951 667.6h1.4v1.4h-1.4zM947.5 667.6h1.4v1.4h-1.4zM944 667.6h1.4v1.4h-1.4zM941 667.6h1.4v1.4h-1.4zM937.5 667.6h1.4v1.4h-1.4zM934 667.6h1.4v1.4h-1.4zM930.5 667.6h1.4v1.4h-1.4zM927 667.6h1.4v1.4h-1.4zM924 667.6h1.4v1.4h-1.4zM920.5 667.6h1.4v1.4h-1.4zM917 667.6h1.4v1.4h-1.4zM913.5 667.6h1.4v1.4h-1.4zM910 667.6h1.4v1.4h-1.4zM907 667.6h1.4v1.4h-1.4zM903.5 667.6h1.4v1.4h-1.4zM900 667.6h1.4v1.4h-1.4zM896.5 667.6h1.4v1.4h-1.4zM893 667.6h1.4v1.4h-1.4zM890 667.6h1.4v1.4h-1.4zM886.5 667.6h1.4v1.4h-1.4zM883 667.6h1.4v1.4h-1.4zM879.5 667.6h1.4v1.4h-1.4zM876 667.6h1.4v1.4h-1.4zM873 667.6h1.4v1.4h-1.4zM869.5 667.6h1.4v1.4h-1.4zM866 667.6h1.4v1.4h-1.4zM862.5 667.6h1.4v1.4h-1.4zM859 667.6h1.4v1.4h-1.4zM856 667.6h1.4v1.4h-1.4zM852.5 667.6h1.4v1.4h-1.4zM849 667.6h1.4v1.4h-1.4zM845.5 667.6h1.4v1.4h-1.4zM842 667.6h1.4v1.4h-1.4zM839 667.6h1.4v1.4h-1.4zM835.5 667.6h1.4v1.4h-1.4zM832 667.6h1.4v1.4h-1.4zM828.5 667.6h1.4v1.4h-1.4zM825 667.6h1.4v1.4h-1.4zM822 667.6h1.4v1.4h-1.4zM818.5 667.6h1.4v1.4h-1.4zM815 667.6h1.4v1.4h-1.4zM811.5 667.6h1.4v1.4h-1.4zM808 667.6h1.4v1.4h-1.4zM805 667.6h1.4v1.4h-1.4zM801.5 667.6h1.4v1.4h-1.4zM798 667.6h1.4v1.4h-1.4zM794.5 667.6h1.4v1.4h-1.4zM791 667.6h1.4v1.4h-1.4zM788 667.6h1.4v1.4h-1.4zM784.5 667.6h1.4v1.4h-1.4zM781 667.6h1.4v1.4h-1.4zM777.5 667.6h1.4v1.4h-1.4zM774 667.6h1.4v1.4h-1.4zM771 667.6h1.4v1.4h-1.4zM767.5 667.6h1.4v1.4h-1.4zM764 667.6h1.4v1.4h-1.4zM760.5 667.6h1.4v1.4h-1.4zM757 667.6h1.4v1.4h-1.4zM754 667.6h1.4v1.4h-1.4zM750.5 667.6h1.4v1.4h-1.4zM747 667.6h1.4v1.4h-1.4zM743.5 667.6h1.4v1.4h-1.4zM740 667.6h1.4v1.4h-1.4zM737 667.6h1.4v1.4h-1.4zM733.5 667.6h1.4v1.4h-1.4zM730 667.6h1.4v1.4h-1.4zM726.5 667.6h1.4v1.4h-1.4zM723 667.6h1.4v1.4h-1.4zM720 667.6h1.4v1.4h-1.4zM716.5 667.6h1.4v1.4h-1.4zM713 667.6h1.4v1.4h-1.4zM709.5 667.6h1.4v1.4h-1.4zM706 667.6h1.4v1.4h-1.4zM703 667.6h1.4v1.4h-1.4zM699.5 667.6h1.4v1.4h-1.4zM696 667.6h1.4v1.4h-1.4zM692.5 667.6h1.4v1.4h-1.4zM689 667.6h1.4v1.4h-1.4zM686 667.6h1.4v1.4h-1.4zM682.5 667.6h1.4v1.4h-1.4zM679 667.6h1.4v1.4h-1.4zM675.5 667.6h1.4v1.4h-1.4zM672 667.6h1.4v1.4h-1.4zM669 667.6h1.4v1.4h-1.4zM665.5 667.6h1.4v1.4h-1.4zM662 667.6h1.4v1.4h-1.4zM658.5 667.6h1.4v1.4h-1.4zM655 667.6h1.4v1.4h-1.4zM652 667.6h1.4v1.4h-1.4z"/></svg>
<div style="position:absolute;left:601.7px;top:680.01px;font-size:11.6px;line-height:11.6px;color:#111;white-space:nowrap;transform:scaleX(0.97);transform-origin:0 0;-webkit-text-stroke:0.2px #111">Asking &quot;How&quot; and &quot;Why&quot;</div>
<div style="position:absolute;left:1063.3px;top:680.01px;font-size:11.6px;line-height:11.6px;color:#111">3</div>
<svg style="position:absolute;left:0;top:0" width="1650" height="972"><path fill="#222" d="M1060 688.6h1.4v1.4h-1.4zM1056.5 688.6h1.4v1.4h-1.4zM1053 688.6h1.4v1.4h-1.4zM1049.5 688.6h1.4v1.4h-1.4zM1046 688.6h1.4v1.4h-1.4zM1043 688.6h1.4v1.4h-1.4zM1039.5 688.6h1.4v1.4h-1.4zM1036 688.6h1.4v1.4h-1.4zM1032.5 688.6h1.4v1.4h-1.4zM1029 688.6h1.4v1.4h-1.4zM1026 688.6h1.4v1.4h-1.4zM1022.5 688.6h1.4v1.4h-1.4zM1019 688.6h1.4v1.4h-1.4zM1015.5 688.6h1.4v1.4h-1.4zM1012 688.6h1.4v1.4h-1.4zM1009 688.6h1.4v1.4h-1.4zM1005.5 688.6h1.4v1.4h-1.4zM1002 688.6h1.4v1.4h-1.4zM998.5 688.6h1.4v1.4h-1.4zM995 688.6h1.4v1.4h-1.4zM992 688.6h1.4v1.4h-1.4zM988.5 688.6h1.4v1.4h-1.4zM985 688.6h1.4v1.4h-1.4zM981.5 688.6h1.4v1.4h-1.4zM978 688.6h1.4v1.4h-1.4zM975 688.6h1.4v1.4h-1.4zM971.5 688.6h1.4v1.4h-1.4zM968 688.6h1.4v1.4h-1.4zM964.5 688.6h1.4v1.4h-1.4zM961 688.6h1.4v1.4h-1.4zM958 688.6h1.4v1.4h-1.4zM954.5 688.6h1.4v1.4h-1.4zM951 688.6h1.4v1.4h-1.4zM947.5 688.6h1.4v1.4h-1.4zM944 688.6h1.4v1.4h-1.4zM941 688.6h1.4v1.4h-1.4zM937.5 688.6h1.4v1.4h-1.4zM934 688.6h1.4v1.4h-1.4zM930.5 688.6h1.4v1.4h-1.4zM927 688.6h1.4v1.4h-1.4zM924 688.6h1.4v1.4h-1.4zM920.5 688.6h1.4v1.4h-1.4zM917 688.6h1.4v1.4h-1.4zM913.5 688.6h1.4v1.4h-1.4zM910 688.6h1.4v1.4h-1.4zM907 688.6h1.4v1.4h-1.4zM903.5 688.6h1.4v1.4h-1.4zM900 688.6h1.4v1.4h-1.4zM896.5 688.6h1.4v1.4h-1.4zM893 688.6h1.4v1.4h-1.4zM890 688.6h1.4v1.4h-1.4zM886.5 688.6h1.4v1.4h-1.4zM883 688.6h1.4v1.4h-1.4zM879.5 688.6h1.4v1.4h-1.4zM876 688.6h1.4v1.4h-1.4zM873 688.6h1.4v1.4h-1.4zM869.5 688.6h1.4v1.4h-1.4zM866 688.6h1.4v1.4h-1.4zM862.5 688.6h1.4v1.4h-1.4zM859 688.6h1.4v1.4h-1.4zM856 688.6h1.4v1.4h-1.4zM852.5 688.6h1.4v1.4h-1.4zM849 688.6h1.4v1.4h-1.4zM845.5 688.6h1.4v1.4h-1.4zM842 688.6h1.4v1.4h-1.4zM839 688.6h1.4v1.4h-1.4zM835.5 688.6h1.4v1.4h-1.4zM832 688.6h1.4v1.4h-1.4zM828.5 688.6h1.4v1.4h-1.4zM825 688.6h1.4v1.4h-1.4zM822 688.6h1.4v1.4h-1.4zM818.5 688.6h1.4v1.4h-1.4zM815 688.6h1.4v1.4h-1.4zM811.5 688.6h1.4v1.4h-1.4zM808 688.6h1.4v1.4h-1.4zM805 688.6h1.4v1.4h-1.4zM801.5 688.6h1.4v1.4h-1.4zM798 688.6h1.4v1.4h-1.4zM794.5 688.6h1.4v1.4h-1.4zM791 688.6h1.4v1.4h-1.4zM788 688.6h1.4v1.4h-1.4zM784.5 688.6h1.4v1.4h-1.4zM781 688.6h1.4v1.4h-1.4zM777.5 688.6h1.4v1.4h-1.4zM774 688.6h1.4v1.4h-1.4zM771 688.6h1.4v1.4h-1.4zM767.5 688.6h1.4v1.4h-1.4zM764 688.6h1.4v1.4h-1.4zM760.5 688.6h1.4v1.4h-1.4zM757 688.6h1.4v1.4h-1.4zM754 688.6h1.4v1.4h-1.4zM750.5 688.6h1.4v1.4h-1.4zM747 688.6h1.4v1.4h-1.4zM743.5 688.6h1.4v1.4h-1.4zM740 688.6h1.4v1.4h-1.4zM737 688.6h1.4v1.4h-1.4zM733.5 688.6h1.4v1.4h-1.4zM730 688.6h1.4v1.4h-1.4zM726.5 688.6h1.4v1.4h-1.4z"/></svg>
<div style="position:absolute;left:601.7px;top:700.70px;font-size:11.6px;line-height:11.6px;color:#111;white-space:nowrap;transform:scaleX(0.97);transform-origin:0 0;-webkit-text-stroke:0.2px #111">Teaching Others</div>
<div style="position:absolute;left:1063.3px;top:700.70px;font-size:11.6px;line-height:11.6px;color:#111">3</div>
<svg style="position:absolute;left:0;top:0" width="1650" height="972"><path fill="#222" d="M1060 709.6h1.4v1.4h-1.4zM1056.5 709.6h1.4v1.4h-1.4zM1053 709.6h1.4v1.4h-1.4zM1049.5 709.6h1.4v1.4h-1.4zM1046 709.6h1.4v1.4h-1.4zM1043 709.6h1.4v1.4h-1.4zM1039.5 709.6h1.4v1.4h-1.4zM1036 709.6h1.4v1.4h-1.4zM1032.5 709.6h1.4v1.4h-1.4zM1029 709.6h1.4v1.4h-1.4zM1026 709.6h1.4v1.4h-1.4zM1022.5 709.6h1.4v1.4h-1.4zM1019 709.6h1.4v1.4h-1.4zM1015.5 709.6h1.4v1.4h-1.4zM1012 709.6h1.4v1.4h-1.4zM1009 709.6h1.4v1.4h-1.4zM1005.5 709.6h1.4v1.4h-1.4zM1002 709.6h1.4v1.4h-1.4zM998.5 709.6h1.4v1.4h-1.4zM995 709.6h1.4v1.4h-1.4zM992 709.6h1.4v1.4h-1.4zM988.5 709.6h1.4v1.4h-1.4zM985 709.6h1.4v1.4h-1.4zM981.5 709.6h1.4v1.4h-1.4zM978 709.6h1.4v1.4h-1.4zM975 709.6h1.4v1.4h-1.4zM971.5 709.6h1.4v1.4h-1.4zM968 709.6h1.4v1.4h-1.4zM964.5 709.6h1.4v1.4h-1.4zM961 709.6h1.4v1.4h-1.4zM958 709.6h1.4v1.4h-1.4zM954.5 709.6h1.4v1.4h-1.4zM951 709.6h1.4v1.4h-1.4zM947.5 709.6h1.4v1.4h-1.4zM944 709.6h1.4v1.4h-1.4zM941 709.6h1.4v1.4h-1.4zM937.5 709.6h1.4v1.4h-1.4zM934 709.6h1.4v1.4h-1.4zM930.5 709.6h1.4v1.4h-1.4zM927 709.6h1.4v1.4h-1.4zM924 709.6h1.4v1.4h-1.4zM920.5 709.6h1.4v1.4h-1.4zM917 709.6h1.4v1.4h-1.4zM913.5 709.6h1.4v1.4h-1.4zM910 709.6h1.4v1.4h-1.4zM907 709.6h1.4v1.4h-1.4zM903.5 709.6h1.4v1.4h-1.4zM900 709.6h1.4v1.4h-1.4zM896.5 709.6h1.4v1.4h-1.4zM893 709.6h1.4v1.4h-1.4zM890 709.6h1.4v1.4h-1.4zM886.5 709.6h1.4v1.4h-1.4zM883 709.6h1.4v1.4h-1.4zM879.5 709.6h1.4v1.4h-1.4zM876 709.6h1.4v1.4h-1.4zM873 709.6h1.4v1.4h-1.4zM869.5 709.6h1.4v1.4h-1.4zM866 709.6h1.4v1.4h-1.4zM862.5 709.6h1.4v1.4h-1.4zM859 709.6h1.4v1.4h-1.4zM856 709.6h1.4v1.4h-1.4zM852.5 709.6h1.4v1.4h-1.4zM849 709.6h1.4v1.4h-1.4zM845.5 709.6h1.4v1.4h-1.4zM842 709.6h1.4v1.4h-1.4zM839 709.6h1.4v1.4h-1.4zM835.5 709.6h1.4v1.4h-1.4zM832 709.6h1.4v1.4h-1.4zM828.5 709.6h1.4v1.4h-1.4zM825 709.6h1.4v1.4h-1.4zM822 709.6h1.4v1.4h-1.4zM818.5 709.6h1.4v1.4h-1.4zM815 709.6h1.4v1.4h-1.4zM811.5 709.6h1.4v1.4h-1.4zM808 709.6h1.4v1.4h-1.4zM805 709.6h1.4v1.4h-1.4zM801.5 709.6h1.4v1.4h-1.4zM798 709.6h1.4v1.4h-1.4zM794.5 709.6h1.4v1.4h-1.4zM791 709.6h1.4v1.4h-1.4zM788 709.6h1.4v1.4h-1.4zM784.5 709.6h1.4v1.4h-1.4zM781 709.6h1.4v1.4h-1.4zM777.5 709.6h1.4v1.4h-1.4zM774 709.6h1.4v1.4h-1.4zM771 709.6h1.4v1.4h-1.4zM767.5 709.6h1.4v1.4h-1.4zM764 709.6h1.4v1.4h-1.4zM760.5 709.6h1.4v1.4h-1.4zM757 709.6h1.4v1.4h-1.4zM754 709.6h1.4v1.4h-1.4zM750.5 709.6h1.4v1.4h-1.4zM747 709.6h1.4v1.4h-1.4zM743.5 709.6h1.4v1.4h-1.4zM740 709.6h1.4v1.4h-1.4zM737 709.6h1.4v1.4h-1.4zM733.5 709.6h1.4v1.4h-1.4zM730 709.6h1.4v1.4h-1.4zM726.5 709.6h1.4v1.4h-1.4zM723 709.6h1.4v1.4h-1.4zM720 709.6h1.4v1.4h-1.4zM716.5 709.6h1.4v1.4h-1.4zM713 709.6h1.4v1.4h-1.4zM709.5 709.6h1.4v1.4h-1.4zM706 709.6h1.4v1.4h-1.4zM703 709.6h1.4v1.4h-1.4zM699.5 709.6h1.4v1.4h-1.4zM696 709.6h1.4v1.4h-1.4zM692.5 709.6h1.4v1.4h-1.4zM689 709.6h1.4v1.4h-1.4zM686 709.6h1.4v1.4h-1.4z"/></svg>
<div style="position:absolute;left:590.5px;top:721.39px;font-size:11.6px;line-height:11.6px;color:#111;white-space:nowrap;transform:scaleX(0.97);transform-origin:0 0;-webkit-text-stroke:0.2px #111">Metacognition</div>
<div style="position:absolute;left:1063.3px;top:721.39px;font-size:11.6px;line-height:11.6px;color:#111">3</div>
<svg style="position:absolute;left:0;top:0" width="1650" height="972"><path fill="#222" d="M1060 729.6h1.4v1.4h-1.4zM1056.5 729.6h1.4v1.4h-1.4zM1053 729.6h1.4v1.4h-1.4zM1049.5 729.6h1.4v1.4h-1.4zM1046 729.6h1.4v1.4h-1.4zM1043 729.6h1.4v1.4h-1.4zM1039.5 729.6h1.4v1.4h-1.4zM1036 729.6h1.4v1.4h-1.4zM1032.5 729.6h1.4v1.4h-1.4zM1029 729.6h1.4v1.4h-1.4zM1026 729.6h1.4v1.4h-1.4zM1022.5 729.6h1.4v1.4h-1.4zM1019 729.6h1.4v1.4h-1.4zM1015.5 729.6h1.4v1.4h-1.4zM1012 729.6h1.4v1.4h-1.4zM1009 729.6h1.4v1.4h-1.4zM1005.5 729.6h1.4v1.4h-1.4zM1002 729.6h1.4v1.4h-1.4zM998.5 729.6h1.4v1.4h-1.4zM995 729.6h1.4v1.4h-1.4zM992 729.6h1.4v1.4h-1.4zM988.5 729.6h1.4v1.4h-1.4zM985 729.6h1.4v1.4h-1.4zM981.5 729.6h1.4v1.4h-1.4zM978 729.6h1.4v1.4h-1.4zM975 729.6h1.4v1.4h-1.4zM971.5 729.6h1.4v1.4h-1.4zM968 729.6h1.4v1.4h-1.4zM964.5 729.6h1.4v1.4h-1.4zM961 729.6h1.4v1.4h-1.4zM958 729.6h1.4v1.4h-1.4zM954.5 729.6h1.4v1.4h-1.4zM951 729.6h1.4v1.4h-1.4zM947.5 729.6h1.4v1.4h-1.4zM944 729.6h1.4v1.4h-1.4zM941 729.6h1.4v1.4h-1.4zM937.5 729.6h1.4v1.4h-1.4zM934 729.6h1.4v1.4h-1.4zM930.5 729.6h1.4v1.4h-1.4zM927 729.6h1.4v1.4h-1.4zM924 729.6h1.4v1.4h-1.4zM920.5 729.6h1.4v1.4h-1.4zM917 729.6h1.4v1.4h-1.4zM913.5 729.6h1.4v1.4h-1.4zM910 729.6h1.4v1.4h-1.4zM907 729.6h1.4v1.4h-1.4zM903.5 729.6h1.4v1.4h-1.4zM900 729.6h1.4v1.4h-1.4zM896.5 729.6h1.4v1.4h-1.4zM893 729.6h1.4v1.4h-1.4zM890 729.6h1.4v1.4h-1.4zM886.5 729.6h1.4v1.4h-1.4zM883 729.6h1.4v1.4h-1.4zM879.5 729.6h1.4v1.4h-1.4zM876 729.6h1.4v1.4h-1.4zM873 729.6h1.4v1.4h-1.4zM869.5 729.6h1.4v1.4h-1.4zM866 729.6h1.4v1.4h-1.4zM862.5 729.6h1.4v1.4h-1.4zM859 729.6h1.4v1.4h-1.4zM856 729.6h1.4v1.4h-1.4zM852.5 729.6h1.4v1.4h-1.4zM849 729.6h1.4v1.4h-1.4zM845.5 729.6h1.4v1.4h-1.4zM842 729.6h1.4v1.4h-1.4zM839 729.6h1.4v1.4h-1.4zM835.5 729.6h1.4v1.4h-1.4zM832 729.6h1.4v1.4h-1.4zM828.5 729.6h1.4v1.4h-1.4zM825 729.6h1.4v1.4h-1.4zM822 729.6h1.4v1.4h-1.4zM818.5 729.6h1.4v1.4h-1.4zM815 729.6h1.4v1.4h-1.4zM811.5 729.6h1.4v1.4h-1.4zM808 729.6h1.4v1.4h-1.4zM805 729.6h1.4v1.4h-1.4zM801.5 729.6h1.4v1.4h-1.4zM798 729.6h1.4v1.4h-1.4zM794.5 729.6h1.4v1.4h-1.4zM791 729.6h1.4v1.4h-1.4zM788 729.6h1.4v1.4h-1.4zM784.5 729.6h1.4v1.4h-1.4zM781 729.6h1.4v1.4h-1.4zM777.5 729.6h1.4v1.4h-1.4zM774 729.6h1.4v1.4h-1.4zM771 729.6h1.4v1.4h-1.4zM767.5 729.6h1.4v1.4h-1.4zM764 729.6h1.4v1.4h-1.4zM760.5 729.6h1.4v1.4h-1.4zM757 729.6h1.4v1.4h-1.4zM754 729.6h1.4v1.4h-1.4zM750.5 729.6h1.4v1.4h-1.4zM747 729.6h1.4v1.4h-1.4zM743.5 729.6h1.4v1.4h-1.4zM740 729.6h1.4v1.4h-1.4zM737 729.6h1.4v1.4h-1.4zM733.5 729.6h1.4v1.4h-1.4zM730 729.6h1.4v1.4h-1.4zM726.5 729.6h1.4v1.4h-1.4zM723 729.6h1.4v1.4h-1.4zM720 729.6h1.4v1.4h-1.4zM716.5 729.6h1.4v1.4h-1.4zM713 729.6h1.4v1.4h-1.4zM709.5 729.6h1.4v1.4h-1.4zM706 729.6h1.4v1.4h-1.4zM703 729.6h1.4v1.4h-1.4zM699.5 729.6h1.4v1.4h-1.4zM696 729.6h1.4v1.4h-1.4zM692.5 729.6h1.4v1.4h-1.4zM689 729.6h1.4v1.4h-1.4zM686 729.6h1.4v1.4h-1.4zM682.5 729.6h1.4v1.4h-1.4zM679 729.6h1.4v1.4h-1.4zM675.5 729.6h1.4v1.4h-1.4zM672 729.6h1.4v1.4h-1.4zM669 729.6h1.4v1.4h-1.4zM665.5 729.6h1.4v1.4h-1.4z"/></svg>
<div style="position:absolute;left:601.7px;top:742.08px;font-size:11.6px;line-height:11.6px;color:#111;white-space:nowrap;transform:scaleX(0.97);transform-origin:0 0;-webkit-text-stroke:0.2px #111">Self-Assessment</div>
<div style="position:absolute;left:1063.3px;top:742.08px;font-size:11.6px;line-height:11.6px;color:#111">3</div>
<svg style="position:absolute;left:0;top:0" width="1650" height="972"><path fill="#222" d="M1060 750.6h1.4v1.4h-1.4zM1056.5 750.6h1.4v1.4h-1.4zM1053 750.6h1.4v1.4h-1.4zM1049.5 750.6h1.4v1.4h-1.4zM1046 750.6h1.4v1.4h-1.4zM1043 750.6h1.4v1.4h-1.4zM1039.5 750.6h1.4v1.4h-1.4zM1036 750.6h1.4v1.4h-1.4zM1032.5 750.6h1.4v1.4h-1.4zM1029 750.6h1.4v1.4h-1.4zM1026 750.6h1.4v1.4h-1.4zM1022.5 750.6h1.4v1.4h-1.4zM1019 750.6h1.4v1.4h-1.4zM1015.5 750.6h1.4v1.4h-1.4zM1012 750.6h1.4v1.4h-1.4zM1009 750.6h1.4v1.4h-1.4zM1005.5 750.6h1.4v1.4h-1.4zM1002 750.6h1.4v1.4h-1.4zM998.5 750.6h1.4v1.4h-1.4zM995 750.6h1.4v1.4h-1.4zM992 750.6h1.4v1.4h-1.4zM988.5 750.6h1.4v1.4h-1.4zM985 750.6h1.4v1.4h-1.4zM981.5 750.6h1.4v1.4h-1.4zM978 750.6h1.4v1.4h-1.4zM975 750.6h1.4v1.4h-1.4zM971.5 750.6h1.4v1.4h-1.4zM968 750.6h1.4v1.4h-1.4zM964.5 750.6h1.4v1.4h-1.4zM961 750.6h1.4v1.4h-1.4zM958 750.6h1.4v1.4h-1.4zM954.5 750.6h1.4v1.4h-1.4zM951 750.6h1.4v1.4h-1.4zM947.5 750.6h1.4v1.4h-1.4zM944 750.6h1.4v1.4h-1.4zM941 750.6h1.4v1.4h-1.4zM937.5 750.6h1.4v1.4h-1.4zM934 750.6h1.4v1.4h-1.4zM930.5 750.6h1.4v1.4h-1.4zM927 750.6h1.4v1.4h-1.4zM924 750.6h1.4v1.4h-1.4zM920.5 750.6h1.4v1.4h-1.4zM917 750.6h1.4v1.4h-1.4zM913.5 750.6h1.4v1.4h-1.4zM910 750.6h1.4v1.4h-1.4zM907 750.6h1.4v1.4h-1.4zM903.5 750.6h1.4v1.4h-1.4zM900 750.6h1.4v1.4h-1.4zM896.5 750.6h1.4v1.4h-1.4zM893 750.6h1.4v1.4h-1.4zM890 750.6h1.4v1.4h-1.4zM886.5 750.6h1.4v1.4h-1.4zM883 750.6h1.4v1.4h-1.4zM879.5 750.6h1.4v1.4h-1.4zM876 750.6h1.4v1.4h-1.4zM873 750.6h1.4v1.4h-1.4zM869.5 750.6h1.4v1.4h-1.4zM866 750.6h1.4v1.4h-1.4zM862.5 750.6h1.4v1.4h-1.4zM859 750.6h1.4v1.4h-1.4zM856 750.6h1.4v1.4h-1.4zM852.5 750.6h1.4v1.4h-1.4zM849 750.6h1.4v1.4h-1.4zM845.5 750.6h1.4v1.4h-1.4zM842 750.6h1.4v1.4h-1.4zM839 750.6h1.4v1.4h-1.4zM835.5 750.6h1.4v1.4h-1.4zM832 750.6h1.4v1.4h-1.4zM828.5 750.6h1.4v1.4h-1.4zM825 750.6h1.4v1.4h-1.4zM822 750.6h1.4v1.4h-1.4zM818.5 750.6h1.4v1.4h-1.4zM815 750.6h1.4v1.4h-1.4zM811.5 750.6h1.4v1.4h-1.4zM808 750.6h1.4v1.4h-1.4zM805 750.6h1.4v1.4h-1.4zM801.5 750.6h1.4v1.4h-1.4zM798 750.6h1.4v1.4h-1.4zM794.5 750.6h1.4v1.4h-1.4zM791 750.6h1.4v1.4h-1.4zM788 750.6h1.4v1.4h-1.4zM784.5 750.6h1.4v1.4h-1.4zM781 750.6h1.4v1.4h-1.4zM777.5 750.6h1.4v1.4h-1.4zM774 750.6h1.4v1.4h-1.4zM771 750.6h1.4v1.4h-1.4zM767.5 750.6h1.4v1.4h-1.4zM764 750.6h1.4v1.4h-1.4zM760.5 750.6h1.4v1.4h-1.4zM757 750.6h1.4v1.4h-1.4zM754 750.6h1.4v1.4h-1.4zM750.5 750.6h1.4v1.4h-1.4zM747 750.6h1.4v1.4h-1.4zM743.5 750.6h1.4v1.4h-1.4zM740 750.6h1.4v1.4h-1.4zM737 750.6h1.4v1.4h-1.4zM733.5 750.6h1.4v1.4h-1.4zM730 750.6h1.4v1.4h-1.4zM726.5 750.6h1.4v1.4h-1.4zM723 750.6h1.4v1.4h-1.4zM720 750.6h1.4v1.4h-1.4zM716.5 750.6h1.4v1.4h-1.4zM713 750.6h1.4v1.4h-1.4zM709.5 750.6h1.4v1.4h-1.4zM706 750.6h1.4v1.4h-1.4zM703 750.6h1.4v1.4h-1.4zM699.5 750.6h1.4v1.4h-1.4zM696 750.6h1.4v1.4h-1.4zM692.5 750.6h1.4v1.4h-1.4zM689 750.6h1.4v1.4h-1.4z"/></svg>
<div style="position:absolute;left:601.7px;top:762.77px;font-size:11.6px;line-height:11.6px;color:#111;white-space:nowrap;transform:scaleX(0.97);transform-origin:0 0;-webkit-text-stroke:0.2px #111">Setting Goals</div>
<div style="position:absolute;left:1063.3px;top:762.77px;font-size:11.6px;line-height:11.6px;color:#111">3</div>
<svg style="position:absolute;left:0;top:0" width="1650" height="972"><path fill="#222" d="M1060 771.6h1.4v1.4h-1.4zM1056.5 771.6h1.4v1.4h-1.4zM1053 771.6h1.4v1.4h-1.4zM1049.5 771.6h1.4v1.4h-1.4zM1046 771.6h1.4v1.4h-1.4zM1043 771.6h1.4v1.4h-1.4zM1039.5 771.6h1.4v1.4h-1.4zM1036 771.6h1.4v1.4h-1.4zM1032.5 771.6h1.4v1.4h-1.4zM1029 771.6h1.4v1.4h-1.4zM1026 771.6h1.4v1.4h-1.4zM1022.5 771.6h1.4v1.4h-1.4zM1019 771.6h1.4v1.4h-1.4zM1015.5 771.6h1.4v1.4h-1.4zM1012 771.6h1.4v1.4h-1.4zM1009 771.6h1.4v1.4h-1.4zM1005.5 771.6h1.4v1.4h-1.4zM1002 771.6h1.4v1.4h-1.4zM998.5 771.6h1.4v1.4h-1.4zM995 771.6h1.4v1.4h-1.4zM992 771.6h1.4v1.4h-1.4zM988.5 771.6h1.4v1.4h-1.4zM985 771.6h1.4v1.4h-1.4zM981.5 771.6h1.4v1.4h-1.4zM978 771.6h1.4v1.4h-1.4zM975 771.6h1.4v1.4h-1.4zM971.5 771.6h1.4v1.4h-1.4zM968 771.6h1.4v1.4h-1.4zM964.5 771.6h1.4v1.4h-1.4zM961 771.6h1.4v1.4h-1.4zM958 771.6h1.4v1.4h-1.4zM954.5 771.6h1.4v1.4h-1.4zM951 771.6h1.4v1.4h-1.4zM947.5 771.6h1.4v1.4h-1.4zM944 771.6h1.4v1.4h-1.4zM941 771.6h1.4v1.4h-1.4zM937.5 771.6h1.4v1.4h-1.4zM934 771.6h1.4v1.4h-1.4zM930.5 771.6h1.4v1.4h-1.4zM927 771.6h1.4v1.4h-1.4zM924 771.6h1.4v1.4h-1.4zM920.5 771.6h1.4v1.4h-1.4zM917 771.6h1.4v1.4h-1.4zM913.5 771.6h1.4v1.4h-1.4zM910 771.6h1.4v1.4h-1.4zM907 771.6h1.4v1.4h-1.4zM903.5 771.6h1.4v1.4h-1.4zM900 771.6h1.4v1.4h-1.4zM896.5 771.6h1.4v1.4h-1.4zM893 771.6h1.4v1.4h-1.4zM890 771.6h1.4v1.4h-1.4zM886.5 771.6h1.4v1.4h-1.4zM883 771.6h1.4v1.4h-1.4zM879.5 771.6h1.4v1.4h-1.4zM876 771.6h1.4v1.4h-1.4zM873 771.6h1.4v1.4h-1.4zM869.5 771.6h1.4v1.4h-1.4zM866 771.6h1.4v1.4h-1.4zM862.5 771.6h1.4v1.4h-1.4zM859 771.6h1.4v1.4h-1.4zM856 771.6h1.4v1.4h-1.4zM852.5 771.6h1.4v1.4h-1.4zM849 771.6h1.4v1.4h-1.4zM845.5 771.6h1.4v1.4h-1.4zM842 771.6h1.4v1.4h-1.4zM839 771.6h1.4v1.4h-1.4zM835.5 771.6h1.4v1.4h-1.4zM832 771.6h1.4v1.4h-1.4zM828.5 771.6h1.4v1.4h-1.4zM825 771.6h1.4v1.4h-1.4zM822 771.6h1.4v1.4h-1.4zM818.5 771.6h1.4v1.4h-1.4zM815 771.6h1.4v1.4h-1.4zM811.5 771.6h1.4v1.4h-1.4zM808 771.6h1.4v1.4h-1.4zM805 771.6h1.4v1.4h-1.4zM801.5 771.6h1.4v1.4h-1.4zM798 771.6h1.4v1.4h-1.4zM794.5 771.6h1.4v1.4h-1.4zM791 771.6h1.4v1.4h-1.4zM788 771.6h1.4v1.4h-1.4zM784.5 771.6h1.4v1.4h-1.4zM781 771.6h1.4v1.4h-1.4zM777.5 771.6h1.4v1.4h-1.4zM774 771.6h1.4v1.4h-1.4zM771 771.6h1.4v1.4h-1.4zM767.5 771.6h1.4v1.4h-1.4zM764 771.6h1.4v1.4h-1.4zM760.5 771.6h1.4v1.4h-1.4zM757 771.6h1.4v1.4h-1.4zM754 771.6h1.4v1.4h-1.4zM750.5 771.6h1.4v1.4h-1.4zM747 771.6h1.4v1.4h-1.4zM743.5 771.6h1.4v1.4h-1.4zM740 771.6h1.4v1.4h-1.4zM737 771.6h1.4v1.4h-1.4zM733.5 771.6h1.4v1.4h-1.4zM730 771.6h1.4v1.4h-1.4zM726.5 771.6h1.4v1.4h-1.4zM723 771.6h1.4v1.4h-1.4zM720 771.6h1.4v1.4h-1.4zM716.5 771.6h1.4v1.4h-1.4zM713 771.6h1.4v1.4h-1.4zM709.5 771.6h1.4v1.4h-1.4zM706 771.6h1.4v1.4h-1.4zM703 771.6h1.4v1.4h-1.4zM699.5 771.6h1.4v1.4h-1.4zM696 771.6h1.4v1.4h-1.4zM692.5 771.6h1.4v1.4h-1.4zM689 771.6h1.4v1.4h-1.4zM686 771.6h1.4v1.4h-1.4zM682.5 771.6h1.4v1.4h-1.4zM679 771.6h1.4v1.4h-1.4zM675.5 771.6h1.4v1.4h-1.4zM672 771.6h1.4v1.4h-1.4z"/></svg>
<div style="position:absolute;left:590.5px;top:783.46px;font-size:11.6px;line-height:11.6px;color:#111;white-space:nowrap;transform:scaleX(0.97);transform-origin:0 0;-webkit-text-stroke:0.2px #111">Use of Technology</div>
<div style="position:absolute;left:1063.3px;top:783.46px;font-size:11.6px;line-height:11.6px;color:#111">3</div>
<svg style="position:absolute;left:0;top:0" width="1650" height="972"><path fill="#222" d="M1060 791.6h1.4v1.4h-1.4zM1056.5 791.6h1.4v1.4h-1.4zM1053 791.6h1.4v1.4h-1.4zM1049.5 791.6h1.4v1.4h-1.4zM1046 791.6h1.4v1.4h-1.4zM1043 791.6h1.4v1.4h-1.4zM1039.5 791.6h1.4v1.4h-1.4zM1036 791.6h1.4v1.4h-1.4zM1032.5 791.6h1.4v1.4h-1.4zM1029 791.6h1.4v1.4h-1.4zM1026 791.6h1.4v1.4h-1.4zM1022.5 791.6h1.4v1.4h-1.4zM1019 791.6h1.4v1.4h-1.4zM1015.5 791.6h1.4v1.4h-1.4zM1012 791.6h1.4v1.4h-1.4zM1009 791.6h1.4v1.4h-1.4zM1005.5 791.6h1.4v1.4h-1.4zM1002 791.6h1.4v1.4h-1.4zM998.5 791.6h1.4v1.4h-1.4zM995 791.6h1.4v1.4h-1.4zM992 791.6h1.4v1.4h-1.4zM988.5 791.6h1.4v1.4h-1.4zM985 791.6h1.4v1.4h-1.4zM981.5 791.6h1.4v1.4h-1.4zM978 791.6h1.4v1.4h-1.4zM975 791.6h1.4v1.4h-1.4zM971.5 791.6h1.4v1.4h-1.4zM968 791.6h1.4v1.4h-1.4zM964.5 791.6h1.4v1.4h-1.4zM961 791.6h1.4v1.4h-1.4zM958 791.6h1.4v1.4h-1.4zM954.5 791.6h1.4v1.4h-1.4zM951 791.6h1.4v1.4h-1.4zM947.5 791.6h1.4v1.4h-1.4zM944 791.6h1.4v1.4h-1.4zM941 791.6h1.4v1.4h-1.4zM937.5 791.6h1.4v1.4h-1.4zM934 791.6h1.4v1.4h-1.4zM930.5 791.6h1.4v1.4h-1.4zM927 791.6h1.4v1.4h-1.4zM924 791.6h1.4v1.4h-1.4zM920.5 791.6h1.4v1.4h-1.4zM917 791.6h1.4v1.4h-1.4zM913.5 791.6h1.4v1.4h-1.4zM910 791.6h1.4v1.4h-1.4zM907 791.6h1.4v1.4h-1.4zM903.5 791.6h1.4v1.4h-1.4zM900 791.6h1.4v1.4h-1.4zM896.5 791.6h1.4v1.4h-1.4zM893 791.6h1.4v1.4h-1.4zM890 791.6h1.4v1.4h-1.4zM886.5 791.6h1.4v1.4h-1.4zM883 791.6h1.4v1.4h-1.4zM879.5 791.6h1.4v1.4h-1.4zM876 791.6h1.4v1.4h-1.4zM873 791.6h1.4v1.4h-1.4zM869.5 791.6h1.4v1.4h-1.4zM866 791.6h1.4v1.4h-1.4zM862.5 791.6h1.4v1.4h-1.4zM859 791.6h1.4v1.4h-1.4zM856 791.6h1.4v1.4h-1.4zM852.5 791.6h1.4v1.4h-1.4zM849 791.6h1.4v1.4h-1.4zM845.5 791.6h1.4v1.4h-1.4zM842 791.6h1.4v1.4h-1.4zM839 791.6h1.4v1.4h-1.4zM835.5 791.6h1.4v1.4h-1.4zM832 791.6h1.4v1.4h-1.4zM828.5 791.6h1.4v1.4h-1.4zM825 791.6h1.4v1.4h-1.4zM822 791.6h1.4v1.4h-1.4zM818.5 791.6h1.4v1.4h-1.4zM815 791.6h1.4v1.4h-1.4zM811.5 791.6h1.4v1.4h-1.4zM808 791.6h1.4v1.4h-1.4zM805 791.6h1.4v1.4h-1.4zM801.5 791.6h1.4v1.4h-1.4zM798 791.6h1.4v1.4h-1.4zM794.5 791.6h1.4v1.4h-1.4zM791 791.6h1.4v1.4h-1.4zM788 791.6h1.4v1.4h-1.4zM784.5 791.6h1.4v1.4h-1.4zM781 791.6h1.4v1.4h-1.4zM777.5 791.6h1.4v1.4h-1.4zM774 791.6h1.4v1.4h-1.4zM771 791.6h1.4v1.4h-1.4zM767.5 791.6h1.4v1.4h-1.4zM764 791.6h1.4v1.4h-1.4zM760.5 791.6h1.4v1.4h-1.4zM757 791.6h1.4v1.4h-1.4zM754 791.6h1.4v1.4h-1.4zM750.5 791.6h1.4v1.4h-1.4zM747 791.6h1.4v1.4h-1.4zM743.5 791.6h1.4v1.4h-1.4zM740 791.6h1.4v1.4h-1.4zM737 791.6h1.4v1.4h-1.4zM733.5 791.6h1.4v1.4h-1.4zM730 791.6h1.4v1.4h-1.4zM726.5 791.6h1.4v1.4h-1.4zM723 791.6h1.4v1.4h-1.4zM720 791.6h1.4v1.4h-1.4zM716.5 791.6h1.4v1.4h-1.4zM713 791.6h1.4v1.4h-1.4zM709.5 791.6h1.4v1.4h-1.4zM706 791.6h1.4v1.4h-1.4zM703 791.6h1.4v1.4h-1.4zM699.5 791.6h1.4v1.4h-1.4zM696 791.6h1.4v1.4h-1.4zM692.5 791.6h1.4v1.4h-1.4zM689 791.6h1.4v1.4h-1.4zM686 791.6h1.4v1.4h-1.4z"/></svg>
<div style="position:absolute;left:601.7px;top:804.15px;font-size:11.6px;line-height:11.6px;color:#111;white-space:nowrap;transform:scaleX(0.97);transform-origin:0 0;-webkit-text-stroke:0.2px #111">Online Resources</div>
<div style="position:absolute;left:1063.3px;top:804.15px;font-size:11.6px;line-height:11.6px;color:#111">4</div>
<svg style="position:absolute;left:0;top:0" width="1650" height="972"><path fill="#222" d="M1060 812.6h1.4v1.4h-1.4zM1056.5 812.6h1.4v1.4h-1.4zM1053 812.6h1.4v1.4h-1.4zM1049.5 812.6h1.4v1.4h-1.4zM1046 812.6h1.4v1.4h-1.4zM1043 812.6h1.4v1.4h-1.4zM1039.5 812.6h1.4v1.4h-1.4zM1036 812.6h1.4v1.4h-1.4zM1032.5 812.6h1.4v1.4h-1.4zM1029 812.6h1.4v1.4h-1.4zM1026 812.6h1.4v1.4h-1.4zM1022.5 812.6h1.4v1.4h-1.4zM1019 812.6h1.4v1.4h-1.4zM1015.5 812.6h1.4v1.4h-1.4zM1012 812.6h1.4v1.4h-1.4zM1009 812.6h1.4v1.4h-1.4zM1005.5 812.6h1.4v1.4h-1.4zM1002 812.6h1.4v1.4h-1.4zM998.5 812.6h1.4v1.4h-1.4zM995 812.6h1.4v1.4h-1.4zM992 812.6h1.4v1.4h-1.4zM988.5 812.6h1.4v1.4h-1.4zM985 812.6h1.4v1.4h-1.4zM981.5 812.6h1.4v1.4h-1.4zM978 812.6h1.4v1.4h-1.4zM975 812.6h1.4v1.4h-1.4zM971.5 812.6h1.4v1.4h-1.4zM968 812.6h1.4v1.4h-1.4zM964.5 812.6h1.4v1.4h-1.4zM961 812.6h1.4v1.4h-1.4zM958 812.6h1.4v1.4h-1.4zM954.5 812.6h1.4v1.4h-1.4zM951 812.6h1.4v1.4h-1.4zM947.5 812.6h1.4v1.4h-1.4zM944 812.6h1.4v1.4h-1.4zM941 812.6h1.4v1.4h-1.4zM937.5 812.6h1.4v1.4h-1.4zM934 812.6h1.4v1.4h-1.4zM930.5 812.6h1.4v1.4h-1.4zM927 812.6h1.4v1.4h-1.4zM924 812.6h1.4v1.4h-1.4zM920.5 812.6h1.4v1.4h-1.4zM917 812.6h1.4v1.4h-1.4zM913.5 812.6h1.4v1.4h-1.4zM910 812.6h1.4v1.4h-1.4zM907 812.6h1.4v1.4h-1.4zM903.5 812.6h1.4v1.4h-1.4zM900 812.6h1.4v1.4h-1.4zM896.5 812.6h1.4v1.4h-1.4zM893 812.6h1.4v1.4h-1.4zM890 812.6h1.4v1.4h-1.4zM886.5 812.6h1.4v1.4h-1.4zM883 812.6h1.4v1.4h-1.4zM879.5 812.6h1.4v1.4h-1.4zM876 812.6h1.4v1.4h-1.4zM873 812.6h1.4v1.4h-1.4zM869.5 812.6h1.4v1.4h-1.4zM866 812.6h1.4v1.4h-1.4zM862.5 812.6h1.4v1.4h-1.4zM859 812.6h1.4v1.4h-1.4zM856 812.6h1.4v1.4h-1.4zM852.5 812.6h1.4v1.4h-1.4zM849 812.6h1.4v1.4h-1.4zM845.5 812.6h1.4v1.4h-1.4zM842 812.6h1.4v1.4h-1.4zM839 812.6h1.4v1.4h-1.4zM835.5 812.6h1.4v1.4h-1.4zM832 812.6h1.4v1.4h-1.4zM828.5 812.6h1.4v1.4h-1.4zM825 812.6h1.4v1.4h-1.4zM822 812.6h1.4v1.4h-1.4zM818.5 812.6h1.4v1.4h-1.4zM815 812.6h1.4v1.4h-1.4zM811.5 812.6h1.4v1.4h-1.4zM808 812.6h1.4v1.4h-1.4zM805 812.6h1.4v1.4h-1.4zM801.5 812.6h1.4v1.4h-1.4zM798 812.6h1.4v1.4h-1.4zM794.5 812.6h1.4v1.4h-1.4zM791 812.6h1.4v1.4h-1.4zM788 812.6h1.4v1.4h-1.4zM784.5 812.6h1.4v1.4h-1.4zM781 812.6h1.4v1.4h-1.4zM777.5 812.6h1.4v1.4h-1.4zM774 812.6h1.4v1.4h-1.4zM771 812.6h1.4v1.4h-1.4zM767.5 812.6h1.4v1.4h-1.4zM764 812.6h1.4v1.4h-1.4zM760.5 812.6h1.4v1.4h-1.4zM757 812.6h1.4v1.4h-1.4zM754 812.6h1.4v1.4h-1.4zM750.5 812.6h1.4v1.4h-1.4zM747 812.6h1.4v1.4h-1.4zM743.5 812.6h1.4v1.4h-1.4zM740 812.6h1.4v1.4h-1.4zM737 812.6h1.4v1.4h-1.4zM733.5 812.6h1.4v1.4h-1.4zM730 812.6h1.4v1.4h-1.4zM726.5 812.6h1.4v1.4h-1.4zM723 812.6h1.4v1.4h-1.4zM720 812.6h1.4v1.4h-1.4zM716.5 812.6h1.4v1.4h-1.4zM713 812.6h1.4v1.4h-1.4zM709.5 812.6h1.4v1.4h-1.4zM706 812.6h1.4v1.4h-1.4zM703 812.6h1.4v1.4h-1.4zM699.5 812.6h1.4v1.4h-1.4zM696 812.6h1.4v1.4h-1.4z"/></svg>
<div style="position:absolute;left:601.7px;top:824.84px;font-size:11.6px;line-height:11.6px;color:#111;white-space:nowrap;transform:scaleX(0.97);transform-origin:0 0;-webkit-text-stroke:0.2px #111">Educational Apps</div>
<div style="position:absolute;left:1063.3px;top:824.84px;font-size:11.6px;line-height:11.6px;color:#111">4</div>
<svg style="position:absolute;left:0;top:0" width="1650" height="972"><path fill="#222" d="M1060 833.6h1.4v1.4h-1.4zM1056.5 833.6h1.4v1.4h-1.4zM1053 833.6h1.4v1.4h-1.4zM1049.5 833.6h1.4v1.4h-1.4zM1046 833.6h1.4v1.4h-1.4zM1043 833.6h1.4v1.4h-1.4zM1039.5 833.6h1.4v1.4h-1.4zM1036 833.6h1.4v1.4h-1.4zM1032.5 833.6h1.4v1.4h-1.4zM1029 833.6h1.4v1.4h-1.4zM1026 833.6h1.4v1.4h-1.4zM1022.5 833.6h1.4v1.4h-1.4zM1019 833.6h1.4v1.4h-1.4zM1015.5 833.6h1.4v1.4h-1.4zM1012 833.6h1.4v1.4h-1.4zM1009 833.6h1.4v1.4h-1.4zM1005.5 833.6h1.4v1.4h-1.4zM1002 833.6h1.4v1.4h-1.4zM998.5 833.6h1.4v1.4h-1.4zM995 833.6h1.4v1.4h-1.4zM992 833.6h1.4v1.4h-1.4zM988.5 833.6h1.4v1.4h-1.4zM985 833.6h1.4v1.4h-1.4zM981.5 833.6h1.4v1.4h-1.4zM978 833.6h1.4v1.4h-1.4zM975 833.6h1.4v1.4h-1.4zM971.5 833.6h1.4v1.4h-1.4zM968 833.6h1.4v1.4h-1.4zM964.5 833.6h1.4v1.4h-1.4zM961 833.6h1.4v1.4h-1.4zM958 833.6h1.4v1.4h-1.4zM954.5 833.6h1.4v1.4h-1.4zM951 833.6h1.4v1.4h-1.4zM947.5 833.6h1.4v1.4h-1.4zM944 833.6h1.4v1.4h-1.4zM941 833.6h1.4v1.4h-1.4zM937.5 833.6h1.4v1.4h-1.4zM934 833.6h1.4v1.4h-1.4zM930.5 833.6h1.4v1.4h-1.4zM927 833.6h1.4v1.4h-1.4zM924 833.6h1.4v1.4h-1.4zM920.5 833.6h1.4v1.4h-1.4zM917 833.6h1.4v1.4h-1.4zM913.5 833.6h1.4v1.4h-1.4zM910 833.6h1.4v1.4h-1.4zM907 833.6h1.4v1.4h-1.4zM903.5 833.6h1.4v1.4h-1.4zM900 833.6h1.4v1.4h-1.4zM896.5 833.6h1.4v1.4h-1.4zM893 833.6h1.4v1.4h-1.4zM890 833.6h1.4v1.4h-1.4zM886.5 833.6h1.4v1.4h-1.4zM883 833.6h1.4v1.4h-1.4zM879.5 833.6h1.4v1.4h-1.4zM876 833.6h1.4v1.4h-1.4zM873 833.6h1.4v1.4h-1.4zM869.5 833.6h1.4v1.4h-1.4zM866 833.6h1.4v1.4h-1.4zM862.5 833.6h1.4v1.4h-1.4zM859 833.6h1.4v1.4h-1.4zM856 833.6h1.4v1.4h-1.4zM852.5 833.6h1.4v1.4h-1.4zM849 833.6h1.4v1.4h-1.4zM845.5 833.6h1.4v1.4h-1.4zM842 833.6h1.4v1.4h-1.4zM839 833.6h1.4v1.4h-1.4zM835.5 833.6h1.4v1.4h-1.4zM832 833.6h1.4v1.4h-1.4zM828.5 833.6h1.4v1.4h-1.4zM825 833.6h1.4v1.4h-1.4zM822 833.6h1.4v1.4h-1.4zM818.5 833.6h1.4v1.4h-1.4zM815 833.6h1.4v1.4h-1.4zM811.5 833.6h1.4v1.4h-1.4zM808 833.6h1.4v1.4h-1.4zM805 833.6h1.4v1.4h-1.4zM801.5 833.6h1.4v1.4h-1.4zM798 833.6h1.4v1.4h-1.4zM794.5 833.6h1.4v1.4h-1.4zM791 833.6h1.4v1.4h-1.4zM788 833.6h1.4v1.4h-1.4zM784.5 833.6h1.4v1.4h-1.4zM781 833.6h1.4v1.4h-1.4zM777.5 833.6h1.4v1.4h-1.4zM774 833.6h1.4v1.4h-1.4zM771 833.6h1.4v1.4h-1.4zM767.5 833.6h1.4v1.4h-1.4zM764 833.6h1.4v1.4h-1.4zM760.5 833.6h1.4v1.4h-1.4zM757 833.6h1.4v1.4h-1.4zM754 833.6h1.4v1.4h-1.4zM750.5 833.6h1.4v1.4h-1.4zM747 833.6h1.4v1.4h-1.4zM743.5 833.6h1.4v1.4h-1.4zM740 833.6h1.4v1.4h-1.4zM737 833.6h1.4v1.4h-1.4zM733.5 833.6h1.4v1.4h-1.4zM730 833.6h1.4v1.4h-1.4zM726.5 833.6h1.4v1.4h-1.4zM723 833.6h1.4v1.4h-1.4zM720 833.6h1.4v1.4h-1.4zM716.5 833.6h1.4v1.4h-1.4zM713 833.6h1.4v1.4h-1.4zM709.5 833.6h1.4v1.4h-1.4zM706 833.6h1.4v1.4h-1.4zM703 833.6h1.4v1.4h-1.4zM699.5 833.6h1.4v1.4h-1.4zM696 833.6h1.4v1.4h-1.4zM692.5 833.6h1.4v1.4h-1.4z"/></svg>
<div style="position:absolute;left:590.5px;top:845.53px;font-size:11.6px;line-height:11.6px;color:#111;white-space:nowrap;transform:scaleX(0.97);transform-origin:0 0;-webkit-text-stroke:0.2px #111">Self-Assessment</div>
<div style="position:absolute;left:1063.3px;top:845.53px;font-size:11.6px;line-height:11.6px;color:#111">4</div>
<svg style="position:absolute;left:0;top:0" width="1650" height="972"><path fill="#222" d="M1060 853.6h1.4v1.4h-1.4zM1056.5 853.6h1.4v1.4h-1.4zM1053 853.6h1.4v1.4h-1.4zM1049.5 853.6h1.4v1.4h-1.4zM1046 853.6h1.4v1.4h-1.4zM1043 853.6h1.4v1.4h-1.4zM1039.5 853.6h1.4v1.4h-1.4zM1036 853.6h1.4v1.4h-1.4zM1032.5 853.6h1.4v1.4h-1.4zM1029 853.6h1.4v1.4h-1.4zM1026 853.6h1.4v1.4h-1.4zM1022.5 853.6h1.4v1.4h-1.4zM1019 853.6h1.4v1.4h-1.4zM1015.5 853.6h1.4v1.4h-1.4zM1012 853.6h1.4v1.4h-1.4zM1009 853.6h1.4v1.4h-1.4zM1005.5 853.6h1.4v1.4h-1.4zM1002 853.6h1.4v1.4h-1.4zM998.5 853.6h1.4v1.4h-1.4zM995 853.6h1.4v1.4h-1.4zM992 853.6h1.4v1.4h-1.4zM988.5 853.6h1.4v1.4h-1.4zM985 853.6h1.4v1.4h-1.4zM981.5 853.6h1.4v1.4h-1.4zM978 853.6h1.4v1.4h-1.4zM975 853.6h1.4v1.4h-1.4zM971.5 853.6h1.4v1.4h-1.4zM968 853.6h1.4v1.4h-1.4zM964.5 853.6h1.4v1.4h-1.4zM961 853.6h1.4v1.4h-1.4zM958 853.6h1.4v1.4h-1.4zM954.5 853.6h1.4v1.4h-1.4zM951 853.6h1.4v1.4h-1.4zM947.5 853.6h1.4v1.4h-1.4zM944 853.6h1.4v1.4h-1.4zM941 853.6h1.4v1.4h-1.4zM937.5 853.6h1.4v1.4h-1.4zM934 853.6h1.4v1.4h-1.4zM930.5 853.6h1.4v1.4h-1.4zM927 853.6h1.4v1.4h-1.4zM924 853.6h1.4v1.4h-1.4zM920.5 853.6h1.4v1.4h-1.4zM917 853.6h1.4v1.4h-1.4zM913.5 853.6h1.4v1.4h-1.4zM910 853.6h1.4v1.4h-1.4zM907 853.6h1.4v1.4h-1.4zM903.5 853.6h1.4v1.4h-1.4zM900 853.6h1.4v1.4h-1.4zM896.5 853.6h1.4v1.4h-1.4zM893 853.6h1.4v1.4h-1.4zM890 853.6h1.4v1.4h-1.4zM886.5 853.6h1.4v1.4h-1.4zM883 853.6h1.4v1.4h-1.4zM879.5 853.6h1.4v1.4h-1.4zM876 853.6h1.4v1.4h-1.4zM873 853.6h1.4v1.4h-1.4zM869.5 853.6h1.4v1.4h-1.4zM866 853.6h1.4v1.4h-1.4zM862.5 853.6h1.4v1.4h-1.4zM859 853.6h1.4v1.4h-1.4zM856 853.6h1.4v1.4h-1.4zM852.5 853.6h1.4v1.4h-1.4zM849 853.6h1.4v1.4h-1.4zM845.5 853.6h1.4v1.4h-1.4zM842 853.6h1.4v1.4h-1.4zM839 853.6h1.4v1.4h-1.4zM835.5 853.6h1.4v1.4h-1.4zM832 853.6h1.4v1.4h-1.4zM828.5 853.6h1.4v1.4h-1.4zM825 853.6h1.4v1.4h-1.4zM822 853.6h1.4v1.4h-1.4zM818.5 853.6h1.4v1.4h-1.4zM815 853.6h1.4v1.4h-1.4zM811.5 853.6h1.4v1.4h-1.4zM808 853.6h1.4v1.4h-1.4zM805 853.6h1.4v1.4h-1.4zM801.5 853.6h1.4v1.4h-1.4zM798 853.6h1.4v1.4h-1.4zM794.5 853.6h1.4v1.4h-1.4zM791 853.6h1.4v1.4h-1.4zM788 853.6h1.4v1.4h-1.4zM784.5 853.6h1.4v1.4h-1.4zM781 853.6h1.4v1.4h-1.4zM777.5 853.6h1.4v1.4h-1.4zM774 853.6h1.4v1.4h-1.4zM771 853.6h1.4v1.4h-1.4zM767.5 853.6h1.4v1.4h-1.4zM764 853.6h1.4v1.4h-1.4zM760.5 853.6h1.4v1.4h-1.4zM757 853.6h1.4v1.4h-1.4zM754 853.6h1.4v1.4h-1.4zM750.5 853.6h1.4v1.4h-1.4zM747 853.6h1.4v1.4h-1.4zM743.5 853.6h1.4v1.4h-1.4zM740 853.6h1.4v1.4h-1.4zM737 853.6h1.4v1.4h-1.4zM733.5 853.6h1.4v1.4h-1.4zM730 853.6h1.4v1.4h-1.4zM726.5 853.6h1.4v1.4h-1.4zM723 853.6h1.4v1.4h-1.4zM720 853.6h1.4v1.4h-1.4zM716.5 853.6h1.4v1.4h-1.4zM713 853.6h1.4v1.4h-1.4zM709.5 853.6h1.4v1.4h-1.4zM706 853.6h1.4v1.4h-1.4zM703 853.6h1.4v1.4h-1.4zM699.5 853.6h1.4v1.4h-1.4zM696 853.6h1.4v1.4h-1.4zM692.5 853.6h1.4v1.4h-1.4zM689 853.6h1.4v1.4h-1.4zM686 853.6h1.4v1.4h-1.4zM682.5 853.6h1.4v1.4h-1.4zM679 853.6h1.4v1.4h-1.4z"/></svg>
<div style="position:absolute;left:590.5px;top:866.22px;font-size:11.6px;line-height:11.6px;color:#111;white-space:nowrap;transform:scaleX(0.97);transform-origin:0 0;-webkit-text-stroke:0.2px #111">Setting Goals</div>
<div style="position:absolute;left:1063.3px;top:866.22px;font-size:11.6px;line-height:11.6px;color:#111">4</div>
<svg style="position:absolute;left:0;top:0" width="1650" height="972"><path fill="#222" d="M1060 874.6h1.4v1.4h-1.4zM1056.5 874.6h1.4v1.4h-1.4zM1053 874.6h1.4v1.4h-1.4zM1049.5 874.6h1.4v1.4h-1.4zM1046 874.6h1.4v1.4h-1.4zM1043 874.6h1.4v1.4h-1.4zM1039.5 874.6h1.4v1.4h-1.4zM1036 874.6h1.4v1.4h-1.4zM1032.5 874.6h1.4v1.4h-1.4zM1029 874.6h1.4v1.4h-1.4zM1026 874.6h1.4v1.4h-1.4zM1022.5 874.6h1.4v1.4h-1.4zM1019 874.6h1.4v1.4h-1.4zM1015.5 874.6h1.4v1.4h-1.4zM1012 874.6h1.4v1.4h-1.4zM1009 874.6h1.4v1.4h-1.4zM1005.5 874.6h1.4v1.4h-1.4zM1002 874.6h1.4v1.4h-1.4zM998.5 874.6h1.4v1.4h-1.4zM995 874.6h1.4v1.4h-1.4zM992 874.6h1.4v1.4h-1.4zM988.5 874.6h1.4v1.4h-1.4zM985 874.6h1.4v1.4h-1.4zM981.5 874.6h1.4v1.4h-1.4zM978 874.6h1.4v1.4h-1.4zM975 874.6h1.4v1.4h-1.4zM971.5 874.6h1.4v1.4h-1.4zM968 874.6h1.4v1.4h-1.4zM964.5 874.6h1.4v1.4h-1.4zM961 874.6h1.4v1.4h-1.4zM958 874.6h1.4v1.4h-1.4zM954.5 874.6h1.4v1.4h-1.4zM951 874.6h1.4v1.4h-1.4zM947.5 874.6h1.4v1.4h-1.4zM944 874.6h1.4v1.4h-1.4zM941 874.6h1.4v1.4h-1.4zM937.5 874.6h1.4v1.4h-1.4zM934 874.6h1.4v1.4h-1.4zM930.5 874.6h1.4v1.4h-1.4zM927 874.6h1.4v1.4h-1.4zM924 874.6h1.4v1.4h-1.4zM920.5 874.6h1.4v1.4h-1.4zM917 874.6h1.4v1.4h-1.4zM913.5 874.6h1.4v1.4h-1.4zM910 874.6h1.4v1.4h-1.4zM907 874.6h1.4v1.4h-1.4zM903.5 874.6h1.4v1.4h-1.4zM900 874.6h1.4v1.4h-1.4zM896.5 874.6h1.4v1.4h-1.4zM893 874.6h1.4v1.4h-1.4zM890 874.6h1.4v1.4h-1.4zM886.5 874.6h1.4v1.4h-1.4zM883 874.6h1.4v1.4h-1.4zM879.5 874.6h1.4v1.4h-1.4zM876 874.6h1.4v1.4h-1.4zM873 874.6h1.4v1.4h-1.4zM869.5 874.6h1.4v1.4h-1.4zM866 874.6h1.4v1.4h-1.4zM862.5 874.6h1.4v1.4h-1.4zM859 874.6h1.4v1.4h-1.4zM856 874.6h1.4v1.4h-1.4zM852.5 874.6h1.4v1.4h-1.4zM849 874.6h1.4v1.4h-1.4zM845.5 874.6h1.4v1.4h-1.4zM842 874.6h1.4v1.4h-1.4zM839 874.6h1.4v1.4h-1.4zM835.5 874.6h1.4v1.4h-1.4zM832 874.6h1.4v1.4h-1.4zM828.5 874.6h1.4v1.4h-1.4zM825 874.6h1.4v1.4h-1.4zM822 874.6h1.4v1.4h-1.4zM818.5 874.6h1.4v1.4h-1.4zM815 874.6h1.4v1.4h-1.4zM811.5 874.6h1.4v1.4h-1.4zM808 874.6h1.4v1.4h-1.4zM805 874.6h1.4v1.4h-1.4zM801.5 874.6h1.4v1.4h-1.4zM798 874.6h1.4v1.4h-1.4zM794.5 874.6h1.4v1.4h-1.4zM791 874.6h1.4v1.4h-1.4zM788 874.6h1.4v1.4h-1.4zM784.5 874.6h1.4v1.4h-1.4zM781 874.6h1.4v1.4h-1.4zM777.5 874.6h1.4v1.4h-1.4zM774 874.6h1.4v1.4h-1.4zM771 874.6h1.4v1.4h-1.4zM767.5 874.6h1.4v1.4h-1.4zM764 874.6h1.4v1.4h-1.4zM760.5 874.6h1.4v1.4h-1.4zM757 874.6h1.4v1.4h-1.4zM754 874.6h1.4v1.4h-1.4zM750.5 874.6h1.4v1.4h-1.4zM747 874.6h1.4v1.4h-1.4zM743.5 874.6h1.4v1.4h-1.4zM740 874.6h1.4v1.4h-1.4zM737 874.6h1.4v1.4h-1.4zM733.5 874.6h1.4v1.4h-1.4zM730 874.6h1.4v1.4h-1.4zM726.5 874.6h1.4v1.4h-1.4zM723 874.6h1.4v1.4h-1.4zM720 874.6h1.4v1.4h-1.4zM716.5 874.6h1.4v1.4h-1.4zM713 874.6h1.4v1.4h-1.4zM709.5 874.6h1.4v1.4h-1.4zM706 874.6h1.4v1.4h-1.4zM703 874.6h1.4v1.4h-1.4zM699.5 874.6h1.4v1.4h-1.4zM696 874.6h1.4v1.4h-1.4zM692.5 874.6h1.4v1.4h-1.4zM689 874.6h1.4v1.4h-1.4zM686 874.6h1.4v1.4h-1.4zM682.5 874.6h1.4v1.4h-1.4zM679 874.6h1.4v1.4h-1.4zM675.5 874.6h1.4v1.4h-1.4zM672 874.6h1.4v1.4h-1.4zM669 874.6h1.4v1.4h-1.4zM665.5 874.6h1.4v1.4h-1.4zM662 874.6h1.4v1.4h-1.4z"/></svg>
<div style="position:absolute;left:590.5px;top:886.91px;font-size:11.6px;line-height:11.6px;color:#111;white-space:nowrap;transform:scaleX(0.97);transform-origin:0 0;-webkit-text-stroke:0.2px #111">Use of Technology</div>
<div style="position:absolute;left:1063.3px;top:886.91px;font-size:11.6px;line-height:11.6px;color:#111">4</div>
<svg style="position:absolute;left:0;top:0" width="1650" height="972"><path fill="#222" d="M1060 895.6h1.4v1.4h-1.4zM1056.5 895.6h1.4v1.4h-1.4zM1053 895.6h1.4v1.4h-1.4zM1049.5 895.6h1.4v1.4h-1.4zM1046 895.6h1.4v1.4h-1.4zM1043 895.6h1.4v1.4h-1.4zM1039.5 895.6h1.4v1.4h-1.4zM1036 895.6h1.4v1.4h-1.4zM1032.5 895.6h1.4v1.4h-1.4zM1029 895.6h1.4v1.4h-1.4zM1026 895.6h1.4v1.4h-1.4zM1022.5 895.6h1.4v1.4h-1.4zM1019 895.6h1.4v1.4h-1.4zM1015.5 895.6h1.4v1.4h-1.4zM1012 895.6h1.4v1.4h-1.4zM1009 895.6h1.4v1.4h-1.4zM1005.5 895.6h1.4v1.4h-1.4zM1002 895.6h1.4v1.4h-1.4zM998.5 895.6h1.4v1.4h-1.4zM995 895.6h1.4v1.4h-1.4zM992 895.6h1.4v1.4h-1.4zM988.5 895.6h1.4v1.4h-1.4zM985 895.6h1.4v1.4h-1.4zM981.5 895.6h1.4v1.4h-1.4zM978 895.6h1.4v1.4h-1.4zM975 895.6h1.4v1.4h-1.4zM971.5 895.6h1.4v1.4h-1.4zM968 895.6h1.4v1.4h-1.4zM964.5 895.6h1.4v1.4h-1.4zM961 895.6h1.4v1.4h-1.4zM958 895.6h1.4v1.4h-1.4zM954.5 895.6h1.4v1.4h-1.4zM951 895.6h1.4v1.4h-1.4zM947.5 895.6h1.4v1.4h-1.4zM944 895.6h1.4v1.4h-1.4zM941 895.6h1.4v1.4h-1.4zM937.5 895.6h1.4v1.4h-1.4zM934 895.6h1.4v1.4h-1.4zM930.5 895.6h1.4v1.4h-1.4zM927 895.6h1.4v1.4h-1.4zM924 895.6h1.4v1.4h-1.4zM920.5 895.6h1.4v1.4h-1.4zM917 895.6h1.4v1.4h-1.4zM913.5 895.6h1.4v1.4h-1.4zM910 895.6h1.4v1.4h-1.4zM907 895.6h1.4v1.4h-1.4zM903.5 895.6h1.4v1.4h-1.4zM900 895.6h1.4v1.4h-1.4zM896.5 895.6h1.4v1.4h-1.4zM893 895.6h1.4v1.4h-1.4zM890 895.6h1.4v1.4h-1.4zM886.5 895.6h1.4v1.4h-1.4zM883 895.6h1.4v1.4h-1.4zM879.5 895.6h1.4v1.4h-1.4zM876 895.6h1.4v1.4h-1.4zM873 895.6h1.4v1.4h-1.4zM869.5 895.6h1.4v1.4h-1.4zM866 895.6h1.4v1.4h-1.4zM862.5 895.6h1.4v1.4h-1.4zM859 895.6h1.4v1.4h-1.4zM856 895.6h1.4v1.4h-1.4zM852.5 895.6h1.4v1.4h-1.4zM849 895.6h1.4v1.4h-1.4zM845.5 895.6h1.4v1.4h-1.4zM842 895.6h1.4v1.4h-1.4zM839 895.6h1.4v1.4h-1.4zM835.5 895.6h1.4v1.4h-1.4zM832 895.6h1.4v1.4h-1.4zM828.5 895.6h1.4v1.4h-1.4zM825 895.6h1.4v1.4h-1.4zM822 895.6h1.4v1.4h-1.4zM818.5 895.6h1.4v1.4h-1.4zM815 895.6h1.4v1.4h-1.4zM811.5 895.6h1.4v1.4h-1.4zM808 895.6h1.4v1.4h-1.4zM805 895.6h1.4v1.4h-1.4zM801.5 895.6h1.4v1.4h-1.4zM798 895.6h1.4v1.4h-1.4zM794.5 895.6h1.4v1.4h-1.4zM791 895.6h1.4v1.4h-1.4zM788 895.6h1.4v1.4h-1.4zM784.5 895.6h1.4v1.4h-1.4zM781 895.6h1.4v1.4h-1.4zM777.5 895.6h1.4v1.4h-1.4zM774 895.6h1.4v1.4h-1.4zM771 895.6h1.4v1.4h-1.4zM767.5 895.6h1.4v1.4h-1.4zM764 895.6h1.4v1.4h-1.4zM760.5 895.6h1.4v1.4h-1.4zM757 895.6h1.4v1.4h-1.4zM754 895.6h1.4v1.4h-1.4zM750.5 895.6h1.4v1.4h-1.4zM747 895.6h1.4v1.4h-1.4zM743.5 895.6h1.4v1.4h-1.4zM740 895.6h1.4v1.4h-1.4zM737 895.6h1.4v1.4h-1.4zM733.5 895.6h1.4v1.4h-1.4zM730 895.6h1.4v1.4h-1.4zM726.5 895.6h1.4v1.4h-1.4zM723 895.6h1.4v1.4h-1.4zM720 895.6h1.4v1.4h-1.4zM716.5 895.6h1.4v1.4h-1.4zM713 895.6h1.4v1.4h-1.4zM709.5 895.6h1.4v1.4h-1.4zM706 895.6h1.4v1.4h-1.4zM703 895.6h1.4v1.4h-1.4zM699.5 895.6h1.4v1.4h-1.4zM696 895.6h1.4v1.4h-1.4zM692.5 895.6h1.4v1.4h-1.4zM689 895.6h1.4v1.4h-1.4zM686 895.6h1.4v1.4h-1.4z"/></svg>
<div style="position:absolute;left:601.7px;top:907.60px;font-size:11.6px;line-height:11.6px;color:#111;white-space:nowrap;transform:scaleX(0.97);transform-origin:0 0;-webkit-text-stroke:0.2px #111">Online Calendars and Task Managers</div>
<div style="position:absolute;left:1063.3px;top:907.60px;font-size:11.6px;line-height:11.6px;color:#111">4</div>
<svg style="position:absolute;left:0;top:0" width="1650" height="972"><path fill="#222" d="M1060 915.6h1.4v1.4h-1.4zM1056.5 915.6h1.4v1.4h-1.4zM1053 915.6h1.4v1.4h-1.4zM1049.5 915.6h1.4v1.4h-1.4zM1046 915.6h1.4v1.4h-1.4zM1043 915.6h1.4v1.4h-1.4zM1039.5 915.6h1.4v1.4h-1.4zM1036 915.6h1.4v1.4h-1.4zM1032.5 915.6h1.4v1.4h-1.4zM1029 915.6h1.4v1.4h-1.4zM1026 915.6h1.4v1.4h-1.4zM1022.5 915.6h1.4v1.4h-1.4zM1019 915.6h1.4v1.4h-1.4zM1015.5 915.6h1.4v1.4h-1.4zM1012 915.6h1.4v1.4h-1.4zM1009 915.6h1.4v1.4h-1.4zM1005.5 915.6h1.4v1.4h-1.4zM1002 915.6h1.4v1.4h-1.4zM998.5 915.6h1.4v1.4h-1.4zM995 915.6h1.4v1.4h-1.4zM992 915.6h1.4v1.4h-1.4zM988.5 915.6h1.4v1.4h-1.4zM985 915.6h1.4v1.4h-1.4zM981.5 915.6h1.4v1.4h-1.4zM978 915.6h1.4v1.4h-1.4zM975 915.6h1.4v1.4h-1.4zM971.5 915.6h1.4v1.4h-1.4zM968 915.6h1.4v1.4h-1.4zM964.5 915.6h1.4v1.4h-1.4zM961 915.6h1.4v1.4h-1.4zM958 915.6h1.4v1.4h-1.4zM954.5 915.6h1.4v1.4h-1.4zM951 915.6h1.4v1.4h-1.4zM947.5 915.6h1.4v1.4h-1.4zM944 915.6h1.4v1.4h-1.4zM941 915.6h1.4v1.4h-1.4zM937.5 915.6h1.4v1.4h-1.4zM934 915.6h1.4v1.4h-1.4zM930.5 915.6h1.4v1.4h-1.4zM927 915.6h1.4v1.4h-1.4zM924 915.6h1.4v1.4h-1.4zM920.5 915.6h1.4v1.4h-1.4zM917 915.6h1.4v1.4h-1.4zM913.5 915.6h1.4v1.4h-1.4zM910 915.6h1.4v1.4h-1.4zM907 915.6h1.4v1.4h-1.4zM903.5 915.6h1.4v1.4h-1.4zM900 915.6h1.4v1.4h-1.4zM896.5 915.6h1.4v1.4h-1.4zM893 915.6h1.4v1.4h-1.4zM890 915.6h1.4v1.4h-1.4zM886.5 915.6h1.4v1.4h-1.4zM883 915.6h1.4v1.4h-1.4zM879.5 915.6h1.4v1.4h-1.4zM876 915.6h1.4v1.4h-1.4zM873 915.6h1.4v1.4h-1.4zM869.5 915.6h1.4v1.4h-1.4zM866 915.6h1.4v1.4h-1.4zM862.5 915.6h1.4v1.4h-1.4zM859 915.6h1.4v1.4h-1.4zM856 915.6h1.4v1.4h-1.4zM852.5 915.6h1.4v1.4h-1.4zM849 915.6h1.4v1.4h-1.4zM845.5 915.6h1.4v1.4h-1.4zM842 915.6h1.4v1.4h-1.4zM839 915.6h1.4v1.4h-1.4zM835.5 915.6h1.4v1.4h-1.4zM832 915.6h1.4v1.4h-1.4zM828.5 915.6h1.4v1.4h-1.4zM825 915.6h1.4v1.4h-1.4zM822 915.6h1.4v1.4h-1.4zM818.5 915.6h1.4v1.4h-1.4zM815 915.6h1.4v1.4h-1.4zM811.5 915.6h1.4v1.4h-1.4zM808 915.6h1.4v1.4h-1.4zM805 915.6h1.4v1.4h-1.4zM801.5 915.6h1.4v1.4h-1.4zM798 915.6h1.4v1.4h-1.4zM794.5 915.6h1.4v1.4h-1.4z"/></svg>
<div style="position:absolute;left:601.7px;top:928.29px;font-size:11.6px;line-height:11.6px;color:#111;white-space:nowrap;transform:scaleX(0.97);transform-origin:0 0;-webkit-text-stroke:0.2px #111">Interactive Tools</div>
<div style="position:absolute;left:1063.3px;top:928.29px;font-size:11.6px;line-height:11.6px;color:#111">5</div>
<svg style="position:absolute;left:0;top:0" width="1650" height="972"><path fill="#222" d="M1060 936.6h1.4v1.4h-1.4zM1056.5 936.6h1.4v1.4h-1.4zM1053 936.6h1.4v1.4h-1.4zM1049.5 936.6h1.4v1.4h-1.4zM1046 936.6h1.4v1.4h-1.4zM1043 936.6h1.4v1.4h-1.4zM1039.5 936.6h1.4v1.4h-1.4zM1036 936.6h1.4v1.4h-1.4zM1032.5 936.6h1.4v1.4h-1.4zM1029 936.6h1.4v1.4h-1.4zM1026 936.6h1.4v1.4h-1.4zM1022.5 936.6h1.4v1.4h-1.4zM1019 936.6h1.4v1.4h-1.4zM1015.5 936.6h1.4v1.4h-1.4zM1012 936.6h1.4v1.4h-1.4zM1009 936.6h1.4v1.4h-1.4zM1005.5 936.6h1.4v1.4h-1.4zM1002 936.6h1.4v1.4h-1.4zM998.5 936.6h1.4v1.4h-1.4zM995 936.6h1.4v1.4h-1.4zM992 936.6h1.4v1.4h-1.4zM988.5 936.6h1.4v1.4h-1.4zM985 936.6h1.4v1.4h-1.4zM981.5 936.6h1.4v1.4h-1.4zM978 936.6h1.4v1.4h-1.4zM975 936.6h1.4v1.4h-1.4zM971.5 936.6h1.4v1.4h-1.4zM968 936.6h1.4v1.4h-1.4zM964.5 936.6h1.4v1.4h-1.4zM961 936.6h1.4v1.4h-1.4zM958 936.6h1.4v1.4h-1.4zM954.5 936.6h1.4v1.4h-1.4zM951 936.6h1.4v1.4h-1.4zM947.5 936.6h1.4v1.4h-1.4zM944 936.6h1.4v1.4h-1.4zM941 936.6h1.4v1.4h-1.4zM937.5 936.6h1.4v1.4h-1.4zM934 936.6h1.4v1.4h-1.4zM930.5 936.6h1.4v1.4h-1.4zM927 936.6h1.4v1.4h-1.4zM924 936.6h1.4v1.4h-1.4zM920.5 936.6h1.4v1.4h-1.4zM917 936.6h1.4v1.4h-1.4zM913.5 936.6h1.4v1.4h-1.4zM910 936.6h1.4v1.4h-1.4zM907 936.6h1.4v1.4h-1.4zM903.5 936.6h1.4v1.4h-1.4zM900 936.6h1.4v1.4h-1.4zM896.5 936.6h1.4v1.4h-1.4zM893 936.6h1.4v1.4h-1.4zM890 936.6h1.4v1.4h-1.4zM886.5 936.6h1.4v1.4h-1.4zM883 936.6h1.4v1.4h-1.4zM879.5 936.6h1.4v1.4h-1.4zM876 936.6h1.4v1.4h-1.4zM873 936.6h1.4v1.4h-1.4zM869.5 936.6h1.4v1.4h-1.4zM866 936.6h1.4v1.4h-1.4zM862.5 936.6h1.4v1.4h-1.4zM859 936.6h1.4v1.4h-1.4zM856 936.6h1.4v1.4h-1.4zM852.5 936.6h1.4v1.4h-1.4zM849 936.6h1.4v1.4h-1.4zM845.5 936.6h1.4v1.4h-1.4zM842 936.6h1.4v1.4h-1.4zM839 936.6h1.4v1.4h-1.4zM835.5 936.6h1.4v1.4h-1.4zM832 936.6h1.4v1.4h-1.4zM828.5 936.6h1.4v1.4h-1.4zM825 936.6h1.4v1.4h-1.4zM822 936.6h1.4v1.4h-1.4zM818.5 936.6h1.4v1.4h-1.4zM815 936.6h1.4v1.4h-1.4zM811.5 936.6h1.4v1.4h-1.4zM808 936.6h1.4v1.4h-1.4zM805 936.6h1.4v1.4h-1.4zM801.5 936.6h1.4v1.4h-1.4zM798 936.6h1.4v1.4h-1.4zM794.5 936.6h1.4v1.4h-1.4zM791 936.6h1.4v1.4h-1.4zM788 936.6h1.4v1.4h-1.4zM784.5 936.6h1.4v1.4h-1.4zM781 936.6h1.4v1.4h-1.4zM777.5 936.6h1.4v1.4h-1.4zM774 936.6h1.4v1.4h-1.4zM771 936.6h1.4v1.4h-1.4zM767.5 936.6h1.4v1.4h-1.4zM764 936.6h1.4v1.4h-1.4zM760.5 936.6h1.4v1.4h-1.4zM757 936.6h1.4v1.4h-1.4zM754 936.6h1.4v1.4h-1.4zM750.5 936.6h1.4v1.4h-1.4zM747 936.6h1.4v1.4h-1.4zM743.5 936.6h1.4v1.4h-1.4zM740 936.6h1.4v1.4h-1.4zM737 936.6h1.4v1.4h-1.4zM733.5 936.6h1.4v1.4h-1.4zM730 936.6h1.4v1.4h-1.4zM726.5 936.6h1.4v1.4h-1.4zM723 936.6h1.4v1.4h-1.4zM720 936.6h1.4v1.4h-1.4zM716.5 936.6h1.4v1.4h-1.4zM713 936.6h1.4v1.4h-1.4zM709.5 936.6h1.4v1.4h-1.4zM706 936.6h1.4v1.4h-1.4zM703 936.6h1.4v1.4h-1.4zM699.5 936.6h1.4v1.4h-1.4zM696 936.6h1.4v1.4h-1.4zM692.5 936.6h1.4v1.4h-1.4zM689 936.6h1.4v1.4h-1.4zM686 936.6h1.4v1.4h-1.4z"/></svg>
<svg style="position:absolute;left:514px;top:290px;" width="20" height="24" viewBox="0 0 20 24" fill="none">
<circle cx="9.7" cy="4.6" r="2.6" stroke="#1e88d8" stroke-width="1.4" fill="#fff"/>
<line x1="9.7" y1="7.2" x2="9.7" y2="21" stroke="#1e88d8" stroke-width="1.4"/>
<path d="M2 12.5 C2.5 18.5 5.8 21.6 9.7 21.6 C13.6 21.6 17 18.5 17.5 12.5" stroke="#1e88d8" stroke-width="1.5" fill="none"/>
<path d="M1.2 10.8 L2 16 L5.2 14 Z M18.3 10.8 L17.5 16 L14.3 14 Z" fill="#1e88d8"/>
</svg>
<svg style="position:absolute;left:0;top:0" width="1650" height="972"><path d="M558.0 403 L568 452 L568 456 L548 456 L548 452 Z" fill="#7030a0"/><path d="M558.0 403 L560.9 416 L555.1 416 Z" fill="#555555"/><rect x="548" y="452" width="20" height="369" fill="#555555"/><circle cx="553.2" cy="453" r="5.2" fill="#7030a0"/><circle cx="562.8" cy="453" r="5.2" fill="#7030a0"/><rect x="548" y="447" width="20" height="6" fill="#7030a0"/><rect x="548" y="821" width="20" height="43.7" fill="#d0d0d0"/><rect x="550.2" y="866" width="15.4" height="13.6" fill="#7030a0"/><path d="M590.8 403 L600.8 452 L600.8 456 L580.8 456 L580.8 452 Z" fill="#7030a0"/><path d="M590.8 403 L593.6999999999999 416 L587.9 416 Z" fill="#555555"/><rect x="580.8" y="452" width="20" height="369" fill="#555555"/><circle cx="586.0" cy="453" r="5.2" fill="#7030a0"/><circle cx="595.5999999999999" cy="453" r="5.2" fill="#7030a0"/><rect x="580.8" y="447" width="20" height="6" fill="#7030a0"/><rect x="580.8" y="821" width="20" height="43.7" fill="#d0d0d0"/><rect x="583.0" y="866" width="15.4" height="13.6" fill="#555555"/><path d="M624.6 403 L634.6 452 L634.6 456 L614.6 456 L614.6 452 Z" fill="#d0d0d0"/><path d="M624.6 403 L627.5 416 L621.7 416 Z" fill="#555555"/><rect x="614.6" y="452" width="20" height="369" fill="#7030a0"/><circle cx="619.8000000000001" cy="453" r="5.2" fill="#d0d0d0"/><circle cx="629.4" cy="453" r="5.2" fill="#d0d0d0"/><rect x="614.6" y="447" width="20" height="6" fill="#d0d0d0"/><rect x="614.6" y="821" width="20" height="43.7" fill="#d0d0d0"/><rect x="616.8000000000001" y="866" width="15.4" height="13.6" fill="#7030a0"/><path d="M652.9 415.5 L660.9 415.5 L666.8 467.7 L647 467.7 Z" fill="#d0d0d0"/><rect x="655.9" y="404" width="2.7" height="12" fill="#555555"/><rect x="647" y="467.7" width="19.8" height="370" fill="#7030a0"/><rect x="650.3" y="837.5" width="13.7" height="41.5" fill="#d0d0d0"/><path d="M668.7 682 Q668.7 677.8 672.6 677.8 Q676.5 677.8 676.5 682 V797 Q676.5 805.6 668 805.6 H647 V787.8 H668.7 Z" fill="#d0d0d0"/></svg>
<div style="position:absolute;left:0px;top:941.5px;width:1650px;height:30.5px;background:#f3f3f3;border-top:1px solid #dcdcdc;box-sizing:border-box"></div>
<div style="position:absolute;left:0px;top:969.5px;width:1650px;height:2.5px;background:#3a3a3a"></div>
<div style="position:absolute;left:15.00px;top:949.90px;font-size:14.3px;line-height:14.3px;color:#424242;font-weight:normal;white-space:nowrap;transform:scaleX(0.9052);transform-origin:0 0;">Page 1 of 8</div>
<div style="position:absolute;left:105.00px;top:949.90px;font-size:14.3px;line-height:14.3px;color:#424242;font-weight:normal;white-space:nowrap;transform:scaleX(0.9403);transform-origin:0 0;">1698 words</div>
<svg style="position:absolute;left:198px;top:947px;" width="21" height="19" viewBox="0 0 21 19" fill="none">
<path d="M1 1.5 H7 C8.5 1.5 9.5 2.5 9.5 3.5 C9.5 2.5 10.5 1.5 12 1.5 H17.5 V9" stroke="#424242" stroke-width="1.4" fill="none"/>
<path d="M1 1.5 V16 H10" stroke="#424242" stroke-width="1.4" fill="none"/>
<path d="M9.5 3.5 V9" stroke="#424242" stroke-width="1.3"/>
<path d="M11 10 L19 18 M19 10 L11 18" stroke="#424242" stroke-width="1.4"/>
</svg>
<div style="position:absolute;left:239.50px;top:949.90px;font-size:14.3px;line-height:14.3px;color:#424242;font-weight:normal;white-space:nowrap;transform:scaleX(0.9096);transform-origin:0 0;">English (United States)</div>
<div style="position:absolute;left:395.00px;top:949.90px;font-size:14.3px;line-height:14.3px;color:#424242;font-weight:normal;white-space:nowrap;transform:scaleX(0.9005);transform-origin:0 0;">Text Predictions: On</div>
<svg style="position:absolute;left:534px;top:946px;" width="21" height="21" viewBox="0 0 21 21" fill="none">
<circle cx="9" cy="3" r="2.2" stroke="#424242" stroke-width="1.3" fill="none"/>
<path d="M1.5 5 C4 7 6 7.5 9 7.5 C12 7.5 14 7 16.5 5" stroke="#424242" stroke-width="1.4" fill="none"/>
<path d="M6 7.5 V12 L4 19.5 M12 7.5 V11" stroke="#424242" stroke-width="1.4" fill="none"/>
<path d="M10.5 15.5 L13 18.5 L19.5 11.5" stroke="#424242" stroke-width="1.5" fill="none"/>
</svg>
<div style="position:absolute;left:557.70px;top:949.90px;font-size:14.3px;line-height:14.3px;color:#424242;font-weight:normal;white-space:nowrap;transform:scaleX(0.9243);transform-origin:0 0;">Accessibility: Good to go</div>
<svg style="position:absolute;left:1197px;top:946px;" width="21" height="21" viewBox="0 0 21 21" fill="none">
<path d="M1 5 V1 H5 M16 1 H20 V5 M1 16 V20 H5 M16 20 H20 V16" stroke="#424242" stroke-width="1.4" fill="none"/>
<path d="M6 4 H12 L15.5 7.5 V17 H6 Z" stroke="#424242" stroke-width="1.4" fill="none" stroke-linejoin="round"/>
<path d="M11.5 4 V8 H15.5" stroke="#424242" stroke-width="1.3" fill="none"/>
</svg>
<div style="position:absolute;left:1220.40px;top:949.90px;font-size:14.3px;line-height:14.3px;color:#424242;font-weight:normal;white-space:nowrap;transform:scaleX(0.8630);transform-origin:0 0;">Focus</div>
<svg style="position:absolute;left:1284px;top:947px;" width="19" height="17" viewBox="0 0 19 17" fill="none">
<path d="M1 1.5 H7 C8.3 1.5 9.5 2.5 9.5 3.5 C9.5 2.5 10.7 1.5 12 1.5 H18 V14.5 H12 C10.7 14.5 9.5 15.3 9.5 16 C9.5 15.3 8.3 14.5 7 14.5 H1 Z" stroke="#424242" stroke-width="1.4" fill="none"/>
<path d="M9.5 3.5 V16 M3.5 5 H7 M3.5 8 H7 M3.5 11 H7 M12 5 H15.5 M12 8 H15.5 M12 11 H15.5" stroke="#424242" stroke-width="1.2"/>
</svg>
<div style="position:absolute;left:1320px;top:942.5px;width:51px;height:27px;background:#dedede"></div>
<svg style="position:absolute;left:1337px;top:947px;" width="17" height="19" viewBox="0 0 17 19" fill="none">
<rect x="1.5" y="1" width="14" height="17" stroke="#424242" stroke-width="1.4" fill="none"/>
<path d="M4.5 5 H12.5 M4.5 8 H12.5 M4.5 11 H12.5 M4.5 14 H12.5" stroke="#424242" stroke-width="1.3"/>
</svg>
<svg style="position:absolute;left:1387px;top:946px;" width="21" height="21" viewBox="0 0 21 21" fill="none">
<path d="M12 17.5 H1.5 V1.5 H15.5 V9" stroke="#424242" stroke-width="1.4" fill="none"/>
<path d="M4 5 H13 M4 8 H10 M4 11 H9 M4 14 H9" stroke="#424242" stroke-width="1.3"/>
<circle cx="15" cy="15" r="5" stroke="#424242" stroke-width="1.3" fill="#f3f3f3"/>
<path d="M10 15 H20 M15 10 C12.5 12.5 12.5 17.5 15 20 C17.5 17.5 17.5 12.5 15 10" stroke="#424242" stroke-width="1.1" fill="none"/>
</svg>
<div style="position:absolute;left:1430px;top:955px;width:9.5px;height:1.3px;background:#555"></div>
<div style="position:absolute;left:1447px;top:955.5px;width:128px;height:1.3px;background:#777"></div>
<div style="position:absolute;left:1510px;top:951px;width:1.3px;height:9px;background:#777"></div>
<div style="position:absolute;left:1482px;top:948.5px;width:6.5px;height:14.5px;background:#666;border-radius:1px"></div>
<div style="position:absolute;left:1581px;top:955px;width:10px;height:1.3px;background:#555"></div>
<div style="position:absolute;left:1585.4px;top:950.5px;width:1.3px;height:10px;background:#555"></div>
<div style="position:absolute;left:1607.40px;top:949.90px;font-size:14.3px;line-height:14.3px;color:#424242;font-weight:normal;white-space:nowrap;transform:scaleX(0.8946);transform-origin:0 0;">62%</div>
<div style="position:absolute;left:1186px;top:204.5px;width:177.5px;height:194px;background:#fff;border:1.5px solid #5c5c5c;border-radius:6px;box-sizing:border-box;box-shadow:0 4px 10px rgba(0,0,0,0.18);overflow:hidden"><div style="position:absolute;left:0;top:0;width:100%;height:38px;background:#f3f3f3"></div></div>
<svg style="position:absolute;left:1199px;top:210px;" width="28" height="28" viewBox="0 0 28 28" fill="none">
<rect x="1.5" y="1.5" width="24.5" height="24.5" stroke="#2a2a2a" stroke-width="1.7" fill="none"/>
<path d="M8 4 V19.5 H23 M4 8 H19.5 V23.5 M8 19.5 L21.5 5.5" stroke="#2a2a2a" stroke-width="1.4" fill="none"/>
</svg>
<div style="position:absolute;left:1234.50px;top:218.03px;font-size:15.2px;line-height:15.2px;color:#242424;font-weight:normal;white-space:nowrap;transform:scaleX(1.0177);transform-origin:0 0;">Crop</div>
<div style="position:absolute;left:1234.5px;top:233px;width:9px;height:1.1px;background:#242424"></div>
<svg style="position:absolute;left:1202px;top:250px;" width="24" height="22" viewBox="0 0 24 22" fill="none">
<path d="M1.5 1 H12 V6.5" stroke="#1e8ad6" stroke-width="0" fill="#5aa4e6"/>
<rect x="1" y="1" width="11.5" height="11.5" fill="#6aaef0" stroke="#1e77c8" stroke-width="1"/>
<circle cx="14.5" cy="13.5" r="6.5" fill="#fff" stroke="#424242" stroke-width="1.5"/>
</svg>
<div style="position:absolute;left:1234.50px;top:255.13px;font-size:15.2px;line-height:15.2px;color:#242424;font-weight:normal;white-space:nowrap;transform:scaleX(1.0108);transform-origin:0 0;">Crop to Shape</div>
<div style="position:absolute;left:1292.5px;top:270.5px;width:8.5px;height:1.1px;background:#242424"></div>
<svg style="position:absolute;left:1344px;top:255px;" width="9" height="14" viewBox="0 0 9 14" fill="none"><path d="M1.5 1.5 L7 7 L1.5 12.5" stroke="#333" stroke-width="1.4" fill="none"/></svg>
<div style="position:absolute;left:1234.50px;top:293.13px;font-size:15.2px;line-height:15.2px;color:#242424;font-weight:normal;white-space:nowrap;transform:scaleX(0.9988);transform-origin:0 0;">Aspect Ratio</div>
<div style="position:absolute;left:1234.5px;top:308.5px;width:10px;height:1.1px;background:#242424"></div>
<svg style="position:absolute;left:1344px;top:293px;" width="9" height="14" viewBox="0 0 9 14" fill="none"><path d="M1.5 1.5 L7 7 L1.5 12.5" stroke="#333" stroke-width="1.4" fill="none"/></svg>
<div style="position:absolute;left:1228.5px;top:320px;width:134px;height:1px;background:#dadada"></div>
<svg style="position:absolute;left:1202px;top:329px;" width="22" height="20" viewBox="0 0 22 20" fill="none">
<path d="M3 1 H1 V18 H3 M19 1 H21 V18 H19" stroke="#333" stroke-width="1.3" fill="none"/>
<path d="M1.5 13 L6 7.5 L11 12.5 L14 10 L20.5 15.5 V17.5 H1.5 Z" fill="#5aa4e6" stroke="#1e77c8" stroke-width="0.9"/>
<path d="M2 7 V2 H20 V10" stroke="#6aaef0" stroke-width="0" fill="none"/>
<circle cx="15.5" cy="5" r="1.2" fill="#e8862d"/>
</svg>
<div style="position:absolute;left:1235.00px;top:333.13px;font-size:15.2px;line-height:15.2px;color:#242424;font-weight:normal;white-space:nowrap;transform:scaleX(0.9021);transform-origin:0 0;">Fill</div>
<div style="position:absolute;left:1242.5px;top:348.5px;width:4px;height:1.1px;background:#242424"></div>
<svg style="position:absolute;left:1202px;top:367px;" width="22" height="20" viewBox="0 0 22 20" fill="none">
<path d="M3 1 H1 V18 H3 M19 1 H21 V18 H19" stroke="#333" stroke-width="1.3" fill="none"/>
<rect x="4" y="3" width="14" height="13" fill="#fff" stroke="#333" stroke-width="1.1"/>
<path d="M4.5 13 L8 9 L11 12 L13.5 10 L17.5 13.5 V15.5 H4.5 Z" fill="#5aa4e6" stroke="#1e77c8" stroke-width="0.8"/>
<circle cx="14.5" cy="6" r="1.1" fill="#e8862d"/>
</svg>
<div style="position:absolute;left:1235.00px;top:370.93px;font-size:15.2px;line-height:15.2px;color:#242424;font-weight:normal;white-space:nowrap;transform:scaleX(0.9484);transform-origin:0 0;">Fit</div>
<div style="position:absolute;left:1245px;top:386.5px;width:4px;height:1.1px;background:#242424"></div>
<div style="position:absolute;left:1364px;top:206.5px;width:241px;height:82.5px;background:#fff;border:1.5px solid #5c5c5c;border-radius:6px;box-sizing:border-box;box-shadow:0 4px 10px rgba(0,0,0,0.2)"></div>
<div style="position:absolute;left:1377.90px;top:217.09px;font-size:13.6px;line-height:13.6px;color:#333;font-weight:bold;white-space:nowrap;transform:scaleX(0.9523);transform-origin:0 0;">Crop</div>
<div style="position:absolute;left:1377.90px;top:242.99px;font-size:13.6px;line-height:13.6px;color:#555;font-weight:normal;white-space:nowrap;transform:scaleX(0.9991);transform-origin:0 0;">Crop your picture to remove any</div>
<div style="position:absolute;left:1377.90px;top:260.89px;font-size:13.6px;line-height:13.6px;color:#555;font-weight:normal;white-space:nowrap;transform:scaleX(0.9601);transform-origin:0 0;">unwanted areas.</div>
</body></html>
